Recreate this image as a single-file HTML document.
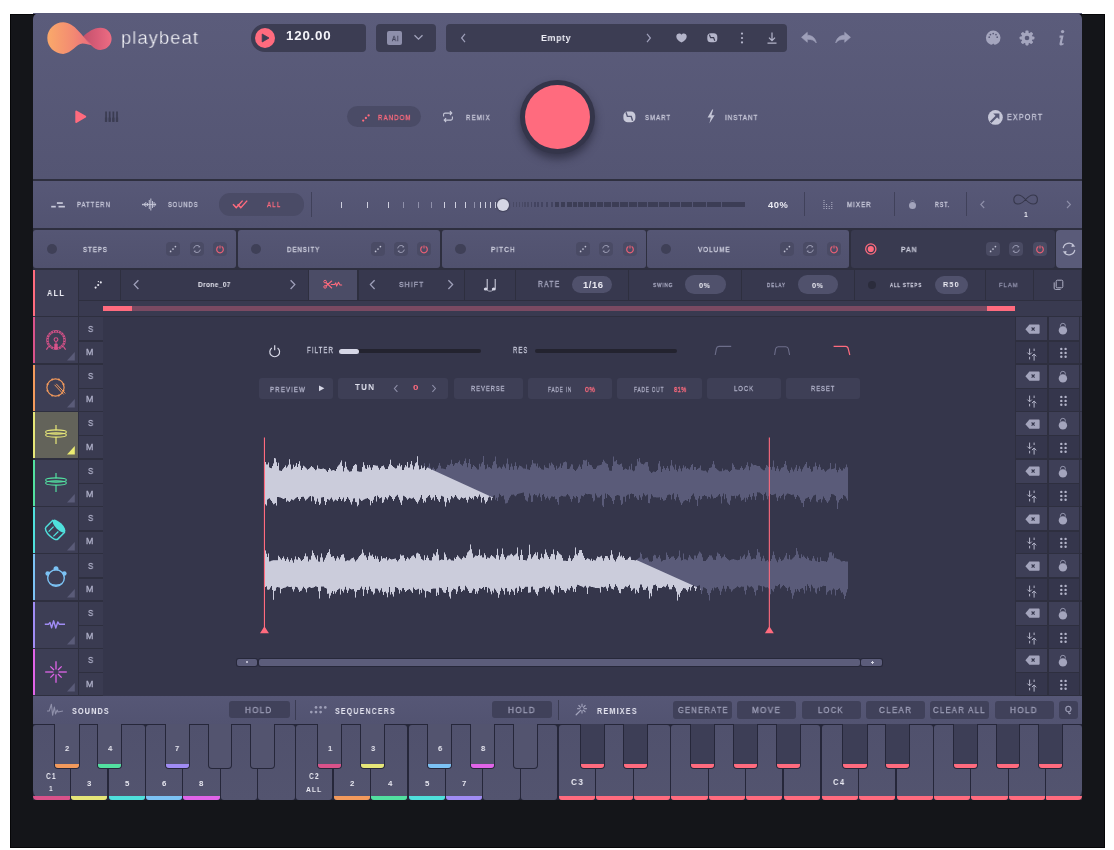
<!DOCTYPE html>
<html><head><meta charset="utf-8"><style>
html,body{margin:0;padding:0;background:#fff;width:1114px;height:850px;overflow:hidden;position:relative;font-family:"Liberation Sans", sans-serif}
div{position:absolute;box-sizing:border-box}
.t{line-height:1;white-space:nowrap;will-change:transform}
</style></head><body>
<div style="left:10px;top:14px;width:1094.8px;height:833.6px;background:#141519;border-radius:0px;border:1px solid #060608"></div>
<div style="left:33px;top:179px;width:1049px;height:621px;background:#2e2f3f;border-radius:0px;"></div>
<div style="left:33px;top:13px;width:1049px;height:166px;background:linear-gradient(#5b5c7b,#545573);border-radius:6px 6px 0 0;"></div>
<div style="left:33px;top:13px;width:1049px;height:1.2px;background:#5a5b7a;border-radius:0px;"></div>
<svg style="position:absolute;left:0px;top:0px;overflow:visible;" width="120" height="60" viewBox="0 0 120 60"><defs>
<linearGradient id="lg1" gradientUnits="userSpaceOnUse" x1="50" y1="0" x2="92" y2="0"><stop offset="0" stop-color="#f9a66b"/><stop offset="0.55" stop-color="#f38a72"/><stop offset="1" stop-color="#ec6a7e"/></linearGradient>
<linearGradient id="lg2" gradientUnits="userSpaceOnUse" x1="84" y1="0" x2="111" y2="0"><stop offset="0" stop-color="#c4526c"/><stop offset="0.5" stop-color="#d95d78"/><stop offset="1" stop-color="#ec6c82"/></linearGradient>
</defs>
<path d="M83.2 36.4 C88 32.5 93 27.8 100.5 27.8 C106.6 27.8 111.6 32.7 111.6 38.8 C111.6 44.9 106.6 49.9 100.5 49.9 C93 49.9 89 42 83.2 36.4 Z" fill="url(#lg2)"/>
<path d="M91.8 45.2 C82 37 75 22.3 63.2 22.3 C54.4 22.3 47.3 29.4 47.3 38.1 C47.3 46.8 54.4 53.9 63.2 53.9 C71 53.9 77 43.5 82.5 43.6 C86 43.7 88.5 45 91.8 45.2 Z" fill="url(#lg1)"/>
<path d="M83.2 36.4 C86.5 39.5 89 42.6 91.8 45.2 C94 46.5 96.5 49 100.5 49.9 C94 48 90 42 83.2 36.4 Z" fill="#e06a7c" opacity="0.6"/></svg>
<div class="t" style="left:121px;top:28px;font-size:19.2px;color:#fbfbfe;font-weight:400;letter-spacing:1.15px;transform:scaleX(0.955);transform-origin:0 0;-webkit-text-stroke:0.35px #595a79">playbeat</div>
<div style="left:251px;top:23.8px;width:115px;height:27.8px;background:#3c3d53;border-radius:14px 4px 4px 14px;"></div>
<div style="left:254.7px;top:27.6px;width:20.4px;height:20.4px;background:#ff6b7e;border-radius:50%;"></div>
<svg style="position:absolute;left:254px;top:27px;overflow:visible;" width="22" height="22" viewBox="0 0 22 22"><path d="M8.2 7 L15 11 L8.2 15 Z" fill="#3c3d53" stroke="#3c3d53" stroke-width="0.8" stroke-linejoin="round"/></svg>
<div class="t" style="left:285.82px;top:31.46px;font-size:11.97px;color:#f4f4fa;font-weight:700;letter-spacing:0.72px;transform:scaleX(1.110);transform-origin:0 0;">120.00</div>
<div style="left:375.7px;top:23.8px;width:60px;height:27.8px;background:#3c3d53;border-radius:4px;"></div>
<div style="left:387px;top:30.8px;width:15px;height:14px;background:#8e8fab;border-radius:2px;"></div>
<div class="t" style="left:391.52px;top:35.51px;font-size:6.76px;color:#42435a;font-weight:400;letter-spacing:1.15px;transform:scaleX(0.880);transform-origin:0 0;-webkit-text-stroke:0.3px #42435a;">AI</div>
<svg style="position:absolute;left:411px;top:32px;overflow:visible;" width="14" height="10" viewBox="0 0 14 10"><path d="M3.5 3.2 L7.5 7.2 L11.5 3.2" fill="none" stroke="#a3a4bd" stroke-width="1.3"/></svg>
<div style="left:446px;top:23.8px;width:341px;height:27.8px;background:#3c3d53;border-radius:4px;"></div>
<svg style="position:absolute;left:458px;top:31px;overflow:visible;" width="10" height="14" viewBox="0 0 10 14"><path d="M7 2.8 L3.6 7 L7 11.2" fill="none" stroke="#9fa0ba" stroke-width="1.2"/></svg>
<div class="t" style="left:540.62px;top:33.02px;font-size:9.72px;color:#ededf5;font-weight:700;letter-spacing:0.58px;transform:scaleX(0.926);transform-origin:0 0;">Empty</div>
<svg style="position:absolute;left:644px;top:31px;overflow:visible;" width="10" height="14" viewBox="0 0 10 14"><path d="M3 2.8 L6.4 7 L3 11.2" fill="none" stroke="#9fa0ba" stroke-width="1.2"/></svg>
<svg style="position:absolute;left:675px;top:32px;overflow:visible;" width="13" height="12" viewBox="0 0 13 12"><path d="M6.5 10.6 C3.2 8.4 1.3 6.7 1.3 4.4 C1.3 2.7 2.6 1.5 4.2 1.5 C5.2 1.5 6 2 6.5 2.8 C7 2 7.8 1.5 8.8 1.5 C10.4 1.5 11.7 2.7 11.7 4.4 C11.7 6.7 9.8 8.4 6.5 10.6 Z" fill="#b4b5ca"/></svg>
<svg style="position:absolute;left:706.5px;top:33px;overflow:visible;" width="11" height="10" viewBox="0 0 11 10"><rect x="0.3" y="0.3" width="10" height="9" rx="3.6" fill="#b4b5ca"/><path d="M2.4 1.6 L3.6 4.6 L6.6 4.6 L7.8 7.8" fill="none" stroke="#3c3d53" stroke-width="1.2"/></svg>
<svg style="position:absolute;left:739px;top:31px;overflow:visible;" width="6" height="14" viewBox="0 0 6 14"><circle cx="3" cy="2.6" r="1.1" fill="#b4b5ca"/><circle cx="3" cy="7" r="1.1" fill="#b4b5ca"/><circle cx="3" cy="11.4" r="1.1" fill="#b4b5ca"/></svg>
<svg style="position:absolute;left:765px;top:30px;overflow:visible;" width="14" height="16" viewBox="0 0 14 16"><path d="M7 2.5 L7 10.5 M4 7.6 L7 10.6 L10 7.6 M2.5 13.2 L11.5 13.2" fill="none" stroke="#b4b5ca" stroke-width="1.2"/></svg>
<svg style="position:absolute;left:799px;top:29px;overflow:visible;" width="20" height="17" viewBox="0 0 20 17"><path d="M2.5 8.3 L8.3 3.3 L8.3 6.2 C12.8 6.2 16.5 8.8 17.3 14 C15.4 11.3 12.6 10.3 8.3 10.3 L8.3 13.3 Z" fill="#9e9fb9" stroke="#9e9fb9" stroke-width="0.6" stroke-linejoin="round"/></svg>
<svg style="position:absolute;left:833px;top:29px;overflow:visible;" width="20" height="17" viewBox="0 0 20 17"><path d="M17.5 8.3 L11.7 3.3 L11.7 6.2 C7.2 6.2 3.5 8.8 2.7 14 C4.6 11.3 7.4 10.3 11.7 10.3 L11.7 13.3 Z" fill="#9e9fb9" stroke="#9e9fb9" stroke-width="0.6" stroke-linejoin="round"/></svg>
<svg style="position:absolute;left:984px;top:29px;overflow:visible;" width="18" height="18" viewBox="0 0 18 18"><circle cx="9.2" cy="8.8" r="7.3" fill="#a4a5be"/><path d="M7.6 16.3 L9.2 14.6 L10.8 16.3 Z" fill="#585977"/><circle cx="5.2" cy="8.2" r="0.85" fill="#585977"/><circle cx="6.4" cy="5.6" r="0.85" fill="#585977"/><circle cx="9.2" cy="4.6" r="0.85" fill="#585977"/><circle cx="12" cy="5.6" r="0.85" fill="#585977"/><circle cx="13.2" cy="8.2" r="0.85" fill="#585977"/></svg>
<svg style="position:absolute;left:1018px;top:29px;overflow:visible;" width="18" height="18" viewBox="0 0 18 18"><rect x="7.4" y="1.6" width="3.2" height="3.4" rx="0.8" fill="#a4a5be" transform="rotate(0 9 9)"/><rect x="7.4" y="1.6" width="3.2" height="3.4" rx="0.8" fill="#a4a5be" transform="rotate(45 9 9)"/><rect x="7.4" y="1.6" width="3.2" height="3.4" rx="0.8" fill="#a4a5be" transform="rotate(90 9 9)"/><rect x="7.4" y="1.6" width="3.2" height="3.4" rx="0.8" fill="#a4a5be" transform="rotate(135 9 9)"/><rect x="7.4" y="1.6" width="3.2" height="3.4" rx="0.8" fill="#a4a5be" transform="rotate(180 9 9)"/><rect x="7.4" y="1.6" width="3.2" height="3.4" rx="0.8" fill="#a4a5be" transform="rotate(225 9 9)"/><rect x="7.4" y="1.6" width="3.2" height="3.4" rx="0.8" fill="#a4a5be" transform="rotate(270 9 9)"/><rect x="7.4" y="1.6" width="3.2" height="3.4" rx="0.8" fill="#a4a5be" transform="rotate(315 9 9)"/><circle cx="9" cy="9" r="5.6" fill="#a4a5be"/><circle cx="9" cy="9" r="2.3" fill="#585977"/></svg>
<svg style="position:absolute;left:1055px;top:28px;overflow:visible;" width="12" height="20" viewBox="0 0 12 20"><circle cx="7.6" cy="3.6" r="1.7" fill="#a4a5be"/><path d="M4.6 7.6 L8.6 7.6 L7 14.6 C6.8 15.6 7.6 15.6 8.6 14.9 L8.6 16.4 C6 18.2 3.8 17.8 4.6 15 L5.8 9.8 L4.4 9.8 Z" fill="#a4a5be"/></svg>
<svg style="position:absolute;left:73px;top:109px;overflow:visible;" width="16" height="16" viewBox="0 0 16 16"><path d="M3.3 2.5 L12.2 7.7 L3.3 12.9 Z" fill="#ff6b7e" stroke="#ff6b7e" stroke-width="2" stroke-linejoin="round"/></svg>
<svg style="position:absolute;left:104px;top:111px;overflow:visible;" width="15" height="12" viewBox="0 0 15 12"><rect x="1.20" y="0.5" width="1.7" height="10.3" fill="#3b3c52"/><rect x="0.90" y="6.6" width="2.3" height="4.2" fill="#3b3c52"/><rect x="4.85" y="0.5" width="1.7" height="10.3" fill="#3b3c52"/><rect x="4.55" y="6.6" width="2.3" height="4.2" fill="#3b3c52"/><rect x="8.50" y="0.5" width="1.7" height="10.3" fill="#3b3c52"/><rect x="8.20" y="6.6" width="2.3" height="4.2" fill="#3b3c52"/><rect x="12.15" y="0.5" width="1.7" height="10.3" fill="#3b3c52"/><rect x="11.85" y="6.6" width="2.3" height="4.2" fill="#3b3c52"/></svg>
<div style="left:346.5px;top:105.8px;width:74.7px;height:21.5px;background:#4a4b66;border-radius:11px;"></div>
<svg style="position:absolute;left:360px;top:110px;overflow:visible;" width="12" height="14" viewBox="0 0 12 14"><circle cx="3.2" cy="10.6" r="1.15" fill="#ff6b7e"/><circle cx="5.9" cy="8" r="1.15" fill="#ff6b7e"/><circle cx="8.6" cy="5.4" r="1.15" fill="#ff6b7e"/></svg>
<div class="t" style="left:378.48px;top:113.56px;font-size:7.46px;color:#ff6b7e;font-weight:400;letter-spacing:1.27px;transform:scaleX(0.824);transform-origin:0 0;-webkit-text-stroke:0.3px #ff6b7e;">RANDOM</div>
<svg style="position:absolute;left:441px;top:109px;overflow:visible;" width="14" height="15" viewBox="0 0 14 15"><path d="M2.6 7.6 L2.6 5.6 C2.6 4.6 3.2 4.1 4 4.1 L10.8 4.1 M8.9 2.2 L10.8 4.1 L8.9 6 M11.4 7.6 L11.4 9.6 C11.4 10.6 10.8 11.1 10 11.1 L3.2 11.1 M5.1 9.2 L3.2 11.1 L5.1 13" fill="none" stroke="#c6c7d8" stroke-width="1.1"/></svg>
<div class="t" style="left:465.62px;top:113.56px;font-size:7.46px;color:#cacadb;font-weight:400;letter-spacing:1.27px;transform:scaleX(0.825);transform-origin:0 0;-webkit-text-stroke:0.3px #cacadb;">REMIX</div>
<div style="left:520.2px;top:79.5px;width:74.5px;height:74px;border:5.6px solid #34354a;border-radius:50%;background:#ff6b7e;box-shadow:0 5px 9px rgba(32,32,48,0.6)"></div>
<svg style="position:absolute;left:622.6px;top:110.8px;overflow:visible;" width="13" height="12" viewBox="0 0 13 12"><rect x="0.4" y="0.4" width="12" height="10.9" rx="4.3" fill="#c9cada"/><path d="M3 1.2 L4.4 5.4 L8.2 5.4 L9.6 9.8" fill="none" stroke="#575976" stroke-width="1.4"/></svg>
<div class="t" style="left:645px;top:113.56px;font-size:7.46px;color:#cacadb;font-weight:400;letter-spacing:1.27px;transform:scaleX(0.810);transform-origin:0 0;-webkit-text-stroke:0.3px #cacadb;">SMART</div>
<svg style="position:absolute;left:705px;top:108px;overflow:visible;" width="12" height="17" viewBox="0 0 12 17"><path d="M7.2 1.6 L2.6 9.4 L5.8 9.4 L4.4 15.4 L9.6 7.2 L6.4 7.2 L8.2 1.6 Z" fill="#c4c5d6"/></svg>
<div class="t" style="left:724.76px;top:113.56px;font-size:7.46px;color:#cacadb;font-weight:400;letter-spacing:1.27px;transform:scaleX(0.828);transform-origin:0 0;-webkit-text-stroke:0.3px #cacadb;">INSTANT</div>
<svg style="position:absolute;left:987.6px;top:109.6px;overflow:visible;" width="16" height="16" viewBox="0 0 16 16"><circle cx="7.4" cy="7.4" r="7.4" fill="#c6c7d8"/><path d="M2.6 12.2 L9.6 5.2" stroke="#575976" stroke-width="2.3"/><path d="M5.2 3.4 L11.4 3.4 L11.4 9.6 Z" fill="#575976"/></svg>
<div class="t" style="left:1006.62px;top:113.35px;font-size:9.01px;color:#c4c5d7;font-weight:400;letter-spacing:1.53px;transform:scaleX(0.789);transform-origin:0 0;-webkit-text-stroke:0.3px #c4c5d7;">EXPORT</div>
<div style="left:33px;top:181.1px;width:1049px;height:46.5px;background:linear-gradient(#575877,#525371);border-radius:0px;"></div>
<svg style="position:absolute;left:50px;top:199px;overflow:visible;" width="16" height="10" viewBox="0 0 16 10"><rect x="1.2" y="6.8" width="4.6" height="1.7" fill="#c8c9da"/><rect x="6.9" y="3.2" width="5.9" height="1.7" fill="#c8c9da"/><rect x="8.5" y="6.8" width="6.4" height="1.7" fill="#c8c9da"/></svg>
<div class="t" style="left:76.52px;top:201.04px;font-size:7.61px;color:#c8c9da;font-weight:400;letter-spacing:1.29px;transform:scaleX(0.780);transform-origin:0 0;-webkit-text-stroke:0.3px #c8c9da;">PATTERN</div>
<svg style="position:absolute;left:142px;top:198px;overflow:visible;" width="14" height="14" viewBox="0 0 14 14"><rect x="0.2" y="5.8" width="0.9" height="1.5" fill="#c8c9da"/><rect x="1.8" y="5.0" width="0.9" height="3" fill="#c8c9da"/><rect x="3.4" y="4.0" width="0.9" height="5" fill="#c8c9da"/><rect x="5.0" y="5.0" width="0.9" height="3" fill="#c8c9da"/><rect x="6.8" y="2.0" width="0.9" height="9" fill="#c8c9da"/><rect x="8.4" y="0.5" width="0.9" height="12" fill="#c8c9da"/><rect x="10.0" y="3.0" width="0.9" height="7" fill="#c8c9da"/><rect x="11.6" y="4.0" width="0.9" height="5" fill="#c8c9da"/><rect x="13.2" y="5.5" width="0.9" height="2" fill="#c8c9da"/><rect x="0" y="6.1" width="14" height="0.8" fill="#c8c9da"/></svg>
<div class="t" style="left:168.24px;top:201.04px;font-size:7.61px;color:#c8c9da;font-weight:400;letter-spacing:1.29px;transform:scaleX(0.756);transform-origin:0 0;-webkit-text-stroke:0.3px #c8c9da;">SOUNDS</div>
<div style="left:219.1px;top:193.3px;width:85px;height:22.3px;background:#4a4b66;border-radius:11px;"></div>
<svg style="position:absolute;left:231px;top:197px;overflow:visible;" width="18" height="14" viewBox="0 0 18 14"><path d="M2 7.2 L5.2 10.6 L11.6 3.6 M6.6 7.2 L9.8 10.6 L16.2 3.6" fill="none" stroke="#ff6b7e" stroke-width="1.4"/></svg>
<div class="t" style="left:267.1px;top:201.04px;font-size:7.61px;color:#ff6b7e;font-weight:400;letter-spacing:1.29px;transform:scaleX(0.819);transform-origin:0 0;-webkit-text-stroke:0.3px #ff6b7e;">ALL</div>
<div style="left:311.2px;top:192.4px;width:1px;height:24.3px;background:#40415a;border-radius:0px;"></div>
<div style="left:341px;top:201.8px;width:1.1px;height:5.8px;background:#cfd0df;border-radius:0px;"></div>
<div style="left:367px;top:201.8px;width:1.1px;height:5.8px;background:#cfd0df;border-radius:0px;"></div>
<div style="left:387.8px;top:201.8px;width:1.1px;height:5.8px;background:#cfd0df;border-radius:0px;"></div>
<div style="left:403px;top:201.8px;width:1.1px;height:5.8px;background:#8f90aa;border-radius:0px;"></div>
<div style="left:417.8px;top:201.8px;width:1.1px;height:5.8px;background:#8f90aa;border-radius:0px;"></div>
<div style="left:431.2px;top:201.8px;width:1.1px;height:5.8px;background:#8f90aa;border-radius:0px;"></div>
<div style="left:443.9px;top:201.8px;width:1.1px;height:5.8px;background:#cfd0df;border-radius:0px;"></div>
<div style="left:454.9px;top:201.8px;width:1.1px;height:5.8px;background:#cfd0df;border-radius:0px;"></div>
<div style="left:465px;top:201.8px;width:1.1px;height:5.8px;background:#cfd0df;border-radius:0px;"></div>
<div style="left:473.5px;top:201.8px;width:1.1px;height:5.8px;background:#8f90aa;border-radius:0px;"></div>
<div style="left:479.8px;top:201.8px;width:1.1px;height:5.8px;background:#cfd0df;border-radius:0px;"></div>
<div style="left:484.9px;top:201.8px;width:1.1px;height:5.8px;background:#cfd0df;border-radius:0px;"></div>
<div style="left:489.7px;top:201.8px;width:1.1px;height:5.8px;background:#cfd0df;border-radius:0px;"></div>
<div style="left:494.6px;top:201.8px;width:1.1px;height:5.8px;background:#cfd0df;border-radius:0px;"></div>
<div style="left:512.8px;top:201.8px;width:1.4px;height:5.6px;background:#484964;border-radius:0px;"></div>
<div style="left:516.2px;top:201.8px;width:1px;height:5.6px;background:#484964;border-radius:0px;"></div>
<div style="left:518.7px;top:201.8px;width:1.2px;height:5.6px;background:#484964;border-radius:0px;"></div>
<div style="left:521.9px;top:201.8px;width:1.2px;height:5.6px;background:#484964;border-radius:0px;"></div>
<div style="left:524.4px;top:201.8px;width:1.2px;height:5.6px;background:#484964;border-radius:0px;"></div>
<div style="left:527.4px;top:201.8px;width:1.4px;height:5.6px;background:#484964;border-radius:0px;"></div>
<div style="left:530.7px;top:201.8px;width:1.6px;height:5.6px;background:#434460;border-radius:0px;"></div>
<div style="left:534px;top:201.8px;width:1.5px;height:5.6px;background:#434460;border-radius:0px;"></div>
<div style="left:537.4px;top:201.8px;width:1.7px;height:5.6px;background:#434460;border-radius:0px;"></div>
<div style="left:541.4px;top:201.8px;width:2px;height:5.6px;background:#434460;border-radius:0px;"></div>
<div style="left:545.5px;top:201.8px;width:2.3px;height:5.6px;background:#434460;border-radius:0px;"></div>
<div style="left:550.5px;top:201.8px;width:2.7px;height:5.6px;background:#434460;border-radius:0px;"></div>
<div style="left:555.4px;top:201.8px;width:3.6px;height:5.6px;background:#3c3d55;border-radius:0px;"></div>
<div style="left:561.1px;top:201.8px;width:4.2px;height:5.6px;background:#3c3d55;border-radius:0px;"></div>
<div style="left:567px;top:201.8px;width:4.5px;height:5.6px;background:#3c3d55;border-radius:0px;"></div>
<div style="left:572.5px;top:201.8px;width:4.4px;height:5.6px;background:#3c3d55;border-radius:0px;"></div>
<div style="left:577.9px;top:201.8px;width:5px;height:5.6px;background:#3c3d55;border-radius:0px;"></div>
<div style="left:583.8px;top:201.8px;width:5.5px;height:5.6px;background:#3c3d55;border-radius:0px;"></div>
<div style="left:590.3px;top:201.8px;width:5.9px;height:5.6px;background:#3c3d55;border-radius:0px;"></div>
<div style="left:597.2px;top:201.8px;width:5.9px;height:5.6px;background:#3c3d55;border-radius:0px;"></div>
<div style="left:604.3px;top:201.8px;width:7px;height:5.6px;background:#3c3d55;border-radius:0px;"></div>
<div style="left:612.3px;top:201.8px;width:7.1px;height:5.6px;background:#3c3d55;border-radius:0px;"></div>
<div style="left:620.4px;top:201.8px;width:7.6px;height:5.6px;background:#3c3d55;border-radius:0px;"></div>
<div style="left:629px;top:201.8px;width:8.2px;height:5.6px;background:#3c3d55;border-radius:0px;"></div>
<div style="left:638.2px;top:201.8px;width:8.8px;height:5.6px;background:#3c3d55;border-radius:0px;"></div>
<div style="left:648px;top:201.8px;width:9.8px;height:5.6px;background:#3c3d55;border-radius:0px;"></div>
<div style="left:658.8px;top:201.8px;width:10px;height:5.6px;background:#3c3d55;border-radius:0px;"></div>
<div style="left:669.8px;top:201.8px;width:10.1px;height:5.6px;background:#3c3d55;border-radius:0px;"></div>
<div style="left:680.9px;top:201.8px;width:11.5px;height:5.6px;background:#3c3d55;border-radius:0px;"></div>
<div style="left:693.4px;top:201.8px;width:12.4px;height:5.6px;background:#3c3d55;border-radius:0px;"></div>
<div style="left:706.8px;top:201.8px;width:13.8px;height:5.6px;background:#3c3d55;border-radius:0px;"></div>
<div style="left:721.6px;top:201.8px;width:23.7px;height:5.6px;background:#3c3d55;border-radius:0px;"></div>
<div style="left:497.1px;top:198.6px;width:12px;height:12px;background:#d5d6e5;border-radius:50%;box-shadow:0 0 1px 1px rgba(50,50,70,0.5)"></div>
<div class="t" style="left:768px;top:200.63px;font-size:8.73px;color:#ebebf3;font-weight:700;letter-spacing:0.52px;transform:scaleX(1.072);transform-origin:0 0;">40%</div>
<div style="left:804.3px;top:192px;width:1px;height:24.4px;background:#40415a;border-radius:0px;"></div>
<svg style="position:absolute;left:822.5px;top:200px;overflow:visible;" width="11" height="10" viewBox="0 0 11 10"><rect x="0.5" y="0" width="1" height="1" fill="#b4b5c9"/><rect x="0.5" y="2" width="1" height="1" fill="#b4b5c9"/><rect x="0.5" y="4" width="1" height="1" fill="#b4b5c9"/><rect x="0.5" y="6" width="1" height="1" fill="#b4b5c9"/><rect x="0.5" y="8" width="1" height="1" fill="#b4b5c9"/><rect x="3.1" y="4" width="1" height="1" fill="#b4b5c9"/><rect x="3.1" y="6" width="1" height="1" fill="#b4b5c9"/><rect x="3.1" y="8" width="1" height="1" fill="#b4b5c9"/><rect x="5.7" y="6" width="1" height="1" fill="#b4b5c9"/><rect x="5.7" y="8" width="1" height="1" fill="#b4b5c9"/><rect x="8.3" y="2" width="1" height="1" fill="#b4b5c9"/><rect x="8.3" y="4" width="1" height="1" fill="#b4b5c9"/><rect x="8.3" y="6" width="1" height="1" fill="#b4b5c9"/><rect x="8.3" y="8" width="1" height="1" fill="#b4b5c9"/></svg>
<div class="t" style="left:846.52px;top:202.41px;font-size:6.76px;color:#c8c9da;font-weight:400;letter-spacing:1.15px;transform:scaleX(0.911);transform-origin:0 0;-webkit-text-stroke:0.3px #c8c9da;">MIXER</div>
<div style="left:893.7px;top:192px;width:1px;height:24.4px;background:#40415a;border-radius:0px;"></div>
<svg style="position:absolute;left:906px;top:198px;overflow:visible;" width="13" height="13" viewBox="0 0 13 13"><circle cx="6.5" cy="7.6" r="3.5" fill="#a3a4bc"/><path d="M4.6 5.2 L4.6 4.2 A1.9 1.9 0 0 1 8.4 4.2 L8.4 5.2" fill="none" stroke="#7a7b96" stroke-width="0.8"/></svg>
<div class="t" style="left:934.76px;top:202.41px;font-size:6.76px;color:#c8c9da;font-weight:400;letter-spacing:1.15px;transform:scaleX(0.785);transform-origin:0 0;-webkit-text-stroke:0.3px #c8c9da;">RST.</div>
<div style="left:966.4px;top:192px;width:1px;height:24.4px;background:#40415a;border-radius:0px;"></div>
<svg style="position:absolute;left:978px;top:198px;overflow:visible;" width="9" height="13" viewBox="0 0 9 13"><path d="M6.2 3 L2.8 6.5 L6.2 10" fill="none" stroke="#8e8fa9" stroke-width="1.1"/></svg>
<svg style="position:absolute;left:1011px;top:193px;overflow:visible;" width="30" height="13" viewBox="0 0 30 13"><path d="M14.6 6.5 C11.4 3 9.2 2 7 2 C4.4 2 2.8 4 2.8 6.5 C2.8 9 4.4 11 7 11 C9.2 11 11.4 10 14.6 6.5 C17.8 3 20 2 22.2 2 C24.8 2 26.4 4 26.4 6.5 C26.4 9 24.8 11 22.2 11 C20 11 17.8 10 14.6 6.5 Z" fill="none" stroke="#36374b" stroke-width="1.1"/></svg>
<div class="t" style="left:1024.38px;top:211.28px;font-size:8px;color:#eeeef5;font-weight:700;letter-spacing:0.48px;transform:scaleX(0.850);transform-origin:0 0;">1</div>
<svg style="position:absolute;left:1064px;top:198px;overflow:visible;" width="9" height="13" viewBox="0 0 9 13"><path d="M3 3 L6.4 6.5 L3 10" fill="none" stroke="#8e8fa9" stroke-width="1.1"/></svg>
<div style="left:33px;top:229.9px;width:202.8px;height:38px;background:linear-gradient(#555674,#50516e);border-radius:3px;"></div>
<div style="left:46.6px;top:243.8px;width:10.4px;height:10.4px;background:#3f4057;border-radius:50%;"></div>
<div class="t" style="left:83px;top:246.88px;font-size:6.9px;color:#d0d1e0;font-weight:400;letter-spacing:1.17px;transform:scaleX(0.872);transform-origin:0 0;-webkit-text-stroke:0.3px #d0d1e0;">STEPS</div>
<div style="left:166.2px;top:241.8px;width:14px;height:13.8px;background:#4a4b65;border-radius:4px;"></div>
<svg style="position:absolute;left:166.2px;top:241.8px;overflow:visible;" width="14" height="14" viewBox="0 0 14 14"><circle cx="4.6" cy="9.4" r="0.85" fill="#c2c3d5"/><circle cx="7" cy="7" r="0.85" fill="#c2c3d5"/><circle cx="9.4" cy="4.6" r="0.85" fill="#c2c3d5"/></svg>
<div style="left:189.6px;top:241.8px;width:14px;height:13.8px;background:#4a4b65;border-radius:4px;"></div>
<svg style="position:absolute;left:189.6px;top:241.8px;overflow:visible;" width="14" height="14" viewBox="0 0 14 14"><path d="M3.7 6.4 A3.4 3.4 0 0 1 9.6 4.6 M10.3 7.6 A3.4 3.4 0 0 1 4.4 9.4" fill="none" stroke="#9a9bb3" stroke-width="1"/><path d="M8.8 3.4 L10.5 5 L8.5 5.7 Z M5.2 10.6 L3.5 9 L5.5 8.3 Z" fill="#9a9bb3"/></svg>
<div style="left:213px;top:241.8px;width:14px;height:13.8px;background:#4a4b65;border-radius:4px;"></div>
<svg style="position:absolute;left:213px;top:241.8px;overflow:visible;" width="14" height="14" viewBox="0 0 14 14"><path d="M5.4 4.6 A3.3 3.3 0 1 0 8.6 4.6" fill="none" stroke="#ea6075" stroke-width="1.2"/><path d="M7 3.6 L7 6.4" stroke="#ea6075" stroke-width="1.1"/></svg>
<div style="left:237.5px;top:229.9px;width:202.7px;height:38px;background:linear-gradient(#555674,#50516e);border-radius:3px;"></div>
<div style="left:251.1px;top:243.8px;width:10.4px;height:10.4px;background:#3f4057;border-radius:50%;"></div>
<div class="t" style="left:287.1px;top:246.88px;font-size:6.9px;color:#d0d1e0;font-weight:400;letter-spacing:1.17px;transform:scaleX(0.874);transform-origin:0 0;-webkit-text-stroke:0.3px #d0d1e0;">DENSITY</div>
<div style="left:370.6px;top:241.8px;width:14px;height:13.8px;background:#4a4b65;border-radius:4px;"></div>
<svg style="position:absolute;left:370.6px;top:241.8px;overflow:visible;" width="14" height="14" viewBox="0 0 14 14"><circle cx="4.6" cy="9.4" r="0.85" fill="#c2c3d5"/><circle cx="7" cy="7" r="0.85" fill="#c2c3d5"/><circle cx="9.4" cy="4.6" r="0.85" fill="#c2c3d5"/></svg>
<div style="left:394px;top:241.8px;width:14px;height:13.8px;background:#4a4b65;border-radius:4px;"></div>
<svg style="position:absolute;left:394px;top:241.8px;overflow:visible;" width="14" height="14" viewBox="0 0 14 14"><path d="M3.7 6.4 A3.4 3.4 0 0 1 9.6 4.6 M10.3 7.6 A3.4 3.4 0 0 1 4.4 9.4" fill="none" stroke="#9a9bb3" stroke-width="1"/><path d="M8.8 3.4 L10.5 5 L8.5 5.7 Z M5.2 10.6 L3.5 9 L5.5 8.3 Z" fill="#9a9bb3"/></svg>
<div style="left:417.4px;top:241.8px;width:14px;height:13.8px;background:#4a4b65;border-radius:4px;"></div>
<svg style="position:absolute;left:417.4px;top:241.8px;overflow:visible;" width="14" height="14" viewBox="0 0 14 14"><path d="M5.4 4.6 A3.3 3.3 0 1 0 8.6 4.6" fill="none" stroke="#ea6075" stroke-width="1.2"/><path d="M7 3.6 L7 6.4" stroke="#ea6075" stroke-width="1.1"/></svg>
<div style="left:441.8px;top:229.9px;width:203.8px;height:38px;background:linear-gradient(#555674,#50516e);border-radius:3px;"></div>
<div style="left:455.4px;top:243.8px;width:10.4px;height:10.4px;background:#3f4057;border-radius:50%;"></div>
<div class="t" style="left:491.48px;top:246.88px;font-size:6.9px;color:#d0d1e0;font-weight:400;letter-spacing:1.17px;transform:scaleX(0.928);transform-origin:0 0;-webkit-text-stroke:0.3px #d0d1e0;">PITCH</div>
<div style="left:576px;top:241.8px;width:14px;height:13.8px;background:#4a4b65;border-radius:4px;"></div>
<svg style="position:absolute;left:576px;top:241.8px;overflow:visible;" width="14" height="14" viewBox="0 0 14 14"><circle cx="4.6" cy="9.4" r="0.85" fill="#c2c3d5"/><circle cx="7" cy="7" r="0.85" fill="#c2c3d5"/><circle cx="9.4" cy="4.6" r="0.85" fill="#c2c3d5"/></svg>
<div style="left:599.4px;top:241.8px;width:14px;height:13.8px;background:#4a4b65;border-radius:4px;"></div>
<svg style="position:absolute;left:599.4px;top:241.8px;overflow:visible;" width="14" height="14" viewBox="0 0 14 14"><path d="M3.7 6.4 A3.4 3.4 0 0 1 9.6 4.6 M10.3 7.6 A3.4 3.4 0 0 1 4.4 9.4" fill="none" stroke="#9a9bb3" stroke-width="1"/><path d="M8.8 3.4 L10.5 5 L8.5 5.7 Z M5.2 10.6 L3.5 9 L5.5 8.3 Z" fill="#9a9bb3"/></svg>
<div style="left:622.8px;top:241.8px;width:14px;height:13.8px;background:#4a4b65;border-radius:4px;"></div>
<svg style="position:absolute;left:622.8px;top:241.8px;overflow:visible;" width="14" height="14" viewBox="0 0 14 14"><path d="M5.4 4.6 A3.3 3.3 0 1 0 8.6 4.6" fill="none" stroke="#ea6075" stroke-width="1.2"/><path d="M7 3.6 L7 6.4" stroke="#ea6075" stroke-width="1.1"/></svg>
<div style="left:647.2px;top:229.9px;width:202.2px;height:38px;background:linear-gradient(#555674,#50516e);border-radius:3px;"></div>
<div style="left:660.8px;top:243.8px;width:10.4px;height:10.4px;background:#3f4057;border-radius:50%;"></div>
<div class="t" style="left:697.52px;top:246.88px;font-size:6.9px;color:#d0d1e0;font-weight:400;letter-spacing:1.17px;transform:scaleX(0.904);transform-origin:0 0;-webkit-text-stroke:0.3px #d0d1e0;">VOLUME</div>
<div style="left:779.8px;top:241.8px;width:14px;height:13.8px;background:#4a4b65;border-radius:4px;"></div>
<svg style="position:absolute;left:779.8px;top:241.8px;overflow:visible;" width="14" height="14" viewBox="0 0 14 14"><circle cx="4.6" cy="9.4" r="0.85" fill="#c2c3d5"/><circle cx="7" cy="7" r="0.85" fill="#c2c3d5"/><circle cx="9.4" cy="4.6" r="0.85" fill="#c2c3d5"/></svg>
<div style="left:803.2px;top:241.8px;width:14px;height:13.8px;background:#4a4b65;border-radius:4px;"></div>
<svg style="position:absolute;left:803.2px;top:241.8px;overflow:visible;" width="14" height="14" viewBox="0 0 14 14"><path d="M3.7 6.4 A3.4 3.4 0 0 1 9.6 4.6 M10.3 7.6 A3.4 3.4 0 0 1 4.4 9.4" fill="none" stroke="#9a9bb3" stroke-width="1"/><path d="M8.8 3.4 L10.5 5 L8.5 5.7 Z M5.2 10.6 L3.5 9 L5.5 8.3 Z" fill="#9a9bb3"/></svg>
<div style="left:826.6px;top:241.8px;width:14px;height:13.8px;background:#4a4b65;border-radius:4px;"></div>
<svg style="position:absolute;left:826.6px;top:241.8px;overflow:visible;" width="14" height="14" viewBox="0 0 14 14"><path d="M5.4 4.6 A3.3 3.3 0 1 0 8.6 4.6" fill="none" stroke="#ea6075" stroke-width="1.2"/><path d="M7 3.6 L7 6.4" stroke="#ea6075" stroke-width="1.1"/></svg>
<div style="left:851px;top:229.9px;width:204.4px;height:38px;background:#393a50;border-radius:3px;"></div>
<svg style="position:absolute;left:864px;top:242px;overflow:visible;" width="14" height="14" viewBox="0 0 14 14"><circle cx="6.8" cy="7" r="5.1" fill="none" stroke="#ff6b7e" stroke-width="1.3"/><circle cx="6.8" cy="7" r="3.1" fill="#ff6b7e"/></svg>
<div class="t" style="left:901px;top:246.88px;font-size:6.9px;color:#d0d1e0;font-weight:400;letter-spacing:1.17px;transform:scaleX(0.966);transform-origin:0 0;-webkit-text-stroke:0.3px #d0d1e0;">PAN</div>
<div style="left:985.8px;top:241.8px;width:14px;height:13.8px;background:#4a4b63;border-radius:4px;"></div>
<svg style="position:absolute;left:985.8px;top:241.8px;overflow:visible;" width="14" height="14" viewBox="0 0 14 14"><circle cx="4.6" cy="9.4" r="0.85" fill="#c2c3d5"/><circle cx="7" cy="7" r="0.85" fill="#c2c3d5"/><circle cx="9.4" cy="4.6" r="0.85" fill="#c2c3d5"/></svg>
<div style="left:1009.2px;top:241.8px;width:14px;height:13.8px;background:#4a4b63;border-radius:4px;"></div>
<svg style="position:absolute;left:1009.2px;top:241.8px;overflow:visible;" width="14" height="14" viewBox="0 0 14 14"><path d="M3.7 6.4 A3.4 3.4 0 0 1 9.6 4.6 M10.3 7.6 A3.4 3.4 0 0 1 4.4 9.4" fill="none" stroke="#9a9bb3" stroke-width="1"/><path d="M8.8 3.4 L10.5 5 L8.5 5.7 Z M5.2 10.6 L3.5 9 L5.5 8.3 Z" fill="#9a9bb3"/></svg>
<div style="left:1032.6px;top:241.8px;width:14px;height:13.8px;background:#4a4b63;border-radius:4px;"></div>
<svg style="position:absolute;left:1032.6px;top:241.8px;overflow:visible;" width="14" height="14" viewBox="0 0 14 14"><path d="M5.4 4.6 A3.3 3.3 0 1 0 8.6 4.6" fill="none" stroke="#ea6075" stroke-width="1.2"/><path d="M7 3.6 L7 6.4" stroke="#ea6075" stroke-width="1.1"/></svg>
<div style="left:1056px;top:229.9px;width:26px;height:38px;background:#5a5b79;border-radius:4px 0 0 4px;"></div>
<svg style="position:absolute;left:1060px;top:240px;overflow:visible;" width="18" height="18" viewBox="0 0 18 18"><path d="M3.2 8.2 A5.9 5.9 0 0 1 13.8 5.6 M14.8 9.8 A5.9 5.9 0 0 1 4.2 12.4" fill="none" stroke="#c2c3d5" stroke-width="1.2"/><path d="M12.2 3.4 L15.3 6.4 L11.4 7.1 Z M5.8 14.6 L2.7 11.6 L6.6 10.9 Z" fill="#c2c3d5"/></svg>
<div style="left:33px;top:269.5px;width:45px;height:46.5px;background:#3d3e55;border-radius:0px;"></div>
<div style="left:33px;top:269.5px;width:1.6px;height:46.5px;background:#ff6b7e;border-radius:0px;"></div>
<div class="t" style="left:46.76px;top:288.73px;font-size:8.45px;color:#ededf5;font-weight:700;letter-spacing:1.44px;transform:scaleX(0.873);transform-origin:0 0;">ALL</div>
<div style="left:79px;top:269.5px;width:40.6px;height:30.3px;background:#37384e;border-radius:0px;"></div>
<div style="left:120.6px;top:269.5px;width:187px;height:30.3px;background:#37384e;border-radius:0px;"></div>
<div style="left:308.6px;top:269.5px;width:48.9px;height:30.3px;background:#4b4c66;border-radius:0px;"></div>
<div style="left:358.5px;top:269.5px;width:105.3px;height:30.3px;background:#37384e;border-radius:0px;"></div>
<div style="left:464.8px;top:269.5px;width:49.8px;height:30.3px;background:#37384e;border-radius:0px;"></div>
<div style="left:515.6px;top:269.5px;width:112.2px;height:30.3px;background:#37384e;border-radius:0px;"></div>
<div style="left:628.8px;top:269.5px;width:112px;height:30.3px;background:#37384e;border-radius:0px;"></div>
<div style="left:741.8px;top:269.5px;width:111.9px;height:30.3px;background:#37384e;border-radius:0px;"></div>
<div style="left:854.7px;top:269.5px;width:129.9px;height:30.3px;background:#37384e;border-radius:0px;"></div>
<div style="left:985.6px;top:269.5px;width:47.2px;height:30.3px;background:#37384e;border-radius:0px;"></div>
<div style="left:1033.8px;top:269.5px;width:47.7px;height:30.3px;background:#37384e;border-radius:0px;"></div>
<div style="left:79px;top:300.9px;width:1003px;height:15.3px;background:#393a50;border-radius:0px;"></div>
<div style="left:103.4px;top:306.3px;width:912px;height:4.7px;background:#7a4a62;border-radius:0px;"></div>
<div style="left:103.4px;top:306.3px;width:28.6px;height:4.7px;background:#ff6b7e;border-radius:0px;"></div>
<div style="left:987px;top:306.3px;width:28.4px;height:4.7px;background:#ff6b7e;border-radius:0px;"></div>
<svg style="position:absolute;left:93px;top:279px;overflow:visible;" width="12" height="12" viewBox="0 0 12 12"><circle cx="2.6" cy="8.6" r="1.05" fill="#e6e6f0"/><circle cx="5.2" cy="6" r="1.05" fill="#e6e6f0"/><circle cx="7.8" cy="3.4" r="1.05" fill="#e6e6f0"/><circle cx="5.4" cy="2.6" r="0.7" fill="#e6e6f0"/></svg>
<svg style="position:absolute;left:131px;top:277px;overflow:visible;" width="10" height="14" viewBox="0 0 10 14"><path d="M7.4 3.2 L3.2 7.6 L7.4 12" fill="none" stroke="#9fa0ba" stroke-width="1.3"/></svg>
<div class="t" style="left:198px;top:281.42px;font-size:7.04px;color:#e6e6f0;font-weight:700;letter-spacing:0.42px;transform:scaleX(0.925);transform-origin:0 0;">Drone_07</div>
<svg style="position:absolute;left:287px;top:277px;overflow:visible;" width="10" height="14" viewBox="0 0 10 14"><path d="M3.6 3.2 L7.8 7.6 L3.6 12" fill="none" stroke="#9fa0ba" stroke-width="1.3"/></svg>
<svg style="position:absolute;left:318px;top:274px;overflow:visible;" width="30" height="20" viewBox="0 0 30 20"><circle cx="7.1" cy="7.6" r="1.3" fill="none" stroke="#ff6b7e" stroke-width="1"/><circle cx="7.1" cy="12.9" r="1.3" fill="none" stroke="#ff6b7e" stroke-width="1"/><path d="M8 8.5 L13.7 14 M8 12 L13.7 7 M13.2 10.5 L16.7 10.5 L17.8 8.9 L18.6 12.1 L20.5 8.3 L22 11 L23.7 11" fill="none" stroke="#ff6b7e" stroke-width="1.05" stroke-linejoin="round" stroke-linecap="round"/></svg>
<svg style="position:absolute;left:367px;top:277px;overflow:visible;" width="10" height="14" viewBox="0 0 10 14"><path d="M7.6 3.2 L3.4 7.6 L7.6 12" fill="none" stroke="#9fa0ba" stroke-width="1.3"/></svg>
<div class="t" style="left:399.14px;top:281.32px;font-size:7.61px;color:#a8a9c1;font-weight:400;letter-spacing:1.29px;transform:scaleX(0.895);transform-origin:0 0;-webkit-text-stroke:0.3px #a8a9c1;">SHIFT</div>
<svg style="position:absolute;left:446px;top:277px;overflow:visible;" width="10" height="14" viewBox="0 0 10 14"><path d="M2.4 3.2 L6.6 7.6 L2.4 12" fill="none" stroke="#9fa0ba" stroke-width="1.3"/></svg>
<svg style="position:absolute;left:482px;top:276px;overflow:visible;" width="16" height="16" viewBox="0 0 16 16"><path d="M5.2 3 L5.2 12.6 M13.2 3 L13.2 12.6" stroke="#d6d7e6" stroke-width="1"/><ellipse cx="3.8" cy="13" rx="2" ry="1.5" fill="#d6d7e6"/><ellipse cx="11.8" cy="13" rx="2" ry="1.5" fill="#d6d7e6"/><path d="M5 14 C6.5 15.6 9.5 15.6 11 14" fill="none" stroke="#d6d7e6" stroke-width="0.7"/></svg>
<div class="t" style="left:538.48px;top:280.57px;font-size:8.17px;color:#a8a9c1;font-weight:400;letter-spacing:1.39px;transform:scaleX(0.835);transform-origin:0 0;-webkit-text-stroke:0.3px #a8a9c1;">RATE</div>
<div style="left:572px;top:275.6px;width:40.2px;height:17.9px;background:#50516c;border-radius:9px;"></div>
<div class="t" style="left:583.1px;top:280.51px;font-size:8.87px;color:#ebebf3;font-weight:700;letter-spacing:0.53px;transform:scaleX(1.068);transform-origin:0 0;">1/16</div>
<div class="t" style="left:652.76px;top:283.33px;font-size:5.92px;color:#a8a9c1;font-weight:400;letter-spacing:1.01px;transform:scaleX(0.803);transform-origin:0 0;-webkit-text-stroke:0.3px #a8a9c1;">SWING</div>
<div style="left:684.9px;top:275.4px;width:40.7px;height:18.4px;background:#50516c;border-radius:9.2px;"></div>
<div class="t" style="left:699.14px;top:281.7px;font-size:7.61px;color:#ebebf3;font-weight:700;letter-spacing:0.46px;transform:scaleX(0.954);transform-origin:0 0;">0%</div>
<div class="t" style="left:766.52px;top:283.33px;font-size:5.92px;color:#a8a9c1;font-weight:400;letter-spacing:1.01px;transform:scaleX(0.783);transform-origin:0 0;-webkit-text-stroke:0.3px #a8a9c1;">DELAY</div>
<div style="left:798px;top:275.4px;width:40.4px;height:18.4px;background:#50516c;border-radius:9.2px;"></div>
<div class="t" style="left:812px;top:281.7px;font-size:7.61px;color:#ebebf3;font-weight:700;letter-spacing:0.46px;transform:scaleX(0.954);transform-origin:0 0;">0%</div>
<div style="left:867.8px;top:280.8px;width:7.8px;height:7.8px;background:#2b2c3c;border-radius:50%;"></div>
<div class="t" style="left:889.62px;top:283.19px;font-size:5.92px;color:#cacadb;font-weight:400;letter-spacing:1.01px;transform:scaleX(0.794);transform-origin:0 0;-webkit-text-stroke:0.3px #cacadb;">ALL STEPS</div>
<div style="left:935px;top:275.6px;width:33.1px;height:18.1px;background:#50516c;border-radius:9px;"></div>
<div class="t" style="left:943.1px;top:281.18px;font-size:7.75px;color:#ebebf3;font-weight:700;letter-spacing:1.32px;transform:scaleX(0.923);transform-origin:0 0;">R50</div>
<div class="t" style="left:999.48px;top:283.19px;font-size:5.92px;color:#8d8ea8;font-weight:400;letter-spacing:1.01px;transform:scaleX(0.983);transform-origin:0 0;-webkit-text-stroke:0.3px #8d8ea8;">FLAM</div>
<svg style="position:absolute;left:1052px;top:278px;overflow:visible;" width="13" height="13" viewBox="0 0 13 13"><rect x="4.2" y="2.2" width="6.6" height="7.6" rx="1.2" fill="none" stroke="#b0b1c6" stroke-width="1"/><path d="M2.2 4.4 L2.2 10.2 C2.2 11 2.6 11.4 3.4 11.4 L8.6 11.4" fill="none" stroke="#b0b1c6" stroke-width="1"/></svg>
<div style="left:33px;top:317.1px;width:45px;height:46.4px;background:#3d3e55;border-radius:0px;"></div>
<div style="left:33px;top:317.1px;width:1.6px;height:46.4px;background:#d9528a;border-radius:0px;"></div>
<svg style="position:absolute;left:66.6px;top:351.7px;overflow:visible;" width="7.8" height="8.6" viewBox="0 0 7.8 8.6"><path d="M7.8 0 L7.8 8.6 L0 8.6 Z" fill="#5a5b78"/></svg>
<div style="left:79px;top:317.1px;width:23.5px;height:23.3px;background:#3a3b51;border-radius:0px;"></div>
<div style="left:79px;top:341.7px;width:23.5px;height:21.8px;background:#3a3b51;border-radius:0px;"></div>
<div class="t" style="left:87.86px;top:324.53px;font-size:9.15px;color:#adaec6;font-weight:400;letter-spacing:1.56px;transform:scaleX(0.871);transform-origin:0 0;-webkit-text-stroke:0.3px #adaec6;">S</div>
<div class="t" style="left:86.44px;top:347.55px;font-size:8.45px;color:#adaec6;font-weight:400;letter-spacing:1.44px;transform:scaleX(1.049);transform-origin:0 0;-webkit-text-stroke:0.3px #adaec6;">M</div>
<div style="left:1015.9px;top:317.1px;width:31.2px;height:23.3px;background:#3e3f57;border-radius:0px;"></div>
<div style="left:1048.5px;top:317.1px;width:30.3px;height:23.3px;background:#3e3f57;border-radius:0px;"></div>
<div style="left:1015.9px;top:341.7px;width:31.2px;height:21.8px;background:#35364c;border-radius:0px;"></div>
<div style="left:1048.5px;top:341.7px;width:30.3px;height:21.8px;background:#35364c;border-radius:0px;"></div>
<div style="left:1080px;top:317.1px;width:2px;height:46.4px;background:#3a3b51;border-radius:0px;"></div>
<svg style="position:absolute;left:1024.5px;top:323.9px;overflow:visible;" width="15" height="11" viewBox="0 0 15 11"><path d="M4.4 0.6 L13.6 0.6 C14.2 0.6 14.6 1 14.6 1.6 L14.6 8.8 C14.6 9.4 14.2 9.8 13.6 9.8 L4.4 9.8 L0.4 5.2 Z" fill="#a3a4bc"/><path d="M6.6 3.5 L9.6 6.7 M9.6 3.5 L6.6 6.7" stroke="#35364c" stroke-width="1.1"/></svg>
<svg style="position:absolute;left:1056px;top:322.4px;overflow:visible;" width="14" height="15" viewBox="0 0 14 15"><circle cx="6.9" cy="8.4" r="4.2" fill="#a3a4bc"/><path d="M4.4 4.6 L4.4 3.8 A2.5 2.5 0 0 1 9.4 3.8 L9.4 4.6" fill="none" stroke="#a3a4bc" stroke-width="0.8"/></svg>
<svg style="position:absolute;left:1024px;top:345.6px;overflow:visible;" width="16" height="15" viewBox="0 0 16 15"><path d="M5.6 2.6 L5.6 8.6 M3.4 6.6 L5.6 8.8 L7.8 6.6 M10.1 14.6 L10.1 8.2 M7.9 10.2 L10.1 8 L12.3 10.2" fill="none" stroke="#b6b7cb" stroke-width="1"/><rect x="5.1" y="10.8" width="1" height="2.6" fill="#b6b7cb"/><rect x="9.6" y="2.6" width="1" height="2.4" fill="#b6b7cb"/></svg>
<svg style="position:absolute;left:1058px;top:346.1px;overflow:visible;" width="12" height="14" viewBox="0 0 12 14"><circle cx="3.3" cy="2.9" r="1.2" fill="#b2b3c8"/><circle cx="3.3" cy="6.9" r="1.2" fill="#b2b3c8"/><circle cx="3.3" cy="10.8" r="1.2" fill="#b2b3c8"/><circle cx="7.6" cy="2.9" r="1.2" fill="#b2b3c8"/><circle cx="7.6" cy="6.9" r="1.2" fill="#b2b3c8"/><circle cx="7.6" cy="10.8" r="1.2" fill="#b2b3c8"/></svg>
<div style="left:33px;top:364.6px;width:45px;height:46.4px;background:#3d3e55;border-radius:0px;"></div>
<div style="left:33px;top:364.6px;width:1.6px;height:46.4px;background:#f39a5c;border-radius:0px;"></div>
<svg style="position:absolute;left:66.6px;top:399.2px;overflow:visible;" width="7.8" height="8.6" viewBox="0 0 7.8 8.6"><path d="M7.8 0 L7.8 8.6 L0 8.6 Z" fill="#5a5b78"/></svg>
<div style="left:79px;top:364.6px;width:23.5px;height:23.3px;background:#3a3b51;border-radius:0px;"></div>
<div style="left:79px;top:389.2px;width:23.5px;height:21.8px;background:#3a3b51;border-radius:0px;"></div>
<div class="t" style="left:87.86px;top:372.11px;font-size:9.15px;color:#adaec6;font-weight:400;letter-spacing:1.56px;transform:scaleX(0.871);transform-origin:0 0;-webkit-text-stroke:0.3px #adaec6;">S</div>
<div class="t" style="left:86.44px;top:395.13px;font-size:8.45px;color:#adaec6;font-weight:400;letter-spacing:1.44px;transform:scaleX(1.049);transform-origin:0 0;-webkit-text-stroke:0.3px #adaec6;">M</div>
<div style="left:1015.9px;top:364.6px;width:31.2px;height:23.3px;background:#3e3f57;border-radius:0px;"></div>
<div style="left:1048.5px;top:364.6px;width:30.3px;height:23.3px;background:#3e3f57;border-radius:0px;"></div>
<div style="left:1015.9px;top:389.2px;width:31.2px;height:21.8px;background:#35364c;border-radius:0px;"></div>
<div style="left:1048.5px;top:389.2px;width:30.3px;height:21.8px;background:#35364c;border-radius:0px;"></div>
<div style="left:1080px;top:364.6px;width:2px;height:46.4px;background:#3a3b51;border-radius:0px;"></div>
<svg style="position:absolute;left:1024.5px;top:371.4px;overflow:visible;" width="15" height="11" viewBox="0 0 15 11"><path d="M4.4 0.6 L13.6 0.6 C14.2 0.6 14.6 1 14.6 1.6 L14.6 8.8 C14.6 9.4 14.2 9.8 13.6 9.8 L4.4 9.8 L0.4 5.2 Z" fill="#a3a4bc"/><path d="M6.6 3.5 L9.6 6.7 M9.6 3.5 L6.6 6.7" stroke="#35364c" stroke-width="1.1"/></svg>
<svg style="position:absolute;left:1056px;top:369.9px;overflow:visible;" width="14" height="15" viewBox="0 0 14 15"><circle cx="6.9" cy="8.4" r="4.2" fill="#a3a4bc"/><path d="M4.4 4.6 L4.4 3.8 A2.5 2.5 0 0 1 9.4 3.8 L9.4 4.6" fill="none" stroke="#a3a4bc" stroke-width="0.8"/></svg>
<svg style="position:absolute;left:1024px;top:393.1px;overflow:visible;" width="16" height="15" viewBox="0 0 16 15"><path d="M5.6 2.6 L5.6 8.6 M3.4 6.6 L5.6 8.8 L7.8 6.6 M10.1 14.6 L10.1 8.2 M7.9 10.2 L10.1 8 L12.3 10.2" fill="none" stroke="#b6b7cb" stroke-width="1"/><rect x="5.1" y="10.8" width="1" height="2.6" fill="#b6b7cb"/><rect x="9.6" y="2.6" width="1" height="2.4" fill="#b6b7cb"/></svg>
<svg style="position:absolute;left:1058px;top:393.6px;overflow:visible;" width="12" height="14" viewBox="0 0 12 14"><circle cx="3.3" cy="2.9" r="1.2" fill="#b2b3c8"/><circle cx="3.3" cy="6.9" r="1.2" fill="#b2b3c8"/><circle cx="3.3" cy="10.8" r="1.2" fill="#b2b3c8"/><circle cx="7.6" cy="2.9" r="1.2" fill="#b2b3c8"/><circle cx="7.6" cy="6.9" r="1.2" fill="#b2b3c8"/><circle cx="7.6" cy="10.8" r="1.2" fill="#b2b3c8"/></svg>
<div style="left:33px;top:411.7px;width:45px;height:46.4px;background:#63635a;border-radius:0px;"></div>
<div style="left:33px;top:411.7px;width:1.6px;height:46.4px;background:#e6e678;border-radius:0px;"></div>
<svg style="position:absolute;left:66.6px;top:446.3px;overflow:visible;" width="7.8" height="8.6" viewBox="0 0 7.8 8.6"><path d="M7.8 0 L7.8 8.6 L0 8.6 Z" fill="#ecec72"/></svg>
<div style="left:79px;top:411.7px;width:23.5px;height:23.3px;background:#3a3b51;border-radius:0px;"></div>
<div style="left:79px;top:436.3px;width:23.5px;height:21.8px;background:#3a3b51;border-radius:0px;"></div>
<div class="t" style="left:87.86px;top:418.97px;font-size:9.15px;color:#adaec6;font-weight:400;letter-spacing:1.56px;transform:scaleX(0.871);transform-origin:0 0;-webkit-text-stroke:0.3px #adaec6;">S</div>
<div class="t" style="left:86.44px;top:442.79px;font-size:8.45px;color:#adaec6;font-weight:400;letter-spacing:1.44px;transform:scaleX(1.049);transform-origin:0 0;-webkit-text-stroke:0.3px #adaec6;">M</div>
<div style="left:1015.9px;top:411.7px;width:31.2px;height:23.3px;background:#3e3f57;border-radius:0px;"></div>
<div style="left:1048.5px;top:411.7px;width:30.3px;height:23.3px;background:#3e3f57;border-radius:0px;"></div>
<div style="left:1015.9px;top:436.3px;width:31.2px;height:21.8px;background:#35364c;border-radius:0px;"></div>
<div style="left:1048.5px;top:436.3px;width:30.3px;height:21.8px;background:#35364c;border-radius:0px;"></div>
<div style="left:1080px;top:411.7px;width:2px;height:46.4px;background:#3a3b51;border-radius:0px;"></div>
<svg style="position:absolute;left:1024.5px;top:418.5px;overflow:visible;" width="15" height="11" viewBox="0 0 15 11"><path d="M4.4 0.6 L13.6 0.6 C14.2 0.6 14.6 1 14.6 1.6 L14.6 8.8 C14.6 9.4 14.2 9.8 13.6 9.8 L4.4 9.8 L0.4 5.2 Z" fill="#a3a4bc"/><path d="M6.6 3.5 L9.6 6.7 M9.6 3.5 L6.6 6.7" stroke="#35364c" stroke-width="1.1"/></svg>
<svg style="position:absolute;left:1056px;top:417px;overflow:visible;" width="14" height="15" viewBox="0 0 14 15"><circle cx="6.9" cy="8.4" r="4.2" fill="#a3a4bc"/><path d="M4.4 4.6 L4.4 3.8 A2.5 2.5 0 0 1 9.4 3.8 L9.4 4.6" fill="none" stroke="#a3a4bc" stroke-width="0.8"/></svg>
<svg style="position:absolute;left:1024px;top:440.2px;overflow:visible;" width="16" height="15" viewBox="0 0 16 15"><path d="M5.6 2.6 L5.6 8.6 M3.4 6.6 L5.6 8.8 L7.8 6.6 M10.1 14.6 L10.1 8.2 M7.9 10.2 L10.1 8 L12.3 10.2" fill="none" stroke="#b6b7cb" stroke-width="1"/><rect x="5.1" y="10.8" width="1" height="2.6" fill="#b6b7cb"/><rect x="9.6" y="2.6" width="1" height="2.4" fill="#b6b7cb"/></svg>
<svg style="position:absolute;left:1058px;top:440.7px;overflow:visible;" width="12" height="14" viewBox="0 0 12 14"><circle cx="3.3" cy="2.9" r="1.2" fill="#b2b3c8"/><circle cx="3.3" cy="6.9" r="1.2" fill="#b2b3c8"/><circle cx="3.3" cy="10.8" r="1.2" fill="#b2b3c8"/><circle cx="7.6" cy="2.9" r="1.2" fill="#b2b3c8"/><circle cx="7.6" cy="6.9" r="1.2" fill="#b2b3c8"/><circle cx="7.6" cy="10.8" r="1.2" fill="#b2b3c8"/></svg>
<div style="left:33px;top:459.6px;width:45px;height:46.4px;background:#3d3e55;border-radius:0px;"></div>
<div style="left:33px;top:459.6px;width:1.6px;height:46.4px;background:#52e0a0;border-radius:0px;"></div>
<svg style="position:absolute;left:66.6px;top:494.2px;overflow:visible;" width="7.8" height="8.6" viewBox="0 0 7.8 8.6"><path d="M7.8 0 L7.8 8.6 L0 8.6 Z" fill="#5a5b78"/></svg>
<div style="left:79px;top:459.6px;width:23.5px;height:23.3px;background:#3a3b51;border-radius:0px;"></div>
<div style="left:79px;top:484.2px;width:23.5px;height:21.8px;background:#3a3b51;border-radius:0px;"></div>
<div class="t" style="left:87.86px;top:467.11px;font-size:9.15px;color:#adaec6;font-weight:400;letter-spacing:1.56px;transform:scaleX(0.871);transform-origin:0 0;-webkit-text-stroke:0.3px #adaec6;">S</div>
<div class="t" style="left:86.44px;top:490.13px;font-size:8.45px;color:#adaec6;font-weight:400;letter-spacing:1.44px;transform:scaleX(1.049);transform-origin:0 0;-webkit-text-stroke:0.3px #adaec6;">M</div>
<div style="left:1015.9px;top:459.6px;width:31.2px;height:23.3px;background:#3e3f57;border-radius:0px;"></div>
<div style="left:1048.5px;top:459.6px;width:30.3px;height:23.3px;background:#3e3f57;border-radius:0px;"></div>
<div style="left:1015.9px;top:484.2px;width:31.2px;height:21.8px;background:#35364c;border-radius:0px;"></div>
<div style="left:1048.5px;top:484.2px;width:30.3px;height:21.8px;background:#35364c;border-radius:0px;"></div>
<div style="left:1080px;top:459.6px;width:2px;height:46.4px;background:#3a3b51;border-radius:0px;"></div>
<svg style="position:absolute;left:1024.5px;top:466.4px;overflow:visible;" width="15" height="11" viewBox="0 0 15 11"><path d="M4.4 0.6 L13.6 0.6 C14.2 0.6 14.6 1 14.6 1.6 L14.6 8.8 C14.6 9.4 14.2 9.8 13.6 9.8 L4.4 9.8 L0.4 5.2 Z" fill="#a3a4bc"/><path d="M6.6 3.5 L9.6 6.7 M9.6 3.5 L6.6 6.7" stroke="#35364c" stroke-width="1.1"/></svg>
<svg style="position:absolute;left:1056px;top:464.9px;overflow:visible;" width="14" height="15" viewBox="0 0 14 15"><circle cx="6.9" cy="8.4" r="4.2" fill="#a3a4bc"/><path d="M4.4 4.6 L4.4 3.8 A2.5 2.5 0 0 1 9.4 3.8 L9.4 4.6" fill="none" stroke="#a3a4bc" stroke-width="0.8"/></svg>
<svg style="position:absolute;left:1024px;top:488.1px;overflow:visible;" width="16" height="15" viewBox="0 0 16 15"><path d="M5.6 2.6 L5.6 8.6 M3.4 6.6 L5.6 8.8 L7.8 6.6 M10.1 14.6 L10.1 8.2 M7.9 10.2 L10.1 8 L12.3 10.2" fill="none" stroke="#b6b7cb" stroke-width="1"/><rect x="5.1" y="10.8" width="1" height="2.6" fill="#b6b7cb"/><rect x="9.6" y="2.6" width="1" height="2.4" fill="#b6b7cb"/></svg>
<svg style="position:absolute;left:1058px;top:488.6px;overflow:visible;" width="12" height="14" viewBox="0 0 12 14"><circle cx="3.3" cy="2.9" r="1.2" fill="#b2b3c8"/><circle cx="3.3" cy="6.9" r="1.2" fill="#b2b3c8"/><circle cx="3.3" cy="10.8" r="1.2" fill="#b2b3c8"/><circle cx="7.6" cy="2.9" r="1.2" fill="#b2b3c8"/><circle cx="7.6" cy="6.9" r="1.2" fill="#b2b3c8"/><circle cx="7.6" cy="10.8" r="1.2" fill="#b2b3c8"/></svg>
<div style="left:33px;top:506.9px;width:45px;height:46.4px;background:#3d3e55;border-radius:0px;"></div>
<div style="left:33px;top:506.9px;width:1.6px;height:46.4px;background:#4fe0dc;border-radius:0px;"></div>
<svg style="position:absolute;left:66.6px;top:541.5px;overflow:visible;" width="7.8" height="8.6" viewBox="0 0 7.8 8.6"><path d="M7.8 0 L7.8 8.6 L0 8.6 Z" fill="#5a5b78"/></svg>
<div style="left:79px;top:506.9px;width:23.5px;height:23.3px;background:#3a3b51;border-radius:0px;"></div>
<div style="left:79px;top:531.5px;width:23.5px;height:21.8px;background:#3a3b51;border-radius:0px;"></div>
<div class="t" style="left:87.86px;top:514.25px;font-size:9.15px;color:#adaec6;font-weight:400;letter-spacing:1.56px;transform:scaleX(0.871);transform-origin:0 0;-webkit-text-stroke:0.3px #adaec6;">S</div>
<div class="t" style="left:86.44px;top:537.27px;font-size:8.45px;color:#adaec6;font-weight:400;letter-spacing:1.44px;transform:scaleX(1.049);transform-origin:0 0;-webkit-text-stroke:0.3px #adaec6;">M</div>
<div style="left:1015.9px;top:506.9px;width:31.2px;height:23.3px;background:#3e3f57;border-radius:0px;"></div>
<div style="left:1048.5px;top:506.9px;width:30.3px;height:23.3px;background:#3e3f57;border-radius:0px;"></div>
<div style="left:1015.9px;top:531.5px;width:31.2px;height:21.8px;background:#35364c;border-radius:0px;"></div>
<div style="left:1048.5px;top:531.5px;width:30.3px;height:21.8px;background:#35364c;border-radius:0px;"></div>
<div style="left:1080px;top:506.9px;width:2px;height:46.4px;background:#3a3b51;border-radius:0px;"></div>
<svg style="position:absolute;left:1024.5px;top:513.7px;overflow:visible;" width="15" height="11" viewBox="0 0 15 11"><path d="M4.4 0.6 L13.6 0.6 C14.2 0.6 14.6 1 14.6 1.6 L14.6 8.8 C14.6 9.4 14.2 9.8 13.6 9.8 L4.4 9.8 L0.4 5.2 Z" fill="#a3a4bc"/><path d="M6.6 3.5 L9.6 6.7 M9.6 3.5 L6.6 6.7" stroke="#35364c" stroke-width="1.1"/></svg>
<svg style="position:absolute;left:1056px;top:512.2px;overflow:visible;" width="14" height="15" viewBox="0 0 14 15"><circle cx="6.9" cy="8.4" r="4.2" fill="#a3a4bc"/><path d="M4.4 4.6 L4.4 3.8 A2.5 2.5 0 0 1 9.4 3.8 L9.4 4.6" fill="none" stroke="#a3a4bc" stroke-width="0.8"/></svg>
<svg style="position:absolute;left:1024px;top:535.4px;overflow:visible;" width="16" height="15" viewBox="0 0 16 15"><path d="M5.6 2.6 L5.6 8.6 M3.4 6.6 L5.6 8.8 L7.8 6.6 M10.1 14.6 L10.1 8.2 M7.9 10.2 L10.1 8 L12.3 10.2" fill="none" stroke="#b6b7cb" stroke-width="1"/><rect x="5.1" y="10.8" width="1" height="2.6" fill="#b6b7cb"/><rect x="9.6" y="2.6" width="1" height="2.4" fill="#b6b7cb"/></svg>
<svg style="position:absolute;left:1058px;top:535.9px;overflow:visible;" width="12" height="14" viewBox="0 0 12 14"><circle cx="3.3" cy="2.9" r="1.2" fill="#b2b3c8"/><circle cx="3.3" cy="6.9" r="1.2" fill="#b2b3c8"/><circle cx="3.3" cy="10.8" r="1.2" fill="#b2b3c8"/><circle cx="7.6" cy="2.9" r="1.2" fill="#b2b3c8"/><circle cx="7.6" cy="6.9" r="1.2" fill="#b2b3c8"/><circle cx="7.6" cy="10.8" r="1.2" fill="#b2b3c8"/></svg>
<div style="left:33px;top:554.1px;width:45px;height:46.4px;background:#3d3e55;border-radius:0px;"></div>
<div style="left:33px;top:554.1px;width:1.6px;height:46.4px;background:#7cc2f4;border-radius:0px;"></div>
<svg style="position:absolute;left:66.6px;top:588.7px;overflow:visible;" width="7.8" height="8.6" viewBox="0 0 7.8 8.6"><path d="M7.8 0 L7.8 8.6 L0 8.6 Z" fill="#5a5b78"/></svg>
<div style="left:79px;top:554.1px;width:23.5px;height:23.3px;background:#3a3b51;border-radius:0px;"></div>
<div style="left:79px;top:578.7px;width:23.5px;height:21.8px;background:#3a3b51;border-radius:0px;"></div>
<div class="t" style="left:87.86px;top:561.69px;font-size:9.15px;color:#adaec6;font-weight:400;letter-spacing:1.56px;transform:scaleX(0.871);transform-origin:0 0;-webkit-text-stroke:0.3px #adaec6;">S</div>
<div class="t" style="left:86.44px;top:584.71px;font-size:8.45px;color:#adaec6;font-weight:400;letter-spacing:1.44px;transform:scaleX(1.049);transform-origin:0 0;-webkit-text-stroke:0.3px #adaec6;">M</div>
<div style="left:1015.9px;top:554.1px;width:31.2px;height:23.3px;background:#3e3f57;border-radius:0px;"></div>
<div style="left:1048.5px;top:554.1px;width:30.3px;height:23.3px;background:#3e3f57;border-radius:0px;"></div>
<div style="left:1015.9px;top:578.7px;width:31.2px;height:21.8px;background:#35364c;border-radius:0px;"></div>
<div style="left:1048.5px;top:578.7px;width:30.3px;height:21.8px;background:#35364c;border-radius:0px;"></div>
<div style="left:1080px;top:554.1px;width:2px;height:46.4px;background:#3a3b51;border-radius:0px;"></div>
<svg style="position:absolute;left:1024.5px;top:560.9px;overflow:visible;" width="15" height="11" viewBox="0 0 15 11"><path d="M4.4 0.6 L13.6 0.6 C14.2 0.6 14.6 1 14.6 1.6 L14.6 8.8 C14.6 9.4 14.2 9.8 13.6 9.8 L4.4 9.8 L0.4 5.2 Z" fill="#a3a4bc"/><path d="M6.6 3.5 L9.6 6.7 M9.6 3.5 L6.6 6.7" stroke="#35364c" stroke-width="1.1"/></svg>
<svg style="position:absolute;left:1056px;top:559.4px;overflow:visible;" width="14" height="15" viewBox="0 0 14 15"><circle cx="6.9" cy="8.4" r="4.2" fill="#a3a4bc"/><path d="M4.4 4.6 L4.4 3.8 A2.5 2.5 0 0 1 9.4 3.8 L9.4 4.6" fill="none" stroke="#a3a4bc" stroke-width="0.8"/></svg>
<svg style="position:absolute;left:1024px;top:582.6px;overflow:visible;" width="16" height="15" viewBox="0 0 16 15"><path d="M5.6 2.6 L5.6 8.6 M3.4 6.6 L5.6 8.8 L7.8 6.6 M10.1 14.6 L10.1 8.2 M7.9 10.2 L10.1 8 L12.3 10.2" fill="none" stroke="#b6b7cb" stroke-width="1"/><rect x="5.1" y="10.8" width="1" height="2.6" fill="#b6b7cb"/><rect x="9.6" y="2.6" width="1" height="2.4" fill="#b6b7cb"/></svg>
<svg style="position:absolute;left:1058px;top:583.1px;overflow:visible;" width="12" height="14" viewBox="0 0 12 14"><circle cx="3.3" cy="2.9" r="1.2" fill="#b2b3c8"/><circle cx="3.3" cy="6.9" r="1.2" fill="#b2b3c8"/><circle cx="3.3" cy="10.8" r="1.2" fill="#b2b3c8"/><circle cx="7.6" cy="2.9" r="1.2" fill="#b2b3c8"/><circle cx="7.6" cy="6.9" r="1.2" fill="#b2b3c8"/><circle cx="7.6" cy="10.8" r="1.2" fill="#b2b3c8"/></svg>
<div style="left:33px;top:601.5px;width:45px;height:46.4px;background:#3d3e55;border-radius:0px;"></div>
<div style="left:33px;top:601.5px;width:1.6px;height:46.4px;background:#a08cf4;border-radius:0px;"></div>
<svg style="position:absolute;left:66.6px;top:636.1px;overflow:visible;" width="7.8" height="8.6" viewBox="0 0 7.8 8.6"><path d="M7.8 0 L7.8 8.6 L0 8.6 Z" fill="#5a5b78"/></svg>
<div style="left:79px;top:601.5px;width:23.5px;height:23.3px;background:#3a3b51;border-radius:0px;"></div>
<div style="left:79px;top:626.1px;width:23.5px;height:21.8px;background:#3a3b51;border-radius:0px;"></div>
<div class="t" style="left:87.86px;top:609.09px;font-size:9.15px;color:#adaec6;font-weight:400;letter-spacing:1.56px;transform:scaleX(0.871);transform-origin:0 0;-webkit-text-stroke:0.3px #adaec6;">S</div>
<div class="t" style="left:86.44px;top:632.11px;font-size:8.45px;color:#adaec6;font-weight:400;letter-spacing:1.44px;transform:scaleX(1.049);transform-origin:0 0;-webkit-text-stroke:0.3px #adaec6;">M</div>
<div style="left:1015.9px;top:601.5px;width:31.2px;height:23.3px;background:#3e3f57;border-radius:0px;"></div>
<div style="left:1048.5px;top:601.5px;width:30.3px;height:23.3px;background:#3e3f57;border-radius:0px;"></div>
<div style="left:1015.9px;top:626.1px;width:31.2px;height:21.8px;background:#35364c;border-radius:0px;"></div>
<div style="left:1048.5px;top:626.1px;width:30.3px;height:21.8px;background:#35364c;border-radius:0px;"></div>
<div style="left:1080px;top:601.5px;width:2px;height:46.4px;background:#3a3b51;border-radius:0px;"></div>
<svg style="position:absolute;left:1024.5px;top:608.3px;overflow:visible;" width="15" height="11" viewBox="0 0 15 11"><path d="M4.4 0.6 L13.6 0.6 C14.2 0.6 14.6 1 14.6 1.6 L14.6 8.8 C14.6 9.4 14.2 9.8 13.6 9.8 L4.4 9.8 L0.4 5.2 Z" fill="#a3a4bc"/><path d="M6.6 3.5 L9.6 6.7 M9.6 3.5 L6.6 6.7" stroke="#35364c" stroke-width="1.1"/></svg>
<svg style="position:absolute;left:1056px;top:606.8px;overflow:visible;" width="14" height="15" viewBox="0 0 14 15"><circle cx="6.9" cy="8.4" r="4.2" fill="#a3a4bc"/><path d="M4.4 4.6 L4.4 3.8 A2.5 2.5 0 0 1 9.4 3.8 L9.4 4.6" fill="none" stroke="#a3a4bc" stroke-width="0.8"/></svg>
<svg style="position:absolute;left:1024px;top:630px;overflow:visible;" width="16" height="15" viewBox="0 0 16 15"><path d="M5.6 2.6 L5.6 8.6 M3.4 6.6 L5.6 8.8 L7.8 6.6 M10.1 14.6 L10.1 8.2 M7.9 10.2 L10.1 8 L12.3 10.2" fill="none" stroke="#b6b7cb" stroke-width="1"/><rect x="5.1" y="10.8" width="1" height="2.6" fill="#b6b7cb"/><rect x="9.6" y="2.6" width="1" height="2.4" fill="#b6b7cb"/></svg>
<svg style="position:absolute;left:1058px;top:630.5px;overflow:visible;" width="12" height="14" viewBox="0 0 12 14"><circle cx="3.3" cy="2.9" r="1.2" fill="#b2b3c8"/><circle cx="3.3" cy="6.9" r="1.2" fill="#b2b3c8"/><circle cx="3.3" cy="10.8" r="1.2" fill="#b2b3c8"/><circle cx="7.6" cy="2.9" r="1.2" fill="#b2b3c8"/><circle cx="7.6" cy="6.9" r="1.2" fill="#b2b3c8"/><circle cx="7.6" cy="10.8" r="1.2" fill="#b2b3c8"/></svg>
<div style="left:33px;top:648.5px;width:45px;height:46.4px;background:#3d3e55;border-radius:0px;"></div>
<div style="left:33px;top:648.5px;width:1.6px;height:46.4px;background:#e064e8;border-radius:0px;"></div>
<svg style="position:absolute;left:66.6px;top:683.1px;overflow:visible;" width="7.8" height="8.6" viewBox="0 0 7.8 8.6"><path d="M7.8 0 L7.8 8.6 L0 8.6 Z" fill="#5a5b78"/></svg>
<div style="left:79px;top:648.5px;width:23.5px;height:23.3px;background:#3a3b51;border-radius:0px;"></div>
<div style="left:79px;top:673.1px;width:23.5px;height:21.8px;background:#3a3b51;border-radius:0px;"></div>
<div class="t" style="left:87.86px;top:655.69px;font-size:9.15px;color:#adaec6;font-weight:400;letter-spacing:1.56px;transform:scaleX(0.871);transform-origin:0 0;-webkit-text-stroke:0.3px #adaec6;">S</div>
<div class="t" style="left:86.44px;top:679.51px;font-size:8.45px;color:#adaec6;font-weight:400;letter-spacing:1.44px;transform:scaleX(1.049);transform-origin:0 0;-webkit-text-stroke:0.3px #adaec6;">M</div>
<div style="left:1015.9px;top:648.5px;width:31.2px;height:23.3px;background:#3e3f57;border-radius:0px;"></div>
<div style="left:1048.5px;top:648.5px;width:30.3px;height:23.3px;background:#3e3f57;border-radius:0px;"></div>
<div style="left:1015.9px;top:673.1px;width:31.2px;height:21.8px;background:#35364c;border-radius:0px;"></div>
<div style="left:1048.5px;top:673.1px;width:30.3px;height:21.8px;background:#35364c;border-radius:0px;"></div>
<div style="left:1080px;top:648.5px;width:2px;height:46.4px;background:#3a3b51;border-radius:0px;"></div>
<svg style="position:absolute;left:1024.5px;top:655.3px;overflow:visible;" width="15" height="11" viewBox="0 0 15 11"><path d="M4.4 0.6 L13.6 0.6 C14.2 0.6 14.6 1 14.6 1.6 L14.6 8.8 C14.6 9.4 14.2 9.8 13.6 9.8 L4.4 9.8 L0.4 5.2 Z" fill="#a3a4bc"/><path d="M6.6 3.5 L9.6 6.7 M9.6 3.5 L6.6 6.7" stroke="#35364c" stroke-width="1.1"/></svg>
<svg style="position:absolute;left:1056px;top:653.8px;overflow:visible;" width="14" height="15" viewBox="0 0 14 15"><circle cx="6.9" cy="8.4" r="4.2" fill="#a3a4bc"/><path d="M4.4 4.6 L4.4 3.8 A2.5 2.5 0 0 1 9.4 3.8 L9.4 4.6" fill="none" stroke="#a3a4bc" stroke-width="0.8"/></svg>
<svg style="position:absolute;left:1024px;top:677px;overflow:visible;" width="16" height="15" viewBox="0 0 16 15"><path d="M5.6 2.6 L5.6 8.6 M3.4 6.6 L5.6 8.8 L7.8 6.6 M10.1 14.6 L10.1 8.2 M7.9 10.2 L10.1 8 L12.3 10.2" fill="none" stroke="#b6b7cb" stroke-width="1"/><rect x="5.1" y="10.8" width="1" height="2.6" fill="#b6b7cb"/><rect x="9.6" y="2.6" width="1" height="2.4" fill="#b6b7cb"/></svg>
<svg style="position:absolute;left:1058px;top:677.5px;overflow:visible;" width="12" height="14" viewBox="0 0 12 14"><circle cx="3.3" cy="2.9" r="1.2" fill="#b2b3c8"/><circle cx="3.3" cy="6.9" r="1.2" fill="#b2b3c8"/><circle cx="3.3" cy="10.8" r="1.2" fill="#b2b3c8"/><circle cx="7.6" cy="2.9" r="1.2" fill="#b2b3c8"/><circle cx="7.6" cy="6.9" r="1.2" fill="#b2b3c8"/><circle cx="7.6" cy="10.8" r="1.2" fill="#b2b3c8"/></svg>
<svg style="position:absolute;left:43.7px;top:327.5px;overflow:visible;" width="24" height="24" viewBox="0 0 24 24"><circle cx="12" cy="12" r="8.7" fill="none" stroke="#d9528a" stroke-width="2.4"/><circle cx="20.60" cy="12.00" r="0.7" fill="#3d3e55"/><circle cx="20.18" cy="14.66" r="0.7" fill="#3d3e55"/><circle cx="18.96" cy="17.05" r="0.7" fill="#3d3e55"/><circle cx="17.05" cy="18.96" r="0.7" fill="#3d3e55"/><circle cx="14.66" cy="20.18" r="0.7" fill="#3d3e55"/><circle cx="12.00" cy="20.60" r="0.7" fill="#3d3e55"/><circle cx="9.34" cy="20.18" r="0.7" fill="#3d3e55"/><circle cx="6.95" cy="18.96" r="0.7" fill="#3d3e55"/><circle cx="5.04" cy="17.05" r="0.7" fill="#3d3e55"/><circle cx="3.82" cy="14.66" r="0.7" fill="#3d3e55"/><circle cx="3.40" cy="12.00" r="0.7" fill="#3d3e55"/><circle cx="3.82" cy="9.34" r="0.7" fill="#3d3e55"/><circle cx="5.04" cy="6.95" r="0.7" fill="#3d3e55"/><circle cx="6.95" cy="5.04" r="0.7" fill="#3d3e55"/><circle cx="9.34" cy="3.82" r="0.7" fill="#3d3e55"/><circle cx="12.00" cy="3.40" r="0.7" fill="#3d3e55"/><circle cx="14.66" cy="3.82" r="0.7" fill="#3d3e55"/><circle cx="17.05" cy="5.04" r="0.7" fill="#3d3e55"/><circle cx="18.96" cy="6.95" r="0.7" fill="#3d3e55"/><circle cx="20.18" cy="9.34" r="0.7" fill="#3d3e55"/><circle cx="12" cy="11.6" r="1.9" fill="none" stroke="#d9528a" stroke-width="1.1"/><path d="M12 13.6 L12 15.5" stroke="#d9528a" stroke-width="1"/><rect x="10.3" y="15.5" width="3.4" height="5.8" rx="1" fill="#d9528a"/><path d="M4.6 18.5 L2.4 21.6 M19.4 18.5 L21.6 21.6" stroke="#d9528a" stroke-width="1.2"/></svg>
<svg style="position:absolute;left:44.9px;top:377.1px;overflow:visible;" width="22" height="22" viewBox="0 0 22 22"><circle cx="10.5" cy="10.5" r="8.6" fill="none" stroke="#f39a5c" stroke-width="1.2"/><circle cx="18.42" cy="13.85" r="1" fill="#f39a5c"/><circle cx="13.73" cy="18.47" r="1" fill="#f39a5c"/><circle cx="7.15" cy="18.42" r="1" fill="#f39a5c"/><circle cx="2.53" cy="13.73" r="1" fill="#f39a5c"/><circle cx="2.58" cy="7.15" r="1" fill="#f39a5c"/><circle cx="7.27" cy="2.53" r="1" fill="#f39a5c"/><circle cx="13.85" cy="2.58" r="1" fill="#f39a5c"/><circle cx="18.47" cy="7.27" r="1" fill="#f39a5c"/><path d="M9.6 7.8 L18.6 17.4 M11.2 6.8 L20.2 16.4" stroke="#f39a5c" stroke-width="1"/></svg>
<svg style="position:absolute;left:44.7px;top:421.7px;overflow:visible;" width="22" height="24" viewBox="0 0 22 24"><ellipse cx="11" cy="10" rx="10.4" ry="2.1" fill="none" stroke="#e6e678" stroke-width="1.1"/><ellipse cx="11" cy="13" rx="10.4" ry="2.1" fill="none" stroke="#e6e678" stroke-width="1.1"/><path d="M11 3 L11 8.6 M11 15 L11 22" stroke="#e6e678" stroke-width="1.2"/></svg>
<svg style="position:absolute;left:44.7px;top:469.6px;overflow:visible;" width="22" height="24" viewBox="0 0 22 24"><ellipse cx="11" cy="10" rx="10.4" ry="2.1" fill="none" stroke="#52e0a0" stroke-width="1.1"/><ellipse cx="11" cy="13" rx="10.4" ry="2.1" fill="none" stroke="#52e0a0" stroke-width="1.1"/><path d="M11 3 L11 8.6 M11 15 L11 22" stroke="#52e0a0" stroke-width="1.2"/></svg>
<svg style="position:absolute;left:44.4px;top:518.9px;overflow:visible;" width="22" height="22" viewBox="0 0 22 22"><g transform="translate(11 11) scale(1.13) rotate(45) translate(-11 -11)"><path d="M3.6 6 L3.6 15 A7.4 3 0 0 0 18.4 15 L18.4 6" fill="none" stroke="#4fe0dc" stroke-width="1.3"/><ellipse cx="11" cy="6" rx="7.4" ry="3" fill="#4fe0dc"/><path d="M8 9.8 L8 16 M14 9.8 L14 16" stroke="#4fe0dc" stroke-width="1.1"/></g></svg>
<svg style="position:absolute;left:44.7px;top:567.3px;overflow:visible;" width="22" height="22" viewBox="0 0 22 22"><circle cx="11" cy="1.8" r="2.5" fill="#7cc2f4"/><circle cx="2.7" cy="6.5" r="2.3" fill="#7cc2f4"/><circle cx="19.3" cy="6.5" r="2.3" fill="#7cc2f4"/><circle cx="11" cy="11" r="7.7" fill="#3d3e55"/><circle cx="11" cy="11" r="8.3" fill="none" stroke="#7cc2f4" stroke-width="1.4"/><path d="M4.2 15.2 A8 8 0 0 0 17.8 15.2 A8.6 6 0 0 1 4.2 15.2 Z" fill="#7cc2f4"/></svg>
<svg style="position:absolute;left:44.4px;top:617.9px;overflow:visible;" width="22" height="13" viewBox="0 0 22 13"><path d="M0.8 6.2 L4.5 6.2 L6 4.6 L7.6 9.8 L9.6 2.8 L11.8 10 L13.8 4 L15.2 6.2 L21 6.2" fill="none" stroke="#a08cf4" stroke-width="1.4" stroke-linejoin="round"/></svg>
<svg style="position:absolute;left:44.7px;top:660.5px;overflow:visible;" width="22" height="22" viewBox="0 0 22 22"><line x1="13.60" y1="11.00" x2="21.80" y2="11.00" stroke="#e064e8" stroke-width="1.3"/><line x1="12.98" y1="12.98" x2="16.66" y2="16.66" stroke="#e064e8" stroke-width="1.3"/><line x1="11.00" y1="13.60" x2="11.00" y2="21.80" stroke="#e064e8" stroke-width="1.3"/><line x1="9.02" y1="12.98" x2="5.34" y2="16.66" stroke="#e064e8" stroke-width="1.3"/><line x1="8.40" y1="11.00" x2="0.20" y2="11.00" stroke="#e064e8" stroke-width="1.3"/><line x1="9.02" y1="9.02" x2="5.34" y2="5.34" stroke="#e064e8" stroke-width="1.3"/><line x1="11.00" y1="8.40" x2="11.00" y2="0.20" stroke="#e064e8" stroke-width="1.3"/><line x1="12.98" y1="9.02" x2="16.66" y2="5.34" stroke="#e064e8" stroke-width="1.3"/></svg>
<div style="left:103.4px;top:317px;width:912px;height:378.5px;background:#35364b;border-radius:0px;"></div>
<svg style="position:absolute;left:268px;top:344px;overflow:visible;" width="14" height="14" viewBox="0 0 14 14"><path d="M3.8 3.9 A4.9 4.9 0 1 0 9.6 3.9" fill="none" stroke="#d8d9e7" stroke-width="1.2"/><path d="M6.7 1.2 L6.7 6.2" stroke="#d8d9e7" stroke-width="1.2"/></svg>
<div class="t" style="left:306.86px;top:346.35px;font-size:8.87px;color:#c8c9da;font-weight:400;letter-spacing:1.51px;transform:scaleX(0.694);transform-origin:0 0;-webkit-text-stroke:0.3px #c8c9da;">FILTER</div>
<div style="left:339px;top:349.2px;width:142px;height:3.8px;background:#23232f;border-radius:2px;"></div>
<div style="left:339.2px;top:348.7px;width:20.1px;height:5px;background:#d6d7e6;border-radius:2.5px;"></div>
<div class="t" style="left:513.48px;top:346.35px;font-size:8.87px;color:#c8c9da;font-weight:400;letter-spacing:1.51px;transform:scaleX(0.675);transform-origin:0 0;-webkit-text-stroke:0.3px #c8c9da;">RES</div>
<div style="left:535px;top:348.8px;width:142px;height:4.4px;background:#23232f;border-radius:2.2px;"></div>
<svg style="position:absolute;left:713px;top:344px;overflow:visible;" width="20" height="12" viewBox="0 0 20 12"><path d="M2.2 11 L3.4 4.6 C3.7 3 4.4 2.4 6 2.4 L18.2 2.4" fill="none" stroke="#6d6e8a" stroke-width="1.1"/></svg>
<svg style="position:absolute;left:772px;top:344px;overflow:visible;" width="20" height="12" viewBox="0 0 20 12"><path d="M2.6 11 L3.6 5 C3.9 3.4 4.6 2.8 6.2 2.8 L13.8 2.8 C15.4 2.8 16.1 3.4 16.4 5 L17.6 11" fill="none" stroke="#6d6e8a" stroke-width="1.1"/></svg>
<svg style="position:absolute;left:832px;top:344px;overflow:visible;" width="20" height="12" viewBox="0 0 20 12"><path d="M1.6 2.4 L13.6 2.4 C15.2 2.4 15.9 3 16.2 4.6 L17.8 11" fill="none" stroke="#ff6b7e" stroke-width="1.2"/></svg>
<div style="left:259px;top:377.8px;width:73.6px;height:21.1px;background:#3e3f56;border-radius:3px;"></div>
<div class="t" style="left:270.38px;top:385.56px;font-size:7.46px;color:#b2b3ca;font-weight:400;letter-spacing:1.27px;transform:scaleX(0.828);transform-origin:0 0;-webkit-text-stroke:0.3px #b2b3ca;">PREVIEW</div>
<svg style="position:absolute;left:317px;top:383px;overflow:visible;" width="9" height="10" viewBox="0 0 9 10"><path d="M2 2.4 L7.4 5.3 L2 8.2 Z" fill="#d6d7e6"/></svg>
<div style="left:337.6px;top:377.8px;width:110.9px;height:21.1px;background:#3e3f56;border-radius:3px;"></div>
<div class="t" style="left:355px;top:382.26px;font-size:9.44px;color:#e0e1ed;font-weight:700;letter-spacing:1.6px;transform:scaleX(0.841);transform-origin:0 0;">TUN</div>
<svg style="position:absolute;left:392px;top:383px;overflow:visible;" width="8" height="10" viewBox="0 0 8 10"><path d="M5.4 2.2 L2.4 5.5 L5.4 8.8" fill="none" stroke="#8e8fa9" stroke-width="1.1"/></svg>
<div class="t" style="left:412.76px;top:384.04px;font-size:7.89px;color:#ff6b7e;font-weight:700;letter-spacing:0.47px;transform:scaleX(1.234);transform-origin:0 0;">0</div>
<svg style="position:absolute;left:430px;top:383px;overflow:visible;" width="8" height="10" viewBox="0 0 8 10"><path d="M2.4 2.2 L5.4 5.5 L2.4 8.8" fill="none" stroke="#8e8fa9" stroke-width="1.1"/></svg>
<div style="left:453.5px;top:377.8px;width:69.3px;height:21px;background:#3e3f56;border-radius:3px;"></div>
<div class="t" style="left:471px;top:385.42px;font-size:7.46px;color:#b2b3ca;font-weight:400;letter-spacing:1.27px;transform:scaleX(0.774);transform-origin:0 0;-webkit-text-stroke:0.3px #b2b3ca;">REVERSE</div>
<div style="left:527.7px;top:377.8px;width:84.5px;height:21px;background:#3e3f56;border-radius:3px;"></div>
<div class="t" style="left:548px;top:387.02px;font-size:7.18px;color:#aeafc6;font-weight:400;letter-spacing:1.22px;transform:scaleX(0.661);transform-origin:0 0;-webkit-text-stroke:0.3px #aeafc6;">FADE IN</div>
<div class="t" style="left:585.48px;top:387.02px;font-size:7.18px;color:#ff6b7e;font-weight:400;letter-spacing:0.43px;transform:scaleX(0.918);transform-origin:0 0;-webkit-text-stroke:0.3px #ff6b7e;">0%</div>
<div style="left:617.3px;top:377.8px;width:84.7px;height:21px;background:#3e3f56;border-radius:3px;"></div>
<div class="t" style="left:634.24px;top:387.02px;font-size:7.18px;color:#aeafc6;font-weight:400;letter-spacing:1.22px;transform:scaleX(0.664);transform-origin:0 0;-webkit-text-stroke:0.3px #aeafc6;">FADE OUT</div>
<div class="t" style="left:674.1px;top:387.02px;font-size:7.18px;color:#ff6b7e;font-weight:400;letter-spacing:0.43px;transform:scaleX(0.812);transform-origin:0 0;-webkit-text-stroke:0.3px #ff6b7e;">81%</div>
<div style="left:707.2px;top:377.8px;width:73.4px;height:21px;background:#3e3f56;border-radius:3px;"></div>
<div class="t" style="left:734.14px;top:385.28px;font-size:8.03px;color:#b2b3ca;font-weight:400;letter-spacing:1.36px;transform:scaleX(0.739);transform-origin:0 0;-webkit-text-stroke:0.3px #b2b3ca;">LOCK</div>
<div style="left:786.2px;top:377.8px;width:73.7px;height:21px;background:#3e3f56;border-radius:3px;"></div>
<div class="t" style="left:811px;top:385.28px;font-size:8.03px;color:#b2b3ca;font-weight:400;letter-spacing:1.36px;transform:scaleX(0.727);transform-origin:0 0;-webkit-text-stroke:0.3px #b2b3ca;">RESET</div>
<svg style="position:absolute;left:0;top:0" width="1114" height="850" viewBox="0 0 1114 850"><defs>
<clipPath id="c1"><path d="M0 0 L424 0 L424 466 L494 498 L494 700 L0 700 Z"/></clipPath>
<clipPath id="c2"><path d="M0 0 L612 0 L612 549 L701 589 L701 700 L0 700 Z"/></clipPath>
</defs>
<path d="M265.0 462.0 L266.0 462.0 L266.0 464.6 L267.0 464.6 L267.0 464.6 L268.0 464.6 L268.0 462.6 L269.0 462.6 L269.0 467.4 L270.0 467.4 L270.0 467.9 L271.0 467.9 L271.0 468.3 L272.0 468.3 L272.0 465.9 L273.0 465.9 L273.0 463.6 L274.0 463.6 L274.0 458.1 L275.0 458.1 L275.0 458.5 L276.0 458.5 L276.0 462.3 L277.0 462.3 L277.0 466.1 L278.0 466.1 L278.0 462.7 L279.0 462.7 L279.0 470.6 L280.0 470.6 L280.0 470.8 L281.0 470.8 L281.0 470.9 L282.0 470.9 L282.0 469.5 L283.0 469.5 L283.0 468.2 L284.0 468.2 L284.0 466.9 L285.0 466.9 L285.0 465.6 L286.0 465.6 L286.0 467.8 L287.0 467.8 L287.0 466.5 L288.0 466.5 L288.0 464.7 L289.0 464.7 L289.0 459.3 L290.0 459.3 L290.0 464.5 L291.0 464.5 L291.0 469.6 L292.0 469.6 L292.0 468.8 L293.0 468.8 L293.0 464.7 L294.0 464.7 L294.0 466.9 L295.0 466.9 L295.0 465.8 L296.0 465.8 L296.0 462.9 L297.0 462.9 L297.0 467.0 L298.0 467.0 L298.0 464.1 L299.0 464.1 L299.0 461.2 L300.0 461.2 L300.0 465.7 L301.0 465.7 L301.0 470.1 L302.0 470.1 L302.0 467.9 L303.0 467.9 L303.0 465.7 L304.0 465.7 L304.0 466.6 L305.0 466.6 L305.0 467.4 L306.0 467.4 L306.0 468.6 L307.0 468.6 L307.0 469.7 L308.0 469.7 L308.0 469.0 L309.0 469.0 L309.0 468.2 L310.0 468.2 L310.0 467.2 L311.0 467.2 L311.0 466.1 L312.0 466.1 L312.0 466.9 L313.0 466.9 L313.0 467.7 L314.0 467.7 L314.0 469.0 L315.0 469.0 L315.0 470.2 L316.0 470.2 L316.0 469.4 L317.0 469.4 L317.0 465.6 L318.0 465.6 L318.0 468.6 L319.0 468.6 L319.0 468.7 L320.0 468.7 L320.0 468.9 L321.0 468.9 L321.0 469.1 L322.0 469.1 L322.0 468.8 L323.0 468.8 L323.0 468.6 L324.0 468.6 L324.0 469.1 L325.0 469.1 L325.0 469.6 L326.0 469.6 L326.0 470.8 L327.0 470.8 L327.0 472.1 L328.0 472.1 L328.0 470.0 L329.0 470.0 L329.0 467.9 L330.0 467.9 L330.0 469.3 L331.0 469.3 L331.0 470.7 L332.0 470.7 L332.0 470.3 L333.0 470.3 L333.0 469.9 L334.0 469.9 L334.0 470.5 L335.0 470.5 L335.0 471.1 L336.0 471.1 L336.0 468.9 L337.0 468.9 L337.0 466.8 L338.0 466.8 L338.0 465.6 L339.0 465.6 L339.0 464.4 L340.0 464.4 L340.0 462.4 L341.0 462.4 L341.0 460.5 L342.0 460.5 L342.0 466.0 L343.0 466.0 L343.0 471.6 L344.0 471.6 L344.0 467.7 L345.0 467.7 L345.0 461.8 L346.0 461.8 L346.0 466.7 L347.0 466.7 L347.0 469.4 L348.0 469.4 L348.0 470.5 L349.0 470.5 L349.0 471.7 L350.0 471.7 L350.0 471.5 L351.0 471.5 L351.0 471.3 L352.0 471.3 L352.0 468.7 L353.0 468.7 L353.0 466.1 L354.0 466.1 L354.0 465.0 L355.0 465.0 L355.0 464.0 L356.0 464.0 L356.0 464.8 L357.0 464.8 L357.0 471.3 L358.0 471.3 L358.0 471.6 L359.0 471.6 L359.0 471.8 L360.0 471.8 L360.0 471.8 L361.0 471.8 L361.0 471.8 L362.0 471.8 L362.0 467.0 L363.0 467.0 L363.0 462.2 L364.0 462.2 L364.0 465.3 L365.0 465.3 L365.0 468.4 L366.0 468.4 L366.0 469.1 L367.0 469.1 L367.0 465.0 L368.0 465.0 L368.0 467.4 L369.0 467.4 L369.0 465.1 L370.0 465.1 L370.0 467.6 L371.0 467.6 L371.0 470.0 L372.0 470.0 L372.0 467.5 L373.0 467.5 L373.0 464.9 L374.0 464.9 L374.0 465.3 L375.0 465.3 L375.0 465.6 L376.0 465.6 L376.0 465.7 L377.0 465.7 L377.0 465.8 L378.0 465.8 L378.0 467.7 L379.0 467.7 L379.0 469.7 L380.0 469.7 L380.0 468.1 L381.0 468.1 L381.0 466.5 L382.0 466.5 L382.0 466.0 L383.0 466.0 L383.0 465.6 L384.0 465.6 L384.0 467.4 L385.0 467.4 L385.0 469.2 L386.0 469.2 L386.0 469.0 L387.0 469.0 L387.0 468.9 L388.0 468.9 L388.0 466.6 L389.0 466.6 L389.0 464.2 L390.0 464.2 L390.0 459.7 L391.0 459.7 L391.0 464.9 L392.0 464.9 L392.0 465.9 L393.0 465.9 L393.0 467.0 L394.0 467.0 L394.0 467.7 L395.0 467.7 L395.0 468.5 L396.0 468.5 L396.0 468.3 L397.0 468.3 L397.0 465.6 L398.0 465.6 L398.0 465.8 L399.0 465.8 L399.0 463.4 L400.0 463.4 L400.0 466.6 L401.0 466.6 L401.0 465.0 L402.0 465.0 L402.0 469.9 L403.0 469.9 L403.0 470.1 L404.0 470.1 L404.0 467.5 L405.0 467.5 L405.0 465.0 L406.0 465.0 L406.0 466.4 L407.0 466.4 L407.0 462.1 L408.0 462.1 L408.0 467.7 L409.0 467.7 L409.0 467.6 L410.0 467.6 L410.0 464.2 L411.0 464.2 L411.0 460.9 L412.0 460.9 L412.0 465.2 L413.0 465.2 L413.0 469.6 L414.0 469.6 L414.0 466.4 L415.0 466.4 L415.0 463.2 L416.0 463.2 L416.0 462.3 L417.0 462.3 L417.0 456.2 L418.0 456.2 L418.0 465.4 L419.0 465.4 L419.0 469.5 L420.0 469.5 L420.0 469.0 L421.0 469.0 L421.0 465.6 L422.0 465.6 L422.0 468.2 L423.0 468.2 L423.0 467.8 L424.0 467.8 L424.0 463.3 L425.0 463.3 L425.0 470.0 L426.0 470.0 L426.0 468.5 L427.0 468.5 L427.0 467.0 L428.0 467.0 L428.0 466.4 L429.0 466.4 L429.0 463.6 L430.0 463.6 L430.0 467.7 L431.0 467.7 L431.0 469.7 L432.0 469.7 L432.0 468.5 L433.0 468.5 L433.0 467.4 L434.0 467.4 L434.0 468.9 L435.0 468.9 L435.0 470.4 L436.0 470.4 L436.0 469.3 L437.0 469.3 L437.0 468.2 L438.0 468.2 L438.0 465.5 L439.0 465.5 L439.0 462.9 L440.0 462.9 L440.0 465.7 L441.0 465.7 L441.0 468.4 L442.0 468.4 L442.0 468.6 L443.0 468.6 L443.0 468.8 L444.0 468.8 L444.0 469.0 L445.0 469.0 L445.0 469.3 L446.0 469.3 L446.0 467.0 L447.0 467.0 L447.0 464.8 L448.0 464.8 L448.0 465.0 L449.0 465.0 L449.0 465.2 L450.0 465.2 L450.0 463.7 L451.0 463.7 L451.0 459.8 L452.0 459.8 L452.0 464.1 L453.0 464.1 L453.0 466.1 L454.0 466.1 L454.0 464.5 L455.0 464.5 L455.0 463.0 L456.0 463.0 L456.0 463.1 L457.0 463.1 L457.0 463.3 L458.0 463.3 L458.0 461.9 L459.0 461.9 L459.0 460.5 L460.0 460.5 L460.0 464.0 L461.0 464.0 L461.0 464.7 L462.0 464.7 L462.0 465.7 L463.0 465.7 L463.0 463.7 L464.0 463.7 L464.0 461.1 L465.0 461.1 L465.0 458.5 L466.0 458.5 L466.0 462.9 L467.0 462.9 L467.0 467.3 L468.0 467.3 L468.0 463.1 L469.0 463.1 L469.0 458.9 L470.0 458.9 L470.0 463.9 L471.0 463.9 L471.0 468.9 L472.0 468.9 L472.0 466.9 L473.0 466.9 L473.0 464.9 L474.0 464.9 L474.0 466.0 L475.0 466.0 L475.0 467.1 L476.0 467.1 L476.0 468.2 L477.0 468.2 L477.0 469.4 L478.0 469.4 L478.0 469.6 L479.0 469.6 L479.0 463.8 L480.0 463.8 L480.0 466.6 L481.0 466.6 L481.0 463.4 L482.0 463.4 L482.0 461.9 L483.0 461.9 L483.0 456.0 L484.0 456.0 L484.0 464.9 L485.0 464.9 L485.0 469.3 L486.0 469.3 L486.0 468.4 L487.0 468.4 L487.0 464.4 L488.0 464.4 L488.0 467.3 L489.0 467.3 L489.0 467.1 L490.0 467.1 L490.0 468.0 L491.0 468.0 L491.0 468.8 L492.0 468.8 L492.0 465.2 L493.0 465.2 L493.0 461.7 L494.0 461.7 L494.0 461.0 L495.0 461.0 L495.0 456.4 L496.0 456.4 L496.0 464.2 L497.0 464.2 L497.0 468.2 L498.0 468.2 L498.0 467.4 L499.0 467.4 L499.0 466.5 L500.0 466.5 L500.0 467.6 L501.0 467.6 L501.0 468.7 L502.0 468.7 L502.0 466.7 L503.0 466.7 L503.0 464.6 L504.0 464.6 L504.0 466.4 L505.0 466.4 L505.0 468.2 L506.0 468.2 L506.0 463.4 L507.0 463.4 L507.0 458.5 L508.0 458.5 L508.0 464.3 L509.0 464.3 L509.0 470.0 L510.0 470.0 L510.0 466.7 L511.0 466.7 L511.0 463.4 L512.0 463.4 L512.0 466.6 L513.0 466.6 L513.0 469.8 L514.0 469.8 L514.0 466.1 L515.0 466.1 L515.0 462.3 L516.0 462.3 L516.0 465.9 L517.0 465.9 L517.0 469.4 L518.0 469.4 L518.0 467.5 L519.0 467.5 L519.0 465.6 L520.0 465.6 L520.0 466.1 L521.0 466.1 L521.0 466.6 L522.0 466.6 L522.0 467.6 L523.0 467.6 L523.0 468.5 L524.0 468.5 L524.0 468.6 L525.0 468.6 L525.0 468.7 L526.0 468.7 L526.0 464.5 L527.0 464.5 L527.0 469.2 L528.0 469.2 L528.0 469.5 L529.0 469.5 L529.0 469.9 L530.0 469.9 L530.0 467.3 L531.0 467.3 L531.0 464.8 L532.0 464.8 L532.0 460.0 L533.0 460.0 L533.0 463.2 L534.0 463.2 L534.0 463.4 L535.0 463.4 L535.0 463.6 L536.0 463.6 L536.0 466.3 L537.0 466.3 L537.0 463.4 L538.0 463.4 L538.0 467.8 L539.0 467.8 L539.0 466.6 L540.0 466.6 L540.0 467.9 L541.0 467.9 L541.0 469.3 L542.0 469.3 L542.0 469.5 L543.0 469.5 L543.0 469.8 L544.0 469.8 L544.0 465.3 L545.0 465.3 L545.0 467.3 L546.0 467.3 L546.0 467.7 L547.0 467.7 L547.0 468.1 L548.0 468.1 L548.0 468.3 L549.0 468.3 L549.0 463.3 L550.0 463.3 L550.0 465.5 L551.0 465.5 L551.0 462.5 L552.0 462.5 L552.0 463.8 L553.0 463.8 L553.0 465.0 L554.0 465.0 L554.0 467.6 L555.0 467.6 L555.0 470.1 L556.0 470.1 L556.0 465.8 L557.0 465.8 L557.0 468.8 L558.0 468.8 L558.0 467.7 L559.0 467.7 L559.0 466.6 L560.0 466.6 L560.0 463.4 L561.0 463.4 L561.0 468.1 L562.0 468.1 L562.0 465.4 L563.0 465.4 L563.0 462.6 L564.0 462.6 L564.0 462.0 L565.0 462.0 L565.0 461.4 L566.0 461.4 L566.0 462.3 L567.0 462.3 L567.0 469.1 L568.0 469.1 L568.0 468.9 L569.0 468.9 L569.0 468.6 L570.0 468.6 L570.0 466.5 L571.0 466.5 L571.0 464.3 L572.0 464.3 L572.0 464.5 L573.0 464.5 L573.0 468.9 L574.0 468.9 L574.0 470.0 L575.0 470.0 L575.0 471.0 L576.0 471.0 L576.0 469.8 L577.0 469.8 L577.0 468.5 L578.0 468.5 L578.0 466.4 L579.0 466.4 L579.0 464.4 L580.0 464.4 L580.0 466.7 L581.0 466.7 L581.0 469.1 L582.0 469.1 L582.0 464.6 L583.0 464.6 L583.0 460.0 L584.0 460.0 L584.0 460.3 L585.0 460.3 L585.0 460.6 L586.0 460.6 L586.0 459.7 L587.0 459.7 L587.0 466.0 L588.0 466.0 L588.0 461.9 L589.0 461.9 L589.0 464.5 L590.0 464.5 L590.0 464.9 L591.0 464.9 L591.0 465.3 L592.0 465.3 L592.0 467.2 L593.0 467.2 L593.0 469.0 L594.0 469.0 L594.0 469.0 L595.0 469.0 L595.0 469.0 L596.0 469.0 L596.0 467.4 L597.0 467.4 L597.0 465.7 L598.0 465.7 L598.0 465.5 L599.0 465.5 L599.0 465.2 L600.0 465.2 L600.0 464.9 L601.0 464.9 L601.0 464.5 L602.0 464.5 L602.0 462.1 L603.0 462.1 L603.0 459.8 L604.0 459.8 L604.0 461.2 L605.0 461.2 L605.0 462.7 L606.0 462.7 L606.0 463.4 L607.0 463.4 L607.0 464.1 L608.0 464.1 L608.0 467.4 L609.0 467.4 L609.0 470.6 L610.0 470.6 L610.0 470.7 L611.0 470.7 L611.0 470.8 L612.0 470.8 L612.0 466.1 L613.0 466.1 L613.0 456.6 L614.0 456.6 L614.0 461.4 L615.0 461.4 L615.0 461.3 L616.0 461.3 L616.0 460.0 L617.0 460.0 L617.0 464.1 L618.0 464.1 L618.0 464.4 L619.0 464.4 L619.0 464.8 L620.0 464.8 L620.0 464.1 L621.0 464.1 L621.0 463.5 L622.0 463.5 L622.0 466.8 L623.0 466.8 L623.0 470.0 L624.0 470.0 L624.0 469.2 L625.0 469.2 L625.0 468.4 L626.0 468.4 L626.0 469.0 L627.0 469.0 L627.0 469.7 L628.0 469.7 L628.0 469.6 L629.0 469.6 L629.0 466.3 L630.0 466.3 L630.0 469.4 L631.0 469.4 L631.0 463.8 L632.0 463.8 L632.0 470.2 L633.0 470.2 L633.0 471.2 L634.0 471.2 L634.0 470.5 L635.0 470.5 L635.0 466.3 L636.0 466.3 L636.0 465.8 L637.0 465.8 L637.0 459.1 L638.0 459.1 L638.0 461.5 L639.0 461.5 L639.0 458.0 L640.0 458.0 L640.0 462.5 L641.0 462.5 L641.0 463.7 L642.0 463.7 L642.0 464.1 L643.0 464.1 L643.0 464.5 L644.0 464.5 L644.0 463.4 L645.0 463.4 L645.0 462.3 L646.0 462.3 L646.0 462.1 L647.0 462.1 L647.0 461.9 L648.0 461.9 L648.0 466.4 L649.0 466.4 L649.0 470.8 L650.0 470.8 L650.0 471.8 L651.0 471.8 L651.0 472.9 L652.0 472.9 L652.0 472.2 L653.0 472.2 L653.0 471.5 L654.0 471.5 L654.0 471.7 L655.0 471.7 L655.0 471.9 L656.0 471.9 L656.0 471.0 L657.0 471.0 L657.0 470.0 L658.0 470.0 L658.0 463.4 L659.0 463.4 L659.0 460.9 L660.0 460.9 L660.0 466.5 L661.0 466.5 L661.0 472.1 L662.0 472.1 L662.0 469.1 L663.0 469.1 L663.0 466.1 L664.0 466.1 L664.0 468.0 L665.0 468.0 L665.0 469.8 L666.0 469.8 L666.0 468.0 L667.0 468.0 L667.0 466.1 L668.0 466.1 L668.0 468.6 L669.0 468.6 L669.0 471.1 L670.0 471.1 L670.0 465.5 L671.0 465.5 L671.0 460.0 L672.0 460.0 L672.0 465.5 L673.0 465.5 L673.0 467.2 L674.0 467.2 L674.0 469.5 L675.0 469.5 L675.0 464.5 L676.0 464.5 L676.0 469.9 L677.0 469.9 L677.0 471.6 L678.0 471.6 L678.0 468.7 L679.0 468.7 L679.0 465.7 L680.0 465.7 L680.0 468.4 L681.0 468.4 L681.0 471.2 L682.0 471.2 L682.0 468.2 L683.0 468.2 L683.0 465.2 L684.0 465.2 L684.0 467.4 L685.0 467.4 L685.0 466.3 L686.0 466.3 L686.0 468.8 L687.0 468.8 L687.0 468.0 L688.0 468.0 L688.0 468.8 L689.0 468.8 L689.0 469.6 L690.0 469.6 L690.0 467.3 L691.0 467.3 L691.0 465.1 L692.0 465.1 L692.0 464.0 L693.0 464.0 L693.0 470.1 L694.0 470.1 L694.0 467.0 L695.0 467.0 L695.0 467.0 L696.0 467.0 L696.0 470.0 L697.0 470.0 L697.0 468.9 L698.0 468.9 L698.0 468.3 L699.0 468.3 L699.0 467.7 L700.0 467.7 L700.0 465.5 L701.0 465.5 L701.0 470.2 L702.0 470.2 L702.0 470.5 L703.0 470.5 L703.0 470.8 L704.0 470.8 L704.0 470.7 L705.0 470.7 L705.0 470.6 L706.0 470.6 L706.0 471.5 L707.0 471.5 L707.0 472.4 L708.0 472.4 L708.0 470.2 L709.0 470.2 L709.0 468.1 L710.0 468.1 L710.0 467.7 L711.0 467.7 L711.0 467.3 L712.0 467.3 L712.0 464.2 L713.0 464.2 L713.0 461.1 L714.0 461.1 L714.0 464.5 L715.0 464.5 L715.0 468.0 L716.0 468.0 L716.0 468.8 L717.0 468.8 L717.0 469.7 L718.0 469.7 L718.0 470.5 L719.0 470.5 L719.0 471.3 L720.0 471.3 L720.0 471.3 L721.0 471.3 L721.0 471.3 L722.0 471.3 L722.0 468.5 L723.0 468.5 L723.0 470.8 L724.0 470.8 L724.0 470.2 L725.0 470.2 L725.0 469.6 L726.0 469.6 L726.0 469.7 L727.0 469.7 L727.0 469.8 L728.0 469.8 L728.0 470.9 L729.0 470.9 L729.0 472.0 L730.0 472.0 L730.0 471.0 L731.0 471.0 L731.0 470.0 L732.0 470.0 L732.0 463.3 L733.0 463.3 L733.0 464.8 L734.0 464.8 L734.0 467.0 L735.0 467.0 L735.0 469.2 L736.0 469.2 L736.0 469.5 L737.0 469.5 L737.0 469.8 L738.0 469.8 L738.0 469.8 L739.0 469.8 L739.0 469.8 L740.0 469.8 L740.0 468.0 L741.0 468.0 L741.0 466.3 L742.0 466.3 L742.0 468.1 L743.0 468.1 L743.0 469.9 L744.0 469.9 L744.0 468.7 L745.0 468.7 L745.0 467.5 L746.0 467.5 L746.0 464.9 L747.0 464.9 L747.0 462.2 L748.0 462.2 L748.0 466.2 L749.0 466.2 L749.0 470.2 L750.0 470.2 L750.0 466.7 L751.0 466.7 L751.0 463.2 L752.0 463.2 L752.0 464.3 L753.0 464.3 L753.0 465.3 L754.0 465.3 L754.0 465.1 L755.0 465.1 L755.0 464.9 L756.0 464.9 L756.0 465.4 L757.0 465.4 L757.0 465.9 L758.0 465.9 L758.0 466.0 L759.0 466.0 L759.0 466.1 L760.0 466.1 L760.0 467.4 L761.0 467.4 L761.0 468.7 L762.0 468.7 L762.0 469.5 L763.0 469.5 L763.0 470.3 L764.0 470.3 L764.0 470.2 L765.0 470.2 L765.0 467.8 L766.0 467.8 L766.0 465.0 L767.0 465.0 L767.0 465.8 L768.0 465.8 L768.0 467.0 L769.0 467.0 L769.0 464.5 L770.0 464.5 L770.0 467.1 L771.0 467.1 L771.0 469.8 L772.0 469.8 L772.0 466.7 L773.0 466.7 L773.0 460.6 L774.0 460.6 L774.0 467.3 L775.0 467.3 L775.0 470.9 L776.0 470.9 L776.0 468.5 L777.0 468.5 L777.0 466.1 L778.0 466.1 L778.0 468.7 L779.0 468.7 L779.0 471.2 L780.0 471.2 L780.0 469.5 L781.0 469.5 L781.0 467.8 L782.0 467.8 L782.0 467.4 L783.0 467.4 L783.0 467.1 L784.0 467.1 L784.0 464.1 L785.0 464.1 L785.0 461.1 L786.0 461.1 L786.0 465.3 L787.0 465.3 L787.0 469.6 L788.0 469.6 L788.0 471.1 L789.0 471.1 L789.0 472.7 L790.0 472.7 L790.0 470.1 L791.0 470.1 L791.0 467.4 L792.0 467.4 L792.0 469.5 L793.0 469.5 L793.0 471.5 L794.0 471.5 L794.0 469.5 L795.0 469.5 L795.0 467.5 L796.0 467.5 L796.0 465.0 L797.0 465.0 L797.0 471.1 L798.0 471.1 L798.0 468.7 L799.0 468.7 L799.0 466.2 L800.0 466.2 L800.0 468.8 L801.0 468.8 L801.0 471.4 L802.0 471.4 L802.0 469.3 L803.0 469.3 L803.0 467.2 L804.0 467.2 L804.0 465.5 L805.0 465.5 L805.0 463.9 L806.0 463.9 L806.0 462.0 L807.0 462.0 L807.0 467.7 L808.0 467.7 L808.0 468.0 L809.0 468.0 L809.0 466.2 L810.0 466.2 L810.0 469.0 L811.0 469.0 L811.0 471.8 L812.0 471.8 L812.0 471.3 L813.0 471.3 L813.0 466.7 L814.0 466.7 L814.0 466.6 L815.0 466.6 L815.0 462.4 L816.0 462.4 L816.0 465.9 L817.0 465.9 L817.0 469.4 L818.0 469.4 L818.0 466.9 L819.0 466.9 L819.0 464.4 L820.0 464.4 L820.0 467.2 L821.0 467.2 L821.0 470.0 L822.0 470.0 L822.0 469.5 L823.0 469.5 L823.0 469.0 L824.0 469.0 L824.0 470.4 L825.0 470.4 L825.0 471.8 L826.0 471.8 L826.0 470.8 L827.0 470.8 L827.0 469.8 L828.0 469.8 L828.0 469.2 L829.0 469.2 L829.0 468.5 L830.0 468.5 L830.0 463.1 L831.0 463.1 L831.0 469.2 L832.0 469.2 L832.0 468.9 L833.0 468.9 L833.0 468.7 L834.0 468.7 L834.0 468.3 L835.0 468.3 L835.0 463.6 L836.0 463.6 L836.0 470.1 L837.0 470.1 L837.0 472.2 L838.0 472.2 L838.0 469.9 L839.0 469.9 L839.0 467.5 L840.0 467.5 L840.0 468.9 L841.0 468.9 L841.0 470.4 L842.0 470.4 L842.0 470.4 L843.0 470.4 L843.0 468.2 L844.0 468.2 L844.0 468.8 L845.0 468.8 L845.0 467.2 L846.0 467.2 L846.0 464.5 L847.0 464.5 L847.0 467.2 L848.0 467.2 L848.0 500.4 L847.0 500.4 L847.0 498.4 L846.0 498.4 L846.0 496.4 L845.0 496.4 L845.0 495.7 L844.0 495.7 L844.0 495.1 L843.0 495.1 L843.0 499.1 L842.0 499.1 L842.0 498.1 L841.0 498.1 L841.0 499.0 L840.0 499.0 L840.0 499.9 L839.0 499.9 L839.0 502.5 L838.0 502.5 L838.0 508.9 L837.0 508.9 L837.0 500.5 L836.0 500.5 L836.0 496.0 L835.0 496.0 L835.0 495.3 L834.0 495.3 L834.0 494.6 L833.0 494.6 L833.0 494.3 L832.0 494.3 L832.0 494.1 L831.0 494.1 L831.0 497.2 L830.0 497.2 L830.0 500.3 L829.0 500.3 L829.0 501.6 L828.0 501.6 L828.0 502.9 L827.0 502.9 L827.0 501.5 L826.0 501.5 L826.0 500.1 L825.0 500.1 L825.0 498.3 L824.0 498.3 L824.0 496.4 L823.0 496.4 L823.0 499.4 L822.0 499.4 L822.0 502.5 L821.0 502.5 L821.0 498.9 L820.0 498.9 L820.0 499.4 L819.0 499.4 L819.0 499.9 L818.0 499.9 L818.0 502.2 L817.0 502.2 L817.0 501.6 L816.0 501.6 L816.0 494.8 L815.0 494.8 L815.0 495.3 L814.0 495.3 L814.0 495.7 L813.0 495.7 L813.0 497.6 L812.0 497.6 L812.0 499.5 L811.0 499.5 L811.0 501.8 L810.0 501.8 L810.0 498.9 L809.0 498.9 L809.0 497.1 L808.0 497.1 L808.0 497.7 L807.0 497.7 L807.0 498.2 L806.0 498.2 L806.0 498.7 L805.0 498.7 L805.0 501.0 L804.0 501.0 L804.0 507.0 L803.0 507.0 L803.0 503.1 L802.0 503.1 L802.0 502.8 L801.0 502.8 L801.0 500.2 L800.0 500.2 L800.0 497.5 L799.0 497.5 L799.0 496.2 L798.0 496.2 L798.0 495.0 L797.0 495.0 L797.0 497.0 L796.0 497.0 L796.0 498.9 L795.0 498.9 L795.0 496.8 L794.0 496.8 L794.0 494.6 L793.0 494.6 L793.0 494.8 L792.0 494.8 L792.0 494.9 L791.0 494.9 L791.0 494.5 L790.0 494.5 L790.0 494.1 L789.0 494.1 L789.0 493.7 L788.0 493.7 L788.0 493.4 L787.0 493.4 L787.0 494.5 L786.0 494.5 L786.0 495.7 L785.0 495.7 L785.0 499.6 L784.0 499.6 L784.0 493.8 L783.0 493.8 L783.0 494.9 L782.0 494.9 L782.0 495.9 L781.0 495.9 L781.0 498.2 L780.0 498.2 L780.0 495.9 L779.0 495.9 L779.0 497.5 L778.0 497.5 L778.0 501.0 L777.0 501.0 L777.0 497.4 L776.0 497.4 L776.0 493.7 L775.0 493.7 L775.0 494.2 L774.0 494.2 L774.0 494.8 L773.0 494.8 L773.0 494.9 L772.0 494.9 L772.0 494.9 L771.0 494.9 L771.0 494.1 L770.0 494.1 L770.0 493.3 L769.0 493.3 L769.0 496.3 L768.0 496.3 L768.0 499.3 L767.0 499.3 L767.0 495.8 L766.0 495.8 L766.0 492.4 L765.0 492.4 L765.0 494.0 L764.0 494.0 L764.0 500.2 L763.0 500.2 L763.0 494.9 L762.0 494.9 L762.0 494.1 L761.0 494.1 L761.0 493.3 L760.0 493.3 L760.0 492.5 L759.0 492.5 L759.0 492.4 L758.0 492.4 L758.0 492.3 L757.0 492.3 L757.0 496.2 L756.0 496.2 L756.0 500.0 L755.0 500.0 L755.0 496.4 L754.0 496.4 L754.0 492.9 L753.0 492.9 L753.0 496.3 L752.0 496.3 L752.0 499.8 L751.0 499.8 L751.0 497.1 L750.0 497.1 L750.0 494.5 L749.0 494.5 L749.0 497.0 L748.0 497.0 L748.0 499.6 L747.0 499.6 L747.0 497.8 L746.0 497.8 L746.0 501.9 L745.0 501.9 L745.0 497.8 L744.0 497.8 L744.0 499.6 L743.0 499.6 L743.0 500.1 L742.0 500.1 L742.0 500.7 L741.0 500.7 L741.0 497.5 L740.0 497.5 L740.0 494.3 L739.0 494.3 L739.0 495.3 L738.0 495.3 L738.0 496.3 L737.0 496.3 L737.0 495.8 L736.0 495.8 L736.0 498.4 L735.0 498.4 L735.0 495.7 L734.0 495.7 L734.0 496.1 L733.0 496.1 L733.0 496.0 L732.0 496.0 L732.0 495.8 L731.0 495.8 L731.0 500.5 L730.0 500.5 L730.0 505.1 L729.0 505.1 L729.0 503.8 L728.0 503.8 L728.0 502.5 L727.0 502.5 L727.0 498.3 L726.0 498.3 L726.0 494.2 L725.0 494.2 L725.0 499.3 L724.0 499.3 L724.0 493.4 L723.0 493.4 L723.0 496.2 L722.0 496.2 L722.0 503.5 L721.0 503.5 L721.0 496.6 L720.0 496.6 L720.0 494.1 L719.0 494.1 L719.0 495.2 L718.0 495.2 L718.0 496.4 L717.0 496.4 L717.0 497.1 L716.0 497.1 L716.0 497.9 L715.0 497.9 L715.0 498.1 L714.0 498.1 L714.0 498.4 L713.0 498.4 L713.0 496.4 L712.0 496.4 L712.0 494.5 L711.0 494.5 L711.0 498.6 L710.0 498.6 L710.0 497.0 L709.0 497.0 L709.0 496.7 L708.0 496.7 L708.0 498.8 L707.0 498.8 L707.0 496.2 L706.0 496.2 L706.0 496.0 L705.0 496.0 L705.0 494.9 L704.0 494.9 L704.0 495.9 L703.0 495.9 L703.0 496.3 L702.0 496.3 L702.0 499.0 L701.0 499.0 L701.0 499.7 L700.0 499.7 L700.0 496.1 L699.0 496.1 L699.0 498.4 L698.0 498.4 L698.0 505.9 L697.0 505.9 L697.0 500.0 L696.0 500.0 L696.0 499.4 L695.0 499.4 L695.0 496.5 L694.0 496.5 L694.0 493.6 L693.0 493.6 L693.0 494.8 L692.0 494.8 L692.0 496.0 L691.0 496.0 L691.0 499.2 L690.0 499.2 L690.0 502.3 L689.0 502.3 L689.0 499.0 L688.0 499.0 L688.0 501.1 L687.0 501.1 L687.0 500.6 L686.0 500.6 L686.0 500.0 L685.0 500.0 L685.0 500.7 L684.0 500.7 L684.0 501.4 L683.0 501.4 L683.0 503.2 L682.0 503.2 L682.0 505.1 L681.0 505.1 L681.0 502.6 L680.0 502.6 L680.0 500.2 L679.0 500.2 L679.0 497.2 L678.0 497.2 L678.0 494.2 L677.0 494.2 L677.0 497.3 L676.0 497.3 L676.0 500.4 L675.0 500.4 L675.0 499.0 L674.0 499.0 L674.0 493.3 L673.0 493.3 L673.0 494.5 L672.0 494.5 L672.0 499.6 L671.0 499.6 L671.0 495.0 L670.0 495.0 L670.0 494.4 L669.0 494.4 L669.0 494.8 L668.0 494.8 L668.0 495.3 L667.0 495.3 L667.0 497.7 L666.0 497.7 L666.0 500.1 L665.0 500.1 L665.0 500.4 L664.0 500.4 L664.0 500.7 L663.0 500.7 L663.0 499.1 L662.0 499.1 L662.0 497.5 L661.0 497.5 L661.0 500.1 L660.0 500.1 L660.0 497.2 L659.0 497.2 L659.0 497.4 L658.0 497.4 L658.0 497.6 L657.0 497.6 L657.0 497.4 L656.0 497.4 L656.0 497.2 L655.0 497.2 L655.0 497.2 L654.0 497.2 L654.0 497.2 L653.0 497.2 L653.0 495.7 L652.0 495.7 L652.0 494.3 L651.0 494.3 L651.0 498.7 L650.0 498.7 L650.0 503.2 L649.0 503.2 L649.0 503.1 L648.0 503.1 L648.0 494.5 L647.0 494.5 L647.0 495.3 L646.0 495.3 L646.0 496.2 L645.0 496.2 L645.0 494.7 L644.0 494.7 L644.0 493.2 L643.0 493.2 L643.0 496.5 L642.0 496.5 L642.0 499.9 L641.0 499.9 L641.0 497.6 L640.0 497.6 L640.0 495.3 L639.0 495.3 L639.0 500.0 L638.0 500.0 L638.0 499.5 L637.0 499.5 L637.0 497.7 L636.0 497.7 L636.0 496.0 L635.0 496.0 L635.0 497.2 L634.0 497.2 L634.0 494.1 L633.0 494.1 L633.0 493.9 L632.0 493.9 L632.0 493.6 L631.0 493.6 L631.0 493.9 L630.0 493.9 L630.0 498.8 L629.0 498.8 L629.0 494.5 L628.0 494.5 L628.0 494.7 L627.0 494.7 L627.0 495.7 L626.0 495.7 L626.0 501.7 L625.0 501.7 L625.0 496.7 L624.0 496.7 L624.0 496.7 L623.0 496.7 L623.0 503.7 L622.0 503.7 L622.0 504.9 L621.0 504.9 L621.0 500.3 L620.0 500.3 L620.0 495.8 L619.0 495.8 L619.0 495.3 L618.0 495.3 L618.0 494.9 L617.0 494.9 L617.0 495.5 L616.0 495.5 L616.0 496.0 L615.0 496.0 L615.0 500.0 L614.0 500.0 L614.0 503.9 L613.0 503.9 L613.0 501.0 L612.0 501.0 L612.0 498.2 L611.0 498.2 L611.0 496.9 L610.0 496.9 L610.0 495.7 L609.0 495.7 L609.0 494.9 L608.0 494.9 L608.0 494.0 L607.0 494.0 L607.0 498.0 L606.0 498.0 L606.0 493.5 L605.0 493.5 L605.0 498.9 L604.0 498.9 L604.0 506.9 L603.0 506.9 L603.0 505.5 L602.0 505.5 L602.0 494.8 L601.0 494.8 L601.0 496.1 L600.0 496.1 L600.0 497.4 L599.0 497.4 L599.0 497.4 L598.0 497.4 L598.0 497.4 L597.0 497.4 L597.0 495.5 L596.0 495.5 L596.0 493.6 L595.0 493.6 L595.0 500.5 L594.0 500.5 L594.0 501.4 L593.0 501.4 L593.0 498.0 L592.0 498.0 L592.0 494.5 L591.0 494.5 L591.0 494.3 L590.0 494.3 L590.0 494.1 L589.0 494.1 L589.0 494.1 L588.0 494.1 L588.0 494.2 L587.0 494.2 L587.0 493.9 L586.0 493.9 L586.0 493.6 L585.0 493.6 L585.0 495.0 L584.0 495.0 L584.0 496.5 L583.0 496.5 L583.0 496.0 L582.0 496.0 L582.0 495.4 L581.0 495.4 L581.0 498.8 L580.0 498.8 L580.0 502.2 L579.0 502.2 L579.0 503.1 L578.0 503.1 L578.0 496.9 L577.0 496.9 L577.0 495.9 L576.0 495.9 L576.0 498.2 L575.0 498.2 L575.0 497.2 L574.0 497.2 L574.0 496.1 L573.0 496.1 L573.0 498.9 L572.0 498.9 L572.0 501.7 L571.0 501.7 L571.0 499.1 L570.0 499.1 L570.0 496.6 L569.0 496.6 L569.0 495.3 L568.0 495.3 L568.0 494.0 L567.0 494.0 L567.0 495.2 L566.0 495.2 L566.0 496.4 L565.0 496.4 L565.0 496.4 L564.0 496.4 L564.0 496.4 L563.0 496.4 L563.0 496.1 L562.0 496.1 L562.0 495.8 L561.0 495.8 L561.0 496.4 L560.0 496.4 L560.0 497.0 L559.0 497.0 L559.0 504.8 L558.0 504.8 L558.0 501.9 L557.0 501.9 L557.0 499.0 L556.0 499.0 L556.0 499.2 L555.0 499.2 L555.0 496.4 L554.0 496.4 L554.0 496.9 L553.0 496.9 L553.0 496.6 L552.0 496.6 L552.0 496.4 L551.0 496.4 L551.0 498.3 L550.0 498.3 L550.0 500.2 L549.0 500.2 L549.0 498.4 L548.0 498.4 L548.0 496.5 L547.0 496.5 L547.0 497.9 L546.0 497.9 L546.0 499.4 L545.0 499.4 L545.0 496.7 L544.0 496.7 L544.0 494.1 L543.0 494.1 L543.0 495.1 L542.0 495.1 L542.0 500.9 L541.0 500.9 L541.0 497.2 L540.0 497.2 L540.0 493.5 L539.0 493.5 L539.0 495.4 L538.0 495.4 L538.0 497.3 L537.0 497.3 L537.0 495.2 L536.0 495.2 L536.0 495.2 L535.0 495.2 L535.0 494.1 L534.0 494.1 L534.0 495.2 L533.0 495.2 L533.0 501.7 L532.0 501.7 L532.0 502.1 L531.0 502.1 L531.0 495.4 L530.0 495.4 L530.0 493.5 L529.0 493.5 L529.0 497.5 L528.0 497.5 L528.0 501.5 L527.0 501.5 L527.0 500.7 L526.0 500.7 L526.0 499.8 L525.0 499.8 L525.0 496.1 L524.0 496.1 L524.0 492.4 L523.0 492.4 L523.0 492.7 L522.0 492.7 L522.0 492.9 L521.0 492.9 L521.0 493.3 L520.0 493.3 L520.0 493.6 L519.0 493.6 L519.0 493.8 L518.0 493.8 L518.0 494.0 L517.0 494.0 L517.0 495.2 L516.0 495.2 L516.0 496.3 L515.0 496.3 L515.0 495.5 L514.0 495.5 L514.0 494.6 L513.0 494.6 L513.0 494.7 L512.0 494.7 L512.0 494.8 L511.0 494.8 L511.0 496.3 L510.0 496.3 L510.0 497.8 L509.0 497.8 L509.0 500.3 L508.0 500.3 L508.0 502.8 L507.0 502.8 L507.0 503.2 L506.0 503.2 L506.0 503.6 L505.0 503.6 L505.0 499.5 L504.0 499.5 L504.0 495.4 L503.0 495.4 L503.0 495.9 L502.0 495.9 L502.0 496.5 L501.0 496.5 L501.0 495.1 L500.0 495.1 L500.0 493.8 L499.0 493.8 L499.0 497.3 L498.0 497.3 L498.0 500.9 L497.0 500.9 L497.0 497.7 L496.0 497.7 L496.0 499.8 L495.0 499.8 L495.0 495.2 L494.0 495.2 L494.0 495.8 L493.0 495.8 L493.0 498.0 L492.0 498.0 L492.0 500.2 L491.0 500.2 L491.0 497.2 L490.0 497.2 L490.0 496.5 L489.0 496.5 L489.0 497.4 L488.0 497.4 L488.0 500.6 L487.0 500.6 L487.0 502.1 L486.0 502.1 L486.0 503.6 L485.0 503.6 L485.0 500.3 L484.0 500.3 L484.0 497.1 L483.0 497.1 L483.0 498.1 L482.0 498.1 L482.0 502.6 L481.0 502.6 L481.0 496.8 L480.0 496.8 L480.0 494.5 L479.0 494.5 L479.0 496.5 L478.0 496.5 L478.0 498.4 L477.0 498.4 L477.0 497.1 L476.0 497.1 L476.0 495.9 L475.0 495.9 L475.0 496.2 L474.0 496.2 L474.0 499.6 L473.0 499.6 L473.0 497.8 L472.0 497.8 L472.0 499.1 L471.0 499.1 L471.0 497.9 L470.0 497.9 L470.0 496.7 L469.0 496.7 L469.0 499.6 L468.0 499.6 L468.0 502.6 L467.0 502.6 L467.0 500.1 L466.0 500.1 L466.0 497.5 L465.0 497.5 L465.0 498.0 L464.0 498.0 L464.0 498.5 L463.0 498.5 L463.0 497.9 L462.0 497.9 L462.0 497.2 L461.0 497.2 L461.0 498.6 L460.0 498.6 L460.0 500.1 L459.0 500.1 L459.0 499.2 L458.0 499.2 L458.0 498.3 L457.0 498.3 L457.0 496.6 L456.0 496.6 L456.0 495.0 L455.0 495.0 L455.0 496.7 L454.0 496.7 L454.0 498.3 L453.0 498.3 L453.0 497.2 L452.0 497.2 L452.0 496.1 L451.0 496.1 L451.0 499.3 L450.0 499.3 L450.0 502.6 L449.0 502.6 L449.0 500.3 L448.0 500.3 L448.0 498.0 L447.0 498.0 L447.0 502.2 L446.0 502.2 L446.0 506.5 L445.0 506.5 L445.0 501.6 L444.0 501.6 L444.0 496.8 L443.0 496.8 L443.0 496.3 L442.0 496.3 L442.0 495.8 L441.0 495.8 L441.0 498.9 L440.0 498.9 L440.0 502.0 L439.0 502.0 L439.0 500.4 L438.0 500.4 L438.0 498.9 L437.0 498.9 L437.0 497.0 L436.0 497.0 L436.0 495.1 L435.0 495.1 L435.0 500.5 L434.0 500.5 L434.0 497.3 L433.0 497.3 L433.0 498.6 L432.0 498.6 L432.0 500.0 L431.0 500.0 L431.0 497.5 L430.0 497.5 L430.0 495.0 L429.0 495.0 L429.0 496.1 L428.0 496.1 L428.0 497.2 L427.0 497.2 L427.0 497.9 L426.0 497.9 L426.0 502.3 L425.0 502.3 L425.0 500.7 L424.0 500.7 L424.0 502.8 L423.0 502.8 L423.0 498.9 L422.0 498.9 L422.0 495.0 L421.0 495.0 L421.0 497.4 L420.0 497.4 L420.0 499.7 L419.0 499.7 L419.0 501.6 L418.0 501.6 L418.0 503.4 L417.0 503.4 L417.0 501.9 L416.0 501.9 L416.0 500.4 L415.0 500.4 L415.0 499.0 L414.0 499.0 L414.0 497.5 L413.0 497.5 L413.0 498.2 L412.0 498.2 L412.0 498.8 L411.0 498.8 L411.0 498.3 L410.0 498.3 L410.0 497.8 L409.0 497.8 L409.0 498.8 L408.0 498.8 L408.0 499.7 L407.0 499.7 L407.0 498.3 L406.0 498.3 L406.0 496.9 L405.0 496.9 L405.0 496.3 L404.0 496.3 L404.0 495.8 L403.0 495.8 L403.0 500.5 L402.0 500.5 L402.0 505.1 L401.0 505.1 L401.0 502.4 L400.0 502.4 L400.0 499.7 L399.0 499.7 L399.0 497.3 L398.0 497.3 L398.0 494.8 L397.0 494.8 L397.0 495.8 L396.0 495.8 L396.0 496.8 L395.0 496.8 L395.0 498.9 L394.0 498.9 L394.0 501.0 L393.0 501.0 L393.0 499.1 L392.0 499.1 L392.0 497.1 L391.0 497.1 L391.0 496.1 L390.0 496.1 L390.0 495.2 L389.0 495.2 L389.0 497.3 L388.0 497.3 L388.0 499.4 L387.0 499.4 L387.0 498.2 L386.0 498.2 L386.0 497.0 L385.0 497.0 L385.0 499.6 L384.0 499.6 L384.0 502.2 L383.0 502.2 L383.0 502.9 L382.0 502.9 L382.0 497.2 L381.0 497.2 L381.0 497.9 L380.0 497.9 L380.0 498.5 L379.0 498.5 L379.0 497.0 L378.0 497.0 L378.0 495.4 L377.0 495.4 L377.0 501.5 L376.0 501.5 L376.0 495.9 L375.0 495.9 L375.0 496.7 L374.0 496.7 L374.0 499.8 L373.0 499.8 L373.0 503.1 L372.0 503.1 L372.0 500.9 L371.0 500.9 L371.0 505.2 L370.0 505.2 L370.0 499.7 L369.0 499.7 L369.0 498.9 L368.0 498.9 L368.0 498.0 L367.0 498.0 L367.0 498.4 L366.0 498.4 L366.0 498.7 L365.0 498.7 L365.0 499.2 L364.0 499.2 L364.0 499.7 L363.0 499.7 L363.0 500.4 L362.0 500.4 L362.0 501.0 L361.0 501.0 L361.0 499.8 L360.0 499.8 L360.0 498.6 L359.0 498.6 L359.0 504.7 L358.0 504.7 L358.0 506.3 L357.0 506.3 L357.0 502.2 L356.0 502.2 L356.0 501.9 L355.0 501.9 L355.0 498.3 L354.0 498.3 L354.0 498.6 L353.0 498.6 L353.0 501.6 L352.0 501.6 L352.0 504.5 L351.0 504.5 L351.0 502.3 L350.0 502.3 L350.0 500.0 L349.0 500.0 L349.0 498.5 L348.0 498.5 L348.0 497.0 L347.0 497.0 L347.0 499.0 L346.0 499.0 L346.0 500.9 L345.0 500.9 L345.0 501.8 L344.0 501.8 L344.0 497.4 L343.0 497.4 L343.0 499.2 L342.0 499.2 L342.0 501.0 L341.0 501.0 L341.0 499.0 L340.0 499.0 L340.0 496.9 L339.0 496.9 L339.0 498.9 L338.0 498.9 L338.0 500.9 L337.0 500.9 L337.0 500.2 L336.0 500.2 L336.0 499.5 L335.0 499.5 L335.0 500.5 L334.0 500.5 L334.0 501.6 L333.0 501.6 L333.0 499.5 L332.0 499.5 L332.0 497.4 L331.0 497.4 L331.0 498.8 L330.0 498.8 L330.0 500.2 L329.0 500.2 L329.0 499.6 L328.0 499.6 L328.0 499.0 L327.0 499.0 L327.0 502.0 L326.0 502.0 L326.0 504.9 L325.0 504.9 L325.0 500.9 L324.0 500.9 L324.0 496.9 L323.0 496.9 L323.0 497.2 L322.0 497.2 L322.0 497.4 L321.0 497.4 L321.0 503.4 L320.0 503.4 L320.0 505.0 L319.0 505.0 L319.0 501.8 L318.0 501.8 L318.0 498.6 L317.0 498.6 L317.0 501.4 L316.0 501.4 L316.0 504.1 L315.0 504.1 L315.0 500.4 L314.0 500.4 L314.0 496.8 L313.0 496.8 L313.0 496.3 L312.0 496.3 L312.0 501.2 L311.0 501.2 L311.0 496.1 L310.0 496.1 L310.0 496.4 L309.0 496.4 L309.0 497.6 L308.0 497.6 L308.0 498.7 L307.0 498.7 L307.0 499.6 L306.0 499.6 L306.0 500.5 L305.0 500.5 L305.0 498.6 L304.0 498.6 L304.0 496.7 L303.0 496.7 L303.0 496.8 L302.0 496.8 L302.0 497.0 L301.0 497.0 L301.0 498.9 L300.0 498.9 L300.0 500.9 L299.0 500.9 L299.0 499.0 L298.0 499.0 L298.0 497.1 L297.0 497.1 L297.0 497.6 L296.0 497.6 L296.0 498.2 L295.0 498.2 L295.0 499.2 L294.0 499.2 L294.0 500.3 L293.0 500.3 L293.0 499.8 L292.0 499.8 L292.0 499.3 L291.0 499.3 L291.0 500.7 L290.0 500.7 L290.0 502.1 L289.0 502.1 L289.0 501.2 L288.0 501.2 L288.0 500.4 L287.0 500.4 L287.0 501.8 L286.0 501.8 L286.0 497.9 L285.0 497.9 L285.0 498.4 L284.0 498.4 L284.0 498.9 L283.0 498.9 L283.0 498.4 L282.0 498.4 L282.0 497.9 L281.0 497.9 L281.0 497.5 L280.0 497.5 L280.0 497.2 L279.0 497.2 L279.0 497.1 L278.0 497.1 L278.0 496.9 L277.0 496.9 L277.0 505.5 L276.0 505.5 L276.0 503.1 L275.0 503.1 L275.0 503.7 L274.0 503.7 L274.0 504.3 L273.0 504.3 L273.0 502.7 L272.0 502.7 L272.0 501.1 L271.0 501.1 L271.0 499.7 L270.0 499.7 L270.0 498.3 L269.0 498.3 L269.0 498.8 L268.0 498.8 L268.0 499.4 L267.0 499.4 L267.0 505.4 L266.0 505.4 L266.0 504.3 L265.0 504.3 Z" fill="#5a5b79"/>
<path d="M265.0 462.0 L266.0 462.0 L266.0 464.6 L267.0 464.6 L267.0 464.6 L268.0 464.6 L268.0 462.6 L269.0 462.6 L269.0 467.4 L270.0 467.4 L270.0 467.9 L271.0 467.9 L271.0 468.3 L272.0 468.3 L272.0 465.9 L273.0 465.9 L273.0 463.6 L274.0 463.6 L274.0 458.1 L275.0 458.1 L275.0 458.5 L276.0 458.5 L276.0 462.3 L277.0 462.3 L277.0 466.1 L278.0 466.1 L278.0 462.7 L279.0 462.7 L279.0 470.6 L280.0 470.6 L280.0 470.8 L281.0 470.8 L281.0 470.9 L282.0 470.9 L282.0 469.5 L283.0 469.5 L283.0 468.2 L284.0 468.2 L284.0 466.9 L285.0 466.9 L285.0 465.6 L286.0 465.6 L286.0 467.8 L287.0 467.8 L287.0 466.5 L288.0 466.5 L288.0 464.7 L289.0 464.7 L289.0 459.3 L290.0 459.3 L290.0 464.5 L291.0 464.5 L291.0 469.6 L292.0 469.6 L292.0 468.8 L293.0 468.8 L293.0 464.7 L294.0 464.7 L294.0 466.9 L295.0 466.9 L295.0 465.8 L296.0 465.8 L296.0 462.9 L297.0 462.9 L297.0 467.0 L298.0 467.0 L298.0 464.1 L299.0 464.1 L299.0 461.2 L300.0 461.2 L300.0 465.7 L301.0 465.7 L301.0 470.1 L302.0 470.1 L302.0 467.9 L303.0 467.9 L303.0 465.7 L304.0 465.7 L304.0 466.6 L305.0 466.6 L305.0 467.4 L306.0 467.4 L306.0 468.6 L307.0 468.6 L307.0 469.7 L308.0 469.7 L308.0 469.0 L309.0 469.0 L309.0 468.2 L310.0 468.2 L310.0 467.2 L311.0 467.2 L311.0 466.1 L312.0 466.1 L312.0 466.9 L313.0 466.9 L313.0 467.7 L314.0 467.7 L314.0 469.0 L315.0 469.0 L315.0 470.2 L316.0 470.2 L316.0 469.4 L317.0 469.4 L317.0 465.6 L318.0 465.6 L318.0 468.6 L319.0 468.6 L319.0 468.7 L320.0 468.7 L320.0 468.9 L321.0 468.9 L321.0 469.1 L322.0 469.1 L322.0 468.8 L323.0 468.8 L323.0 468.6 L324.0 468.6 L324.0 469.1 L325.0 469.1 L325.0 469.6 L326.0 469.6 L326.0 470.8 L327.0 470.8 L327.0 472.1 L328.0 472.1 L328.0 470.0 L329.0 470.0 L329.0 467.9 L330.0 467.9 L330.0 469.3 L331.0 469.3 L331.0 470.7 L332.0 470.7 L332.0 470.3 L333.0 470.3 L333.0 469.9 L334.0 469.9 L334.0 470.5 L335.0 470.5 L335.0 471.1 L336.0 471.1 L336.0 468.9 L337.0 468.9 L337.0 466.8 L338.0 466.8 L338.0 465.6 L339.0 465.6 L339.0 464.4 L340.0 464.4 L340.0 462.4 L341.0 462.4 L341.0 460.5 L342.0 460.5 L342.0 466.0 L343.0 466.0 L343.0 471.6 L344.0 471.6 L344.0 467.7 L345.0 467.7 L345.0 461.8 L346.0 461.8 L346.0 466.7 L347.0 466.7 L347.0 469.4 L348.0 469.4 L348.0 470.5 L349.0 470.5 L349.0 471.7 L350.0 471.7 L350.0 471.5 L351.0 471.5 L351.0 471.3 L352.0 471.3 L352.0 468.7 L353.0 468.7 L353.0 466.1 L354.0 466.1 L354.0 465.0 L355.0 465.0 L355.0 464.0 L356.0 464.0 L356.0 464.8 L357.0 464.8 L357.0 471.3 L358.0 471.3 L358.0 471.6 L359.0 471.6 L359.0 471.8 L360.0 471.8 L360.0 471.8 L361.0 471.8 L361.0 471.8 L362.0 471.8 L362.0 467.0 L363.0 467.0 L363.0 462.2 L364.0 462.2 L364.0 465.3 L365.0 465.3 L365.0 468.4 L366.0 468.4 L366.0 469.1 L367.0 469.1 L367.0 465.0 L368.0 465.0 L368.0 467.4 L369.0 467.4 L369.0 465.1 L370.0 465.1 L370.0 467.6 L371.0 467.6 L371.0 470.0 L372.0 470.0 L372.0 467.5 L373.0 467.5 L373.0 464.9 L374.0 464.9 L374.0 465.3 L375.0 465.3 L375.0 465.6 L376.0 465.6 L376.0 465.7 L377.0 465.7 L377.0 465.8 L378.0 465.8 L378.0 467.7 L379.0 467.7 L379.0 469.7 L380.0 469.7 L380.0 468.1 L381.0 468.1 L381.0 466.5 L382.0 466.5 L382.0 466.0 L383.0 466.0 L383.0 465.6 L384.0 465.6 L384.0 467.4 L385.0 467.4 L385.0 469.2 L386.0 469.2 L386.0 469.0 L387.0 469.0 L387.0 468.9 L388.0 468.9 L388.0 466.6 L389.0 466.6 L389.0 464.2 L390.0 464.2 L390.0 459.7 L391.0 459.7 L391.0 464.9 L392.0 464.9 L392.0 465.9 L393.0 465.9 L393.0 467.0 L394.0 467.0 L394.0 467.7 L395.0 467.7 L395.0 468.5 L396.0 468.5 L396.0 468.3 L397.0 468.3 L397.0 465.6 L398.0 465.6 L398.0 465.8 L399.0 465.8 L399.0 463.4 L400.0 463.4 L400.0 466.6 L401.0 466.6 L401.0 465.0 L402.0 465.0 L402.0 469.9 L403.0 469.9 L403.0 470.1 L404.0 470.1 L404.0 467.5 L405.0 467.5 L405.0 465.0 L406.0 465.0 L406.0 466.4 L407.0 466.4 L407.0 462.1 L408.0 462.1 L408.0 467.7 L409.0 467.7 L409.0 467.6 L410.0 467.6 L410.0 464.2 L411.0 464.2 L411.0 460.9 L412.0 460.9 L412.0 465.2 L413.0 465.2 L413.0 469.6 L414.0 469.6 L414.0 466.4 L415.0 466.4 L415.0 463.2 L416.0 463.2 L416.0 462.3 L417.0 462.3 L417.0 456.2 L418.0 456.2 L418.0 465.4 L419.0 465.4 L419.0 469.5 L420.0 469.5 L420.0 469.0 L421.0 469.0 L421.0 465.6 L422.0 465.6 L422.0 468.2 L423.0 468.2 L423.0 467.8 L424.0 467.8 L424.0 463.3 L425.0 463.3 L425.0 470.0 L426.0 470.0 L426.0 468.5 L427.0 468.5 L427.0 467.0 L428.0 467.0 L428.0 466.4 L429.0 466.4 L429.0 463.6 L430.0 463.6 L430.0 467.7 L431.0 467.7 L431.0 469.7 L432.0 469.7 L432.0 468.5 L433.0 468.5 L433.0 467.4 L434.0 467.4 L434.0 468.9 L435.0 468.9 L435.0 470.4 L436.0 470.4 L436.0 469.3 L437.0 469.3 L437.0 468.2 L438.0 468.2 L438.0 465.5 L439.0 465.5 L439.0 462.9 L440.0 462.9 L440.0 465.7 L441.0 465.7 L441.0 468.4 L442.0 468.4 L442.0 468.6 L443.0 468.6 L443.0 468.8 L444.0 468.8 L444.0 469.0 L445.0 469.0 L445.0 469.3 L446.0 469.3 L446.0 467.0 L447.0 467.0 L447.0 464.8 L448.0 464.8 L448.0 465.0 L449.0 465.0 L449.0 465.2 L450.0 465.2 L450.0 463.7 L451.0 463.7 L451.0 459.8 L452.0 459.8 L452.0 464.1 L453.0 464.1 L453.0 466.1 L454.0 466.1 L454.0 464.5 L455.0 464.5 L455.0 463.0 L456.0 463.0 L456.0 463.1 L457.0 463.1 L457.0 463.3 L458.0 463.3 L458.0 461.9 L459.0 461.9 L459.0 460.5 L460.0 460.5 L460.0 464.0 L461.0 464.0 L461.0 464.7 L462.0 464.7 L462.0 465.7 L463.0 465.7 L463.0 463.7 L464.0 463.7 L464.0 461.1 L465.0 461.1 L465.0 458.5 L466.0 458.5 L466.0 462.9 L467.0 462.9 L467.0 467.3 L468.0 467.3 L468.0 463.1 L469.0 463.1 L469.0 458.9 L470.0 458.9 L470.0 463.9 L471.0 463.9 L471.0 468.9 L472.0 468.9 L472.0 466.9 L473.0 466.9 L473.0 464.9 L474.0 464.9 L474.0 466.0 L475.0 466.0 L475.0 467.1 L476.0 467.1 L476.0 468.2 L477.0 468.2 L477.0 469.4 L478.0 469.4 L478.0 469.6 L479.0 469.6 L479.0 463.8 L480.0 463.8 L480.0 466.6 L481.0 466.6 L481.0 463.4 L482.0 463.4 L482.0 461.9 L483.0 461.9 L483.0 456.0 L484.0 456.0 L484.0 464.9 L485.0 464.9 L485.0 469.3 L486.0 469.3 L486.0 468.4 L487.0 468.4 L487.0 464.4 L488.0 464.4 L488.0 467.3 L489.0 467.3 L489.0 467.1 L490.0 467.1 L490.0 468.0 L491.0 468.0 L491.0 468.8 L492.0 468.8 L492.0 465.2 L493.0 465.2 L493.0 461.7 L494.0 461.7 L494.0 461.0 L495.0 461.0 L495.0 456.4 L496.0 456.4 L496.0 464.2 L497.0 464.2 L497.0 468.2 L498.0 468.2 L498.0 467.4 L499.0 467.4 L499.0 466.5 L500.0 466.5 L500.0 467.6 L501.0 467.6 L501.0 468.7 L502.0 468.7 L502.0 466.7 L503.0 466.7 L503.0 464.6 L504.0 464.6 L504.0 466.4 L505.0 466.4 L505.0 468.2 L506.0 468.2 L506.0 463.4 L507.0 463.4 L507.0 458.5 L508.0 458.5 L508.0 464.3 L509.0 464.3 L509.0 470.0 L510.0 470.0 L510.0 466.7 L511.0 466.7 L511.0 463.4 L512.0 463.4 L512.0 466.6 L513.0 466.6 L513.0 469.8 L514.0 469.8 L514.0 466.1 L515.0 466.1 L515.0 462.3 L516.0 462.3 L516.0 465.9 L517.0 465.9 L517.0 469.4 L518.0 469.4 L518.0 467.5 L519.0 467.5 L519.0 465.6 L520.0 465.6 L520.0 466.1 L521.0 466.1 L521.0 466.6 L522.0 466.6 L522.0 467.6 L523.0 467.6 L523.0 468.5 L524.0 468.5 L524.0 468.6 L525.0 468.6 L525.0 468.7 L526.0 468.7 L526.0 464.5 L527.0 464.5 L527.0 469.2 L528.0 469.2 L528.0 469.5 L529.0 469.5 L529.0 469.9 L530.0 469.9 L530.0 467.3 L531.0 467.3 L531.0 464.8 L532.0 464.8 L532.0 460.0 L533.0 460.0 L533.0 463.2 L534.0 463.2 L534.0 463.4 L535.0 463.4 L535.0 463.6 L536.0 463.6 L536.0 466.3 L537.0 466.3 L537.0 463.4 L538.0 463.4 L538.0 467.8 L539.0 467.8 L539.0 466.6 L540.0 466.6 L540.0 467.9 L541.0 467.9 L541.0 469.3 L542.0 469.3 L542.0 469.5 L543.0 469.5 L543.0 469.8 L544.0 469.8 L544.0 465.3 L545.0 465.3 L545.0 467.3 L546.0 467.3 L546.0 467.7 L547.0 467.7 L547.0 468.1 L548.0 468.1 L548.0 468.3 L549.0 468.3 L549.0 463.3 L550.0 463.3 L550.0 465.5 L551.0 465.5 L551.0 462.5 L552.0 462.5 L552.0 463.8 L553.0 463.8 L553.0 465.0 L554.0 465.0 L554.0 467.6 L555.0 467.6 L555.0 470.1 L556.0 470.1 L556.0 465.8 L557.0 465.8 L557.0 468.8 L558.0 468.8 L558.0 467.7 L559.0 467.7 L559.0 466.6 L560.0 466.6 L560.0 463.4 L561.0 463.4 L561.0 468.1 L562.0 468.1 L562.0 465.4 L563.0 465.4 L563.0 462.6 L564.0 462.6 L564.0 462.0 L565.0 462.0 L565.0 461.4 L566.0 461.4 L566.0 462.3 L567.0 462.3 L567.0 469.1 L568.0 469.1 L568.0 468.9 L569.0 468.9 L569.0 468.6 L570.0 468.6 L570.0 466.5 L571.0 466.5 L571.0 464.3 L572.0 464.3 L572.0 464.5 L573.0 464.5 L573.0 468.9 L574.0 468.9 L574.0 470.0 L575.0 470.0 L575.0 471.0 L576.0 471.0 L576.0 469.8 L577.0 469.8 L577.0 468.5 L578.0 468.5 L578.0 466.4 L579.0 466.4 L579.0 464.4 L580.0 464.4 L580.0 466.7 L581.0 466.7 L581.0 469.1 L582.0 469.1 L582.0 464.6 L583.0 464.6 L583.0 460.0 L584.0 460.0 L584.0 460.3 L585.0 460.3 L585.0 460.6 L586.0 460.6 L586.0 459.7 L587.0 459.7 L587.0 466.0 L588.0 466.0 L588.0 461.9 L589.0 461.9 L589.0 464.5 L590.0 464.5 L590.0 464.9 L591.0 464.9 L591.0 465.3 L592.0 465.3 L592.0 467.2 L593.0 467.2 L593.0 469.0 L594.0 469.0 L594.0 469.0 L595.0 469.0 L595.0 469.0 L596.0 469.0 L596.0 467.4 L597.0 467.4 L597.0 465.7 L598.0 465.7 L598.0 465.5 L599.0 465.5 L599.0 465.2 L600.0 465.2 L600.0 464.9 L601.0 464.9 L601.0 464.5 L602.0 464.5 L602.0 462.1 L603.0 462.1 L603.0 459.8 L604.0 459.8 L604.0 461.2 L605.0 461.2 L605.0 462.7 L606.0 462.7 L606.0 463.4 L607.0 463.4 L607.0 464.1 L608.0 464.1 L608.0 467.4 L609.0 467.4 L609.0 470.6 L610.0 470.6 L610.0 470.7 L611.0 470.7 L611.0 470.8 L612.0 470.8 L612.0 466.1 L613.0 466.1 L613.0 456.6 L614.0 456.6 L614.0 461.4 L615.0 461.4 L615.0 461.3 L616.0 461.3 L616.0 460.0 L617.0 460.0 L617.0 464.1 L618.0 464.1 L618.0 464.4 L619.0 464.4 L619.0 464.8 L620.0 464.8 L620.0 464.1 L621.0 464.1 L621.0 463.5 L622.0 463.5 L622.0 466.8 L623.0 466.8 L623.0 470.0 L624.0 470.0 L624.0 469.2 L625.0 469.2 L625.0 468.4 L626.0 468.4 L626.0 469.0 L627.0 469.0 L627.0 469.7 L628.0 469.7 L628.0 469.6 L629.0 469.6 L629.0 466.3 L630.0 466.3 L630.0 469.4 L631.0 469.4 L631.0 463.8 L632.0 463.8 L632.0 470.2 L633.0 470.2 L633.0 471.2 L634.0 471.2 L634.0 470.5 L635.0 470.5 L635.0 466.3 L636.0 466.3 L636.0 465.8 L637.0 465.8 L637.0 459.1 L638.0 459.1 L638.0 461.5 L639.0 461.5 L639.0 458.0 L640.0 458.0 L640.0 462.5 L641.0 462.5 L641.0 463.7 L642.0 463.7 L642.0 464.1 L643.0 464.1 L643.0 464.5 L644.0 464.5 L644.0 463.4 L645.0 463.4 L645.0 462.3 L646.0 462.3 L646.0 462.1 L647.0 462.1 L647.0 461.9 L648.0 461.9 L648.0 466.4 L649.0 466.4 L649.0 470.8 L650.0 470.8 L650.0 471.8 L651.0 471.8 L651.0 472.9 L652.0 472.9 L652.0 472.2 L653.0 472.2 L653.0 471.5 L654.0 471.5 L654.0 471.7 L655.0 471.7 L655.0 471.9 L656.0 471.9 L656.0 471.0 L657.0 471.0 L657.0 470.0 L658.0 470.0 L658.0 463.4 L659.0 463.4 L659.0 460.9 L660.0 460.9 L660.0 466.5 L661.0 466.5 L661.0 472.1 L662.0 472.1 L662.0 469.1 L663.0 469.1 L663.0 466.1 L664.0 466.1 L664.0 468.0 L665.0 468.0 L665.0 469.8 L666.0 469.8 L666.0 468.0 L667.0 468.0 L667.0 466.1 L668.0 466.1 L668.0 468.6 L669.0 468.6 L669.0 471.1 L670.0 471.1 L670.0 465.5 L671.0 465.5 L671.0 460.0 L672.0 460.0 L672.0 465.5 L673.0 465.5 L673.0 467.2 L674.0 467.2 L674.0 469.5 L675.0 469.5 L675.0 464.5 L676.0 464.5 L676.0 469.9 L677.0 469.9 L677.0 471.6 L678.0 471.6 L678.0 468.7 L679.0 468.7 L679.0 465.7 L680.0 465.7 L680.0 468.4 L681.0 468.4 L681.0 471.2 L682.0 471.2 L682.0 468.2 L683.0 468.2 L683.0 465.2 L684.0 465.2 L684.0 467.4 L685.0 467.4 L685.0 466.3 L686.0 466.3 L686.0 468.8 L687.0 468.8 L687.0 468.0 L688.0 468.0 L688.0 468.8 L689.0 468.8 L689.0 469.6 L690.0 469.6 L690.0 467.3 L691.0 467.3 L691.0 465.1 L692.0 465.1 L692.0 464.0 L693.0 464.0 L693.0 470.1 L694.0 470.1 L694.0 467.0 L695.0 467.0 L695.0 467.0 L696.0 467.0 L696.0 470.0 L697.0 470.0 L697.0 468.9 L698.0 468.9 L698.0 468.3 L699.0 468.3 L699.0 467.7 L700.0 467.7 L700.0 465.5 L701.0 465.5 L701.0 470.2 L702.0 470.2 L702.0 470.5 L703.0 470.5 L703.0 470.8 L704.0 470.8 L704.0 470.7 L705.0 470.7 L705.0 470.6 L706.0 470.6 L706.0 471.5 L707.0 471.5 L707.0 472.4 L708.0 472.4 L708.0 470.2 L709.0 470.2 L709.0 468.1 L710.0 468.1 L710.0 467.7 L711.0 467.7 L711.0 467.3 L712.0 467.3 L712.0 464.2 L713.0 464.2 L713.0 461.1 L714.0 461.1 L714.0 464.5 L715.0 464.5 L715.0 468.0 L716.0 468.0 L716.0 468.8 L717.0 468.8 L717.0 469.7 L718.0 469.7 L718.0 470.5 L719.0 470.5 L719.0 471.3 L720.0 471.3 L720.0 471.3 L721.0 471.3 L721.0 471.3 L722.0 471.3 L722.0 468.5 L723.0 468.5 L723.0 470.8 L724.0 470.8 L724.0 470.2 L725.0 470.2 L725.0 469.6 L726.0 469.6 L726.0 469.7 L727.0 469.7 L727.0 469.8 L728.0 469.8 L728.0 470.9 L729.0 470.9 L729.0 472.0 L730.0 472.0 L730.0 471.0 L731.0 471.0 L731.0 470.0 L732.0 470.0 L732.0 463.3 L733.0 463.3 L733.0 464.8 L734.0 464.8 L734.0 467.0 L735.0 467.0 L735.0 469.2 L736.0 469.2 L736.0 469.5 L737.0 469.5 L737.0 469.8 L738.0 469.8 L738.0 469.8 L739.0 469.8 L739.0 469.8 L740.0 469.8 L740.0 468.0 L741.0 468.0 L741.0 466.3 L742.0 466.3 L742.0 468.1 L743.0 468.1 L743.0 469.9 L744.0 469.9 L744.0 468.7 L745.0 468.7 L745.0 467.5 L746.0 467.5 L746.0 464.9 L747.0 464.9 L747.0 462.2 L748.0 462.2 L748.0 466.2 L749.0 466.2 L749.0 470.2 L750.0 470.2 L750.0 466.7 L751.0 466.7 L751.0 463.2 L752.0 463.2 L752.0 464.3 L753.0 464.3 L753.0 465.3 L754.0 465.3 L754.0 465.1 L755.0 465.1 L755.0 464.9 L756.0 464.9 L756.0 465.4 L757.0 465.4 L757.0 465.9 L758.0 465.9 L758.0 466.0 L759.0 466.0 L759.0 466.1 L760.0 466.1 L760.0 467.4 L761.0 467.4 L761.0 468.7 L762.0 468.7 L762.0 469.5 L763.0 469.5 L763.0 470.3 L764.0 470.3 L764.0 470.2 L765.0 470.2 L765.0 467.8 L766.0 467.8 L766.0 465.0 L767.0 465.0 L767.0 465.8 L768.0 465.8 L768.0 467.0 L769.0 467.0 L769.0 464.5 L770.0 464.5 L770.0 467.1 L771.0 467.1 L771.0 469.8 L772.0 469.8 L772.0 466.7 L773.0 466.7 L773.0 460.6 L774.0 460.6 L774.0 467.3 L775.0 467.3 L775.0 470.9 L776.0 470.9 L776.0 468.5 L777.0 468.5 L777.0 466.1 L778.0 466.1 L778.0 468.7 L779.0 468.7 L779.0 471.2 L780.0 471.2 L780.0 469.5 L781.0 469.5 L781.0 467.8 L782.0 467.8 L782.0 467.4 L783.0 467.4 L783.0 467.1 L784.0 467.1 L784.0 464.1 L785.0 464.1 L785.0 461.1 L786.0 461.1 L786.0 465.3 L787.0 465.3 L787.0 469.6 L788.0 469.6 L788.0 471.1 L789.0 471.1 L789.0 472.7 L790.0 472.7 L790.0 470.1 L791.0 470.1 L791.0 467.4 L792.0 467.4 L792.0 469.5 L793.0 469.5 L793.0 471.5 L794.0 471.5 L794.0 469.5 L795.0 469.5 L795.0 467.5 L796.0 467.5 L796.0 465.0 L797.0 465.0 L797.0 471.1 L798.0 471.1 L798.0 468.7 L799.0 468.7 L799.0 466.2 L800.0 466.2 L800.0 468.8 L801.0 468.8 L801.0 471.4 L802.0 471.4 L802.0 469.3 L803.0 469.3 L803.0 467.2 L804.0 467.2 L804.0 465.5 L805.0 465.5 L805.0 463.9 L806.0 463.9 L806.0 462.0 L807.0 462.0 L807.0 467.7 L808.0 467.7 L808.0 468.0 L809.0 468.0 L809.0 466.2 L810.0 466.2 L810.0 469.0 L811.0 469.0 L811.0 471.8 L812.0 471.8 L812.0 471.3 L813.0 471.3 L813.0 466.7 L814.0 466.7 L814.0 466.6 L815.0 466.6 L815.0 462.4 L816.0 462.4 L816.0 465.9 L817.0 465.9 L817.0 469.4 L818.0 469.4 L818.0 466.9 L819.0 466.9 L819.0 464.4 L820.0 464.4 L820.0 467.2 L821.0 467.2 L821.0 470.0 L822.0 470.0 L822.0 469.5 L823.0 469.5 L823.0 469.0 L824.0 469.0 L824.0 470.4 L825.0 470.4 L825.0 471.8 L826.0 471.8 L826.0 470.8 L827.0 470.8 L827.0 469.8 L828.0 469.8 L828.0 469.2 L829.0 469.2 L829.0 468.5 L830.0 468.5 L830.0 463.1 L831.0 463.1 L831.0 469.2 L832.0 469.2 L832.0 468.9 L833.0 468.9 L833.0 468.7 L834.0 468.7 L834.0 468.3 L835.0 468.3 L835.0 463.6 L836.0 463.6 L836.0 470.1 L837.0 470.1 L837.0 472.2 L838.0 472.2 L838.0 469.9 L839.0 469.9 L839.0 467.5 L840.0 467.5 L840.0 468.9 L841.0 468.9 L841.0 470.4 L842.0 470.4 L842.0 470.4 L843.0 470.4 L843.0 468.2 L844.0 468.2 L844.0 468.8 L845.0 468.8 L845.0 467.2 L846.0 467.2 L846.0 464.5 L847.0 464.5 L847.0 467.2 L848.0 467.2 L848.0 500.4 L847.0 500.4 L847.0 498.4 L846.0 498.4 L846.0 496.4 L845.0 496.4 L845.0 495.7 L844.0 495.7 L844.0 495.1 L843.0 495.1 L843.0 499.1 L842.0 499.1 L842.0 498.1 L841.0 498.1 L841.0 499.0 L840.0 499.0 L840.0 499.9 L839.0 499.9 L839.0 502.5 L838.0 502.5 L838.0 508.9 L837.0 508.9 L837.0 500.5 L836.0 500.5 L836.0 496.0 L835.0 496.0 L835.0 495.3 L834.0 495.3 L834.0 494.6 L833.0 494.6 L833.0 494.3 L832.0 494.3 L832.0 494.1 L831.0 494.1 L831.0 497.2 L830.0 497.2 L830.0 500.3 L829.0 500.3 L829.0 501.6 L828.0 501.6 L828.0 502.9 L827.0 502.9 L827.0 501.5 L826.0 501.5 L826.0 500.1 L825.0 500.1 L825.0 498.3 L824.0 498.3 L824.0 496.4 L823.0 496.4 L823.0 499.4 L822.0 499.4 L822.0 502.5 L821.0 502.5 L821.0 498.9 L820.0 498.9 L820.0 499.4 L819.0 499.4 L819.0 499.9 L818.0 499.9 L818.0 502.2 L817.0 502.2 L817.0 501.6 L816.0 501.6 L816.0 494.8 L815.0 494.8 L815.0 495.3 L814.0 495.3 L814.0 495.7 L813.0 495.7 L813.0 497.6 L812.0 497.6 L812.0 499.5 L811.0 499.5 L811.0 501.8 L810.0 501.8 L810.0 498.9 L809.0 498.9 L809.0 497.1 L808.0 497.1 L808.0 497.7 L807.0 497.7 L807.0 498.2 L806.0 498.2 L806.0 498.7 L805.0 498.7 L805.0 501.0 L804.0 501.0 L804.0 507.0 L803.0 507.0 L803.0 503.1 L802.0 503.1 L802.0 502.8 L801.0 502.8 L801.0 500.2 L800.0 500.2 L800.0 497.5 L799.0 497.5 L799.0 496.2 L798.0 496.2 L798.0 495.0 L797.0 495.0 L797.0 497.0 L796.0 497.0 L796.0 498.9 L795.0 498.9 L795.0 496.8 L794.0 496.8 L794.0 494.6 L793.0 494.6 L793.0 494.8 L792.0 494.8 L792.0 494.9 L791.0 494.9 L791.0 494.5 L790.0 494.5 L790.0 494.1 L789.0 494.1 L789.0 493.7 L788.0 493.7 L788.0 493.4 L787.0 493.4 L787.0 494.5 L786.0 494.5 L786.0 495.7 L785.0 495.7 L785.0 499.6 L784.0 499.6 L784.0 493.8 L783.0 493.8 L783.0 494.9 L782.0 494.9 L782.0 495.9 L781.0 495.9 L781.0 498.2 L780.0 498.2 L780.0 495.9 L779.0 495.9 L779.0 497.5 L778.0 497.5 L778.0 501.0 L777.0 501.0 L777.0 497.4 L776.0 497.4 L776.0 493.7 L775.0 493.7 L775.0 494.2 L774.0 494.2 L774.0 494.8 L773.0 494.8 L773.0 494.9 L772.0 494.9 L772.0 494.9 L771.0 494.9 L771.0 494.1 L770.0 494.1 L770.0 493.3 L769.0 493.3 L769.0 496.3 L768.0 496.3 L768.0 499.3 L767.0 499.3 L767.0 495.8 L766.0 495.8 L766.0 492.4 L765.0 492.4 L765.0 494.0 L764.0 494.0 L764.0 500.2 L763.0 500.2 L763.0 494.9 L762.0 494.9 L762.0 494.1 L761.0 494.1 L761.0 493.3 L760.0 493.3 L760.0 492.5 L759.0 492.5 L759.0 492.4 L758.0 492.4 L758.0 492.3 L757.0 492.3 L757.0 496.2 L756.0 496.2 L756.0 500.0 L755.0 500.0 L755.0 496.4 L754.0 496.4 L754.0 492.9 L753.0 492.9 L753.0 496.3 L752.0 496.3 L752.0 499.8 L751.0 499.8 L751.0 497.1 L750.0 497.1 L750.0 494.5 L749.0 494.5 L749.0 497.0 L748.0 497.0 L748.0 499.6 L747.0 499.6 L747.0 497.8 L746.0 497.8 L746.0 501.9 L745.0 501.9 L745.0 497.8 L744.0 497.8 L744.0 499.6 L743.0 499.6 L743.0 500.1 L742.0 500.1 L742.0 500.7 L741.0 500.7 L741.0 497.5 L740.0 497.5 L740.0 494.3 L739.0 494.3 L739.0 495.3 L738.0 495.3 L738.0 496.3 L737.0 496.3 L737.0 495.8 L736.0 495.8 L736.0 498.4 L735.0 498.4 L735.0 495.7 L734.0 495.7 L734.0 496.1 L733.0 496.1 L733.0 496.0 L732.0 496.0 L732.0 495.8 L731.0 495.8 L731.0 500.5 L730.0 500.5 L730.0 505.1 L729.0 505.1 L729.0 503.8 L728.0 503.8 L728.0 502.5 L727.0 502.5 L727.0 498.3 L726.0 498.3 L726.0 494.2 L725.0 494.2 L725.0 499.3 L724.0 499.3 L724.0 493.4 L723.0 493.4 L723.0 496.2 L722.0 496.2 L722.0 503.5 L721.0 503.5 L721.0 496.6 L720.0 496.6 L720.0 494.1 L719.0 494.1 L719.0 495.2 L718.0 495.2 L718.0 496.4 L717.0 496.4 L717.0 497.1 L716.0 497.1 L716.0 497.9 L715.0 497.9 L715.0 498.1 L714.0 498.1 L714.0 498.4 L713.0 498.4 L713.0 496.4 L712.0 496.4 L712.0 494.5 L711.0 494.5 L711.0 498.6 L710.0 498.6 L710.0 497.0 L709.0 497.0 L709.0 496.7 L708.0 496.7 L708.0 498.8 L707.0 498.8 L707.0 496.2 L706.0 496.2 L706.0 496.0 L705.0 496.0 L705.0 494.9 L704.0 494.9 L704.0 495.9 L703.0 495.9 L703.0 496.3 L702.0 496.3 L702.0 499.0 L701.0 499.0 L701.0 499.7 L700.0 499.7 L700.0 496.1 L699.0 496.1 L699.0 498.4 L698.0 498.4 L698.0 505.9 L697.0 505.9 L697.0 500.0 L696.0 500.0 L696.0 499.4 L695.0 499.4 L695.0 496.5 L694.0 496.5 L694.0 493.6 L693.0 493.6 L693.0 494.8 L692.0 494.8 L692.0 496.0 L691.0 496.0 L691.0 499.2 L690.0 499.2 L690.0 502.3 L689.0 502.3 L689.0 499.0 L688.0 499.0 L688.0 501.1 L687.0 501.1 L687.0 500.6 L686.0 500.6 L686.0 500.0 L685.0 500.0 L685.0 500.7 L684.0 500.7 L684.0 501.4 L683.0 501.4 L683.0 503.2 L682.0 503.2 L682.0 505.1 L681.0 505.1 L681.0 502.6 L680.0 502.6 L680.0 500.2 L679.0 500.2 L679.0 497.2 L678.0 497.2 L678.0 494.2 L677.0 494.2 L677.0 497.3 L676.0 497.3 L676.0 500.4 L675.0 500.4 L675.0 499.0 L674.0 499.0 L674.0 493.3 L673.0 493.3 L673.0 494.5 L672.0 494.5 L672.0 499.6 L671.0 499.6 L671.0 495.0 L670.0 495.0 L670.0 494.4 L669.0 494.4 L669.0 494.8 L668.0 494.8 L668.0 495.3 L667.0 495.3 L667.0 497.7 L666.0 497.7 L666.0 500.1 L665.0 500.1 L665.0 500.4 L664.0 500.4 L664.0 500.7 L663.0 500.7 L663.0 499.1 L662.0 499.1 L662.0 497.5 L661.0 497.5 L661.0 500.1 L660.0 500.1 L660.0 497.2 L659.0 497.2 L659.0 497.4 L658.0 497.4 L658.0 497.6 L657.0 497.6 L657.0 497.4 L656.0 497.4 L656.0 497.2 L655.0 497.2 L655.0 497.2 L654.0 497.2 L654.0 497.2 L653.0 497.2 L653.0 495.7 L652.0 495.7 L652.0 494.3 L651.0 494.3 L651.0 498.7 L650.0 498.7 L650.0 503.2 L649.0 503.2 L649.0 503.1 L648.0 503.1 L648.0 494.5 L647.0 494.5 L647.0 495.3 L646.0 495.3 L646.0 496.2 L645.0 496.2 L645.0 494.7 L644.0 494.7 L644.0 493.2 L643.0 493.2 L643.0 496.5 L642.0 496.5 L642.0 499.9 L641.0 499.9 L641.0 497.6 L640.0 497.6 L640.0 495.3 L639.0 495.3 L639.0 500.0 L638.0 500.0 L638.0 499.5 L637.0 499.5 L637.0 497.7 L636.0 497.7 L636.0 496.0 L635.0 496.0 L635.0 497.2 L634.0 497.2 L634.0 494.1 L633.0 494.1 L633.0 493.9 L632.0 493.9 L632.0 493.6 L631.0 493.6 L631.0 493.9 L630.0 493.9 L630.0 498.8 L629.0 498.8 L629.0 494.5 L628.0 494.5 L628.0 494.7 L627.0 494.7 L627.0 495.7 L626.0 495.7 L626.0 501.7 L625.0 501.7 L625.0 496.7 L624.0 496.7 L624.0 496.7 L623.0 496.7 L623.0 503.7 L622.0 503.7 L622.0 504.9 L621.0 504.9 L621.0 500.3 L620.0 500.3 L620.0 495.8 L619.0 495.8 L619.0 495.3 L618.0 495.3 L618.0 494.9 L617.0 494.9 L617.0 495.5 L616.0 495.5 L616.0 496.0 L615.0 496.0 L615.0 500.0 L614.0 500.0 L614.0 503.9 L613.0 503.9 L613.0 501.0 L612.0 501.0 L612.0 498.2 L611.0 498.2 L611.0 496.9 L610.0 496.9 L610.0 495.7 L609.0 495.7 L609.0 494.9 L608.0 494.9 L608.0 494.0 L607.0 494.0 L607.0 498.0 L606.0 498.0 L606.0 493.5 L605.0 493.5 L605.0 498.9 L604.0 498.9 L604.0 506.9 L603.0 506.9 L603.0 505.5 L602.0 505.5 L602.0 494.8 L601.0 494.8 L601.0 496.1 L600.0 496.1 L600.0 497.4 L599.0 497.4 L599.0 497.4 L598.0 497.4 L598.0 497.4 L597.0 497.4 L597.0 495.5 L596.0 495.5 L596.0 493.6 L595.0 493.6 L595.0 500.5 L594.0 500.5 L594.0 501.4 L593.0 501.4 L593.0 498.0 L592.0 498.0 L592.0 494.5 L591.0 494.5 L591.0 494.3 L590.0 494.3 L590.0 494.1 L589.0 494.1 L589.0 494.1 L588.0 494.1 L588.0 494.2 L587.0 494.2 L587.0 493.9 L586.0 493.9 L586.0 493.6 L585.0 493.6 L585.0 495.0 L584.0 495.0 L584.0 496.5 L583.0 496.5 L583.0 496.0 L582.0 496.0 L582.0 495.4 L581.0 495.4 L581.0 498.8 L580.0 498.8 L580.0 502.2 L579.0 502.2 L579.0 503.1 L578.0 503.1 L578.0 496.9 L577.0 496.9 L577.0 495.9 L576.0 495.9 L576.0 498.2 L575.0 498.2 L575.0 497.2 L574.0 497.2 L574.0 496.1 L573.0 496.1 L573.0 498.9 L572.0 498.9 L572.0 501.7 L571.0 501.7 L571.0 499.1 L570.0 499.1 L570.0 496.6 L569.0 496.6 L569.0 495.3 L568.0 495.3 L568.0 494.0 L567.0 494.0 L567.0 495.2 L566.0 495.2 L566.0 496.4 L565.0 496.4 L565.0 496.4 L564.0 496.4 L564.0 496.4 L563.0 496.4 L563.0 496.1 L562.0 496.1 L562.0 495.8 L561.0 495.8 L561.0 496.4 L560.0 496.4 L560.0 497.0 L559.0 497.0 L559.0 504.8 L558.0 504.8 L558.0 501.9 L557.0 501.9 L557.0 499.0 L556.0 499.0 L556.0 499.2 L555.0 499.2 L555.0 496.4 L554.0 496.4 L554.0 496.9 L553.0 496.9 L553.0 496.6 L552.0 496.6 L552.0 496.4 L551.0 496.4 L551.0 498.3 L550.0 498.3 L550.0 500.2 L549.0 500.2 L549.0 498.4 L548.0 498.4 L548.0 496.5 L547.0 496.5 L547.0 497.9 L546.0 497.9 L546.0 499.4 L545.0 499.4 L545.0 496.7 L544.0 496.7 L544.0 494.1 L543.0 494.1 L543.0 495.1 L542.0 495.1 L542.0 500.9 L541.0 500.9 L541.0 497.2 L540.0 497.2 L540.0 493.5 L539.0 493.5 L539.0 495.4 L538.0 495.4 L538.0 497.3 L537.0 497.3 L537.0 495.2 L536.0 495.2 L536.0 495.2 L535.0 495.2 L535.0 494.1 L534.0 494.1 L534.0 495.2 L533.0 495.2 L533.0 501.7 L532.0 501.7 L532.0 502.1 L531.0 502.1 L531.0 495.4 L530.0 495.4 L530.0 493.5 L529.0 493.5 L529.0 497.5 L528.0 497.5 L528.0 501.5 L527.0 501.5 L527.0 500.7 L526.0 500.7 L526.0 499.8 L525.0 499.8 L525.0 496.1 L524.0 496.1 L524.0 492.4 L523.0 492.4 L523.0 492.7 L522.0 492.7 L522.0 492.9 L521.0 492.9 L521.0 493.3 L520.0 493.3 L520.0 493.6 L519.0 493.6 L519.0 493.8 L518.0 493.8 L518.0 494.0 L517.0 494.0 L517.0 495.2 L516.0 495.2 L516.0 496.3 L515.0 496.3 L515.0 495.5 L514.0 495.5 L514.0 494.6 L513.0 494.6 L513.0 494.7 L512.0 494.7 L512.0 494.8 L511.0 494.8 L511.0 496.3 L510.0 496.3 L510.0 497.8 L509.0 497.8 L509.0 500.3 L508.0 500.3 L508.0 502.8 L507.0 502.8 L507.0 503.2 L506.0 503.2 L506.0 503.6 L505.0 503.6 L505.0 499.5 L504.0 499.5 L504.0 495.4 L503.0 495.4 L503.0 495.9 L502.0 495.9 L502.0 496.5 L501.0 496.5 L501.0 495.1 L500.0 495.1 L500.0 493.8 L499.0 493.8 L499.0 497.3 L498.0 497.3 L498.0 500.9 L497.0 500.9 L497.0 497.7 L496.0 497.7 L496.0 499.8 L495.0 499.8 L495.0 495.2 L494.0 495.2 L494.0 495.8 L493.0 495.8 L493.0 498.0 L492.0 498.0 L492.0 500.2 L491.0 500.2 L491.0 497.2 L490.0 497.2 L490.0 496.5 L489.0 496.5 L489.0 497.4 L488.0 497.4 L488.0 500.6 L487.0 500.6 L487.0 502.1 L486.0 502.1 L486.0 503.6 L485.0 503.6 L485.0 500.3 L484.0 500.3 L484.0 497.1 L483.0 497.1 L483.0 498.1 L482.0 498.1 L482.0 502.6 L481.0 502.6 L481.0 496.8 L480.0 496.8 L480.0 494.5 L479.0 494.5 L479.0 496.5 L478.0 496.5 L478.0 498.4 L477.0 498.4 L477.0 497.1 L476.0 497.1 L476.0 495.9 L475.0 495.9 L475.0 496.2 L474.0 496.2 L474.0 499.6 L473.0 499.6 L473.0 497.8 L472.0 497.8 L472.0 499.1 L471.0 499.1 L471.0 497.9 L470.0 497.9 L470.0 496.7 L469.0 496.7 L469.0 499.6 L468.0 499.6 L468.0 502.6 L467.0 502.6 L467.0 500.1 L466.0 500.1 L466.0 497.5 L465.0 497.5 L465.0 498.0 L464.0 498.0 L464.0 498.5 L463.0 498.5 L463.0 497.9 L462.0 497.9 L462.0 497.2 L461.0 497.2 L461.0 498.6 L460.0 498.6 L460.0 500.1 L459.0 500.1 L459.0 499.2 L458.0 499.2 L458.0 498.3 L457.0 498.3 L457.0 496.6 L456.0 496.6 L456.0 495.0 L455.0 495.0 L455.0 496.7 L454.0 496.7 L454.0 498.3 L453.0 498.3 L453.0 497.2 L452.0 497.2 L452.0 496.1 L451.0 496.1 L451.0 499.3 L450.0 499.3 L450.0 502.6 L449.0 502.6 L449.0 500.3 L448.0 500.3 L448.0 498.0 L447.0 498.0 L447.0 502.2 L446.0 502.2 L446.0 506.5 L445.0 506.5 L445.0 501.6 L444.0 501.6 L444.0 496.8 L443.0 496.8 L443.0 496.3 L442.0 496.3 L442.0 495.8 L441.0 495.8 L441.0 498.9 L440.0 498.9 L440.0 502.0 L439.0 502.0 L439.0 500.4 L438.0 500.4 L438.0 498.9 L437.0 498.9 L437.0 497.0 L436.0 497.0 L436.0 495.1 L435.0 495.1 L435.0 500.5 L434.0 500.5 L434.0 497.3 L433.0 497.3 L433.0 498.6 L432.0 498.6 L432.0 500.0 L431.0 500.0 L431.0 497.5 L430.0 497.5 L430.0 495.0 L429.0 495.0 L429.0 496.1 L428.0 496.1 L428.0 497.2 L427.0 497.2 L427.0 497.9 L426.0 497.9 L426.0 502.3 L425.0 502.3 L425.0 500.7 L424.0 500.7 L424.0 502.8 L423.0 502.8 L423.0 498.9 L422.0 498.9 L422.0 495.0 L421.0 495.0 L421.0 497.4 L420.0 497.4 L420.0 499.7 L419.0 499.7 L419.0 501.6 L418.0 501.6 L418.0 503.4 L417.0 503.4 L417.0 501.9 L416.0 501.9 L416.0 500.4 L415.0 500.4 L415.0 499.0 L414.0 499.0 L414.0 497.5 L413.0 497.5 L413.0 498.2 L412.0 498.2 L412.0 498.8 L411.0 498.8 L411.0 498.3 L410.0 498.3 L410.0 497.8 L409.0 497.8 L409.0 498.8 L408.0 498.8 L408.0 499.7 L407.0 499.7 L407.0 498.3 L406.0 498.3 L406.0 496.9 L405.0 496.9 L405.0 496.3 L404.0 496.3 L404.0 495.8 L403.0 495.8 L403.0 500.5 L402.0 500.5 L402.0 505.1 L401.0 505.1 L401.0 502.4 L400.0 502.4 L400.0 499.7 L399.0 499.7 L399.0 497.3 L398.0 497.3 L398.0 494.8 L397.0 494.8 L397.0 495.8 L396.0 495.8 L396.0 496.8 L395.0 496.8 L395.0 498.9 L394.0 498.9 L394.0 501.0 L393.0 501.0 L393.0 499.1 L392.0 499.1 L392.0 497.1 L391.0 497.1 L391.0 496.1 L390.0 496.1 L390.0 495.2 L389.0 495.2 L389.0 497.3 L388.0 497.3 L388.0 499.4 L387.0 499.4 L387.0 498.2 L386.0 498.2 L386.0 497.0 L385.0 497.0 L385.0 499.6 L384.0 499.6 L384.0 502.2 L383.0 502.2 L383.0 502.9 L382.0 502.9 L382.0 497.2 L381.0 497.2 L381.0 497.9 L380.0 497.9 L380.0 498.5 L379.0 498.5 L379.0 497.0 L378.0 497.0 L378.0 495.4 L377.0 495.4 L377.0 501.5 L376.0 501.5 L376.0 495.9 L375.0 495.9 L375.0 496.7 L374.0 496.7 L374.0 499.8 L373.0 499.8 L373.0 503.1 L372.0 503.1 L372.0 500.9 L371.0 500.9 L371.0 505.2 L370.0 505.2 L370.0 499.7 L369.0 499.7 L369.0 498.9 L368.0 498.9 L368.0 498.0 L367.0 498.0 L367.0 498.4 L366.0 498.4 L366.0 498.7 L365.0 498.7 L365.0 499.2 L364.0 499.2 L364.0 499.7 L363.0 499.7 L363.0 500.4 L362.0 500.4 L362.0 501.0 L361.0 501.0 L361.0 499.8 L360.0 499.8 L360.0 498.6 L359.0 498.6 L359.0 504.7 L358.0 504.7 L358.0 506.3 L357.0 506.3 L357.0 502.2 L356.0 502.2 L356.0 501.9 L355.0 501.9 L355.0 498.3 L354.0 498.3 L354.0 498.6 L353.0 498.6 L353.0 501.6 L352.0 501.6 L352.0 504.5 L351.0 504.5 L351.0 502.3 L350.0 502.3 L350.0 500.0 L349.0 500.0 L349.0 498.5 L348.0 498.5 L348.0 497.0 L347.0 497.0 L347.0 499.0 L346.0 499.0 L346.0 500.9 L345.0 500.9 L345.0 501.8 L344.0 501.8 L344.0 497.4 L343.0 497.4 L343.0 499.2 L342.0 499.2 L342.0 501.0 L341.0 501.0 L341.0 499.0 L340.0 499.0 L340.0 496.9 L339.0 496.9 L339.0 498.9 L338.0 498.9 L338.0 500.9 L337.0 500.9 L337.0 500.2 L336.0 500.2 L336.0 499.5 L335.0 499.5 L335.0 500.5 L334.0 500.5 L334.0 501.6 L333.0 501.6 L333.0 499.5 L332.0 499.5 L332.0 497.4 L331.0 497.4 L331.0 498.8 L330.0 498.8 L330.0 500.2 L329.0 500.2 L329.0 499.6 L328.0 499.6 L328.0 499.0 L327.0 499.0 L327.0 502.0 L326.0 502.0 L326.0 504.9 L325.0 504.9 L325.0 500.9 L324.0 500.9 L324.0 496.9 L323.0 496.9 L323.0 497.2 L322.0 497.2 L322.0 497.4 L321.0 497.4 L321.0 503.4 L320.0 503.4 L320.0 505.0 L319.0 505.0 L319.0 501.8 L318.0 501.8 L318.0 498.6 L317.0 498.6 L317.0 501.4 L316.0 501.4 L316.0 504.1 L315.0 504.1 L315.0 500.4 L314.0 500.4 L314.0 496.8 L313.0 496.8 L313.0 496.3 L312.0 496.3 L312.0 501.2 L311.0 501.2 L311.0 496.1 L310.0 496.1 L310.0 496.4 L309.0 496.4 L309.0 497.6 L308.0 497.6 L308.0 498.7 L307.0 498.7 L307.0 499.6 L306.0 499.6 L306.0 500.5 L305.0 500.5 L305.0 498.6 L304.0 498.6 L304.0 496.7 L303.0 496.7 L303.0 496.8 L302.0 496.8 L302.0 497.0 L301.0 497.0 L301.0 498.9 L300.0 498.9 L300.0 500.9 L299.0 500.9 L299.0 499.0 L298.0 499.0 L298.0 497.1 L297.0 497.1 L297.0 497.6 L296.0 497.6 L296.0 498.2 L295.0 498.2 L295.0 499.2 L294.0 499.2 L294.0 500.3 L293.0 500.3 L293.0 499.8 L292.0 499.8 L292.0 499.3 L291.0 499.3 L291.0 500.7 L290.0 500.7 L290.0 502.1 L289.0 502.1 L289.0 501.2 L288.0 501.2 L288.0 500.4 L287.0 500.4 L287.0 501.8 L286.0 501.8 L286.0 497.9 L285.0 497.9 L285.0 498.4 L284.0 498.4 L284.0 498.9 L283.0 498.9 L283.0 498.4 L282.0 498.4 L282.0 497.9 L281.0 497.9 L281.0 497.5 L280.0 497.5 L280.0 497.2 L279.0 497.2 L279.0 497.1 L278.0 497.1 L278.0 496.9 L277.0 496.9 L277.0 505.5 L276.0 505.5 L276.0 503.1 L275.0 503.1 L275.0 503.7 L274.0 503.7 L274.0 504.3 L273.0 504.3 L273.0 502.7 L272.0 502.7 L272.0 501.1 L271.0 501.1 L271.0 499.7 L270.0 499.7 L270.0 498.3 L269.0 498.3 L269.0 498.8 L268.0 498.8 L268.0 499.4 L267.0 499.4 L267.0 505.4 L266.0 505.4 L266.0 504.3 L265.0 504.3 Z" fill="#cbccdb" clip-path="url(#c1)"/>
<path d="M265.0 550.4 L266.0 550.4 L266.0 553.7 L267.0 553.7 L267.0 557.1 L268.0 557.1 L268.0 553.6 L269.0 553.6 L269.0 561.6 L270.0 561.6 L270.0 561.2 L271.0 561.2 L271.0 560.7 L272.0 560.7 L272.0 560.5 L273.0 560.5 L273.0 560.3 L274.0 560.3 L274.0 560.3 L275.0 560.3 L275.0 560.3 L276.0 560.3 L276.0 560.3 L277.0 560.3 L277.0 560.3 L278.0 560.3 L278.0 555.7 L279.0 555.7 L279.0 556.9 L280.0 556.9 L280.0 558.4 L281.0 558.4 L281.0 559.8 L282.0 559.8 L282.0 558.1 L283.0 558.1 L283.0 556.4 L284.0 556.4 L284.0 558.8 L285.0 558.8 L285.0 561.1 L286.0 561.1 L286.0 559.2 L287.0 559.2 L287.0 557.3 L288.0 557.3 L288.0 559.5 L289.0 559.5 L289.0 561.8 L290.0 561.8 L290.0 560.0 L291.0 560.0 L291.0 558.3 L292.0 558.3 L292.0 560.6 L293.0 560.6 L293.0 562.8 L294.0 562.8 L294.0 559.6 L295.0 559.6 L295.0 556.4 L296.0 556.4 L296.0 559.4 L297.0 559.4 L297.0 559.8 L298.0 559.8 L298.0 556.9 L299.0 556.9 L299.0 557.9 L300.0 557.9 L300.0 559.5 L301.0 559.5 L301.0 561.1 L302.0 561.1 L302.0 560.1 L303.0 560.1 L303.0 559.1 L304.0 559.1 L304.0 556.3 L305.0 556.3 L305.0 553.4 L306.0 553.4 L306.0 556.5 L307.0 556.5 L307.0 556.6 L308.0 556.6 L308.0 561.6 L309.0 561.6 L309.0 559.4 L310.0 559.4 L310.0 559.7 L311.0 559.7 L311.0 555.8 L312.0 555.8 L312.0 550.4 L313.0 550.4 L313.0 553.0 L314.0 553.0 L314.0 555.3 L315.0 555.3 L315.0 557.6 L316.0 557.6 L316.0 559.4 L317.0 559.4 L317.0 555.6 L318.0 555.6 L318.0 561.5 L319.0 561.5 L319.0 561.7 L320.0 561.7 L320.0 557.6 L321.0 557.6 L321.0 553.5 L322.0 553.5 L322.0 557.6 L323.0 557.6 L323.0 561.8 L324.0 561.8 L324.0 559.8 L325.0 559.8 L325.0 557.8 L326.0 557.8 L326.0 555.3 L327.0 555.3 L327.0 552.9 L328.0 552.9 L328.0 552.1 L329.0 552.1 L329.0 549.2 L330.0 549.2 L330.0 554.2 L331.0 554.2 L331.0 557.0 L332.0 557.0 L332.0 556.5 L333.0 556.5 L333.0 555.9 L334.0 555.9 L334.0 558.3 L335.0 558.3 L335.0 560.8 L336.0 560.8 L336.0 558.5 L337.0 558.5 L337.0 556.2 L338.0 556.2 L338.0 557.8 L339.0 557.8 L339.0 559.4 L340.0 559.4 L340.0 557.2 L341.0 557.2 L341.0 554.9 L342.0 554.9 L342.0 554.6 L343.0 554.6 L343.0 554.2 L344.0 554.2 L344.0 557.7 L345.0 557.7 L345.0 561.2 L346.0 561.2 L346.0 560.8 L347.0 560.8 L347.0 560.3 L348.0 560.3 L348.0 560.4 L349.0 560.4 L349.0 560.4 L350.0 560.4 L350.0 559.4 L351.0 559.4 L351.0 558.4 L352.0 558.4 L352.0 557.9 L353.0 557.9 L353.0 557.5 L354.0 557.5 L354.0 559.5 L355.0 559.5 L355.0 561.5 L356.0 561.5 L356.0 560.3 L357.0 560.3 L357.0 559.2 L358.0 559.2 L358.0 557.5 L359.0 557.5 L359.0 555.9 L360.0 555.9 L360.0 554.9 L361.0 554.9 L361.0 553.8 L362.0 553.8 L362.0 549.6 L363.0 549.6 L363.0 552.7 L364.0 552.7 L364.0 555.5 L365.0 555.5 L365.0 555.2 L366.0 555.2 L366.0 557.6 L367.0 557.6 L367.0 560.1 L368.0 560.1 L368.0 556.3 L369.0 556.3 L369.0 552.4 L370.0 552.4 L370.0 555.6 L371.0 555.6 L371.0 555.8 L372.0 555.8 L372.0 554.6 L373.0 554.6 L373.0 557.1 L374.0 557.1 L374.0 559.1 L375.0 559.1 L375.0 555.8 L376.0 555.8 L376.0 558.8 L377.0 558.8 L377.0 556.6 L378.0 556.6 L378.0 559.3 L379.0 559.3 L379.0 562.0 L380.0 562.0 L380.0 560.7 L381.0 560.7 L381.0 556.2 L382.0 556.2 L382.0 558.8 L383.0 558.8 L383.0 558.1 L384.0 558.1 L384.0 558.3 L385.0 558.3 L385.0 558.5 L386.0 558.5 L386.0 557.0 L387.0 557.0 L387.0 560.6 L388.0 560.6 L388.0 559.5 L389.0 559.5 L389.0 558.3 L390.0 558.3 L390.0 559.0 L391.0 559.0 L391.0 559.6 L392.0 559.6 L392.0 559.3 L393.0 559.3 L393.0 559.0 L394.0 559.0 L394.0 558.8 L395.0 558.8 L395.0 558.6 L396.0 558.6 L396.0 560.1 L397.0 560.1 L397.0 561.5 L398.0 561.5 L398.0 560.2 L399.0 560.2 L399.0 558.9 L400.0 558.9 L400.0 554.4 L401.0 554.4 L401.0 555.7 L402.0 555.7 L402.0 555.5 L403.0 555.5 L403.0 555.3 L404.0 555.3 L404.0 558.0 L405.0 558.0 L405.0 560.7 L406.0 560.7 L406.0 559.0 L407.0 559.0 L407.0 557.2 L408.0 557.2 L408.0 558.4 L409.0 558.4 L409.0 559.5 L410.0 559.5 L410.0 557.9 L411.0 557.9 L411.0 556.4 L412.0 556.4 L412.0 555.8 L413.0 555.8 L413.0 555.3 L414.0 555.3 L414.0 556.7 L415.0 556.7 L415.0 558.2 L416.0 558.2 L416.0 553.4 L417.0 553.4 L417.0 552.8 L418.0 552.8 L418.0 553.4 L419.0 553.4 L419.0 554.1 L420.0 554.1 L420.0 556.5 L421.0 556.5 L421.0 558.9 L422.0 558.9 L422.0 559.7 L423.0 559.7 L423.0 560.4 L424.0 560.4 L424.0 555.3 L425.0 555.3 L425.0 560.1 L426.0 560.1 L426.0 557.8 L427.0 557.8 L427.0 555.5 L428.0 555.5 L428.0 557.9 L429.0 557.9 L429.0 560.3 L430.0 560.3 L430.0 560.5 L431.0 560.5 L431.0 560.6 L432.0 560.6 L432.0 557.1 L433.0 557.1 L433.0 553.5 L434.0 553.5 L434.0 554.6 L435.0 554.6 L435.0 555.7 L436.0 555.7 L436.0 552.3 L437.0 552.3 L437.0 548.9 L438.0 548.9 L438.0 554.7 L439.0 554.7 L439.0 560.6 L440.0 560.6 L440.0 560.0 L441.0 560.0 L441.0 559.5 L442.0 559.5 L442.0 559.7 L443.0 559.7 L443.0 559.9 L444.0 559.9 L444.0 552.6 L445.0 552.6 L445.0 554.5 L446.0 554.5 L446.0 557.3 L447.0 557.3 L447.0 560.2 L448.0 560.2 L448.0 559.5 L449.0 559.5 L449.0 558.7 L450.0 558.7 L450.0 559.6 L451.0 559.6 L451.0 560.4 L452.0 560.4 L452.0 560.5 L453.0 560.5 L453.0 560.7 L454.0 560.7 L454.0 557.8 L455.0 557.8 L455.0 558.9 L456.0 558.9 L456.0 557.1 L457.0 557.1 L457.0 555.2 L458.0 555.2 L458.0 556.5 L459.0 556.5 L459.0 557.7 L460.0 557.7 L460.0 558.7 L461.0 558.7 L461.0 559.6 L462.0 559.6 L462.0 558.1 L463.0 558.1 L463.0 556.6 L464.0 556.6 L464.0 557.4 L465.0 557.4 L465.0 558.1 L466.0 558.1 L466.0 555.4 L467.0 555.4 L467.0 552.6 L468.0 552.6 L468.0 551.5 L469.0 551.5 L469.0 550.3 L470.0 550.3 L470.0 544.4 L471.0 544.4 L471.0 549.3 L472.0 549.3 L472.0 553.5 L473.0 553.5 L473.0 557.8 L474.0 557.8 L474.0 556.7 L475.0 556.7 L475.0 555.6 L476.0 555.6 L476.0 555.8 L477.0 555.8 L477.0 556.0 L478.0 556.0 L478.0 555.1 L479.0 555.1 L479.0 549.5 L480.0 549.5 L480.0 555.8 L481.0 555.8 L481.0 555.2 L482.0 555.2 L482.0 557.5 L483.0 557.5 L483.0 557.6 L484.0 557.6 L484.0 553.2 L485.0 553.2 L485.0 555.3 L486.0 555.3 L486.0 558.9 L487.0 558.9 L487.0 557.4 L488.0 557.4 L488.0 557.8 L489.0 557.8 L489.0 558.2 L490.0 558.2 L490.0 556.6 L491.0 556.6 L491.0 555.0 L492.0 555.0 L492.0 555.9 L493.0 555.9 L493.0 556.7 L494.0 556.7 L494.0 557.7 L495.0 557.7 L495.0 558.8 L496.0 558.8 L496.0 555.1 L497.0 555.1 L497.0 548.8 L498.0 548.8 L498.0 555.5 L499.0 555.5 L499.0 559.7 L500.0 559.7 L500.0 556.8 L501.0 556.8 L501.0 554.0 L502.0 554.0 L502.0 548.5 L503.0 548.5 L503.0 554.4 L504.0 554.4 L504.0 556.9 L505.0 556.9 L505.0 559.4 L506.0 559.4 L506.0 557.6 L507.0 557.6 L507.0 555.8 L508.0 555.8 L508.0 555.6 L509.0 555.6 L509.0 555.4 L510.0 555.4 L510.0 554.5 L511.0 554.5 L511.0 553.7 L512.0 553.7 L512.0 555.0 L513.0 555.0 L513.0 556.2 L514.0 556.2 L514.0 555.3 L515.0 555.3 L515.0 554.4 L516.0 554.4 L516.0 553.6 L517.0 553.6 L517.0 547.4 L518.0 547.4 L518.0 556.4 L519.0 556.4 L519.0 560.1 L520.0 560.1 L520.0 555.0 L521.0 555.0 L521.0 549.8 L522.0 549.8 L522.0 554.9 L523.0 554.9 L523.0 559.9 L524.0 559.9 L524.0 560.1 L525.0 560.1 L525.0 560.3 L526.0 560.3 L526.0 560.5 L527.0 560.5 L527.0 558.4 L528.0 558.4 L528.0 555.2 L529.0 555.2 L529.0 544.8 L530.0 544.8 L530.0 554.3 L531.0 554.3 L531.0 558.8 L532.0 558.8 L532.0 557.2 L533.0 557.2 L533.0 555.5 L534.0 555.5 L534.0 554.0 L535.0 554.0 L535.0 552.6 L536.0 552.6 L536.0 555.4 L537.0 555.4 L537.0 552.3 L538.0 552.3 L538.0 559.0 L539.0 559.0 L539.0 559.7 L540.0 559.7 L540.0 557.9 L541.0 557.9 L541.0 553.7 L542.0 553.7 L542.0 557.3 L543.0 557.3 L543.0 558.5 L544.0 558.5 L544.0 554.0 L545.0 554.0 L545.0 549.6 L546.0 549.6 L546.0 552.4 L547.0 552.4 L547.0 555.2 L548.0 555.2 L548.0 557.1 L549.0 557.1 L549.0 559.1 L550.0 559.1 L550.0 556.5 L551.0 556.5 L551.0 554.0 L552.0 554.0 L552.0 553.9 L553.0 553.9 L553.0 549.6 L554.0 549.6 L554.0 554.4 L555.0 554.4 L555.0 559.4 L556.0 559.4 L556.0 555.2 L557.0 555.2 L557.0 550.9 L558.0 550.9 L558.0 552.4 L559.0 552.4 L559.0 553.8 L560.0 553.8 L560.0 554.6 L561.0 554.6 L561.0 555.3 L562.0 555.3 L562.0 558.1 L563.0 558.1 L563.0 560.8 L564.0 560.8 L564.0 560.8 L565.0 560.8 L565.0 560.8 L566.0 560.8 L566.0 560.9 L567.0 560.9 L567.0 561.0 L568.0 561.0 L568.0 558.3 L569.0 558.3 L569.0 555.6 L570.0 555.6 L570.0 558.3 L571.0 558.3 L571.0 561.1 L572.0 561.1 L572.0 559.5 L573.0 559.5 L573.0 557.9 L574.0 557.9 L574.0 555.4 L575.0 555.4 L575.0 547.6 L576.0 547.6 L576.0 554.2 L577.0 554.2 L577.0 555.6 L578.0 555.6 L578.0 552.9 L579.0 552.9 L579.0 550.2 L580.0 550.2 L580.0 550.1 L581.0 550.1 L581.0 550.0 L582.0 550.0 L582.0 552.9 L583.0 552.9 L583.0 555.8 L584.0 555.8 L584.0 557.9 L585.0 557.9 L585.0 560.1 L586.0 560.1 L586.0 559.2 L587.0 559.2 L587.0 558.2 L588.0 558.2 L588.0 558.7 L589.0 558.7 L589.0 559.3 L590.0 559.3 L590.0 560.6 L591.0 560.6 L591.0 558.8 L592.0 558.8 L592.0 560.9 L593.0 560.9 L593.0 559.8 L594.0 559.8 L594.0 560.2 L595.0 560.2 L595.0 560.6 L596.0 560.6 L596.0 558.6 L597.0 558.6 L597.0 556.6 L598.0 556.6 L598.0 556.9 L599.0 556.9 L599.0 557.2 L600.0 557.2 L600.0 556.4 L601.0 556.4 L601.0 555.7 L602.0 555.7 L602.0 558.3 L603.0 558.3 L603.0 560.8 L604.0 560.8 L604.0 558.3 L605.0 558.3 L605.0 555.9 L606.0 555.9 L606.0 556.1 L607.0 556.1 L607.0 556.3 L608.0 556.3 L608.0 558.2 L609.0 558.2 L609.0 560.1 L610.0 560.1 L610.0 555.2 L611.0 555.2 L611.0 550.3 L612.0 550.3 L612.0 554.4 L613.0 554.4 L613.0 558.5 L614.0 558.5 L614.0 560.0 L615.0 560.0 L615.0 561.4 L616.0 561.4 L616.0 559.3 L617.0 559.3 L617.0 557.2 L618.0 557.2 L618.0 555.7 L619.0 555.7 L619.0 552.0 L620.0 552.0 L620.0 556.6 L621.0 556.6 L621.0 555.5 L622.0 555.5 L622.0 557.4 L623.0 557.4 L623.0 555.9 L624.0 555.9 L624.0 558.0 L625.0 558.0 L625.0 560.1 L626.0 560.1 L626.0 559.8 L627.0 559.8 L627.0 559.5 L628.0 559.5 L628.0 558.1 L629.0 558.1 L629.0 556.6 L630.0 556.6 L630.0 556.3 L631.0 556.3 L631.0 560.0 L632.0 560.0 L632.0 560.0 L633.0 560.0 L633.0 560.1 L634.0 560.1 L634.0 560.3 L635.0 560.3 L635.0 560.5 L636.0 560.5 L636.0 559.7 L637.0 559.7 L637.0 558.9 L638.0 558.9 L638.0 558.2 L639.0 558.2 L639.0 557.6 L640.0 557.6 L640.0 552.4 L641.0 552.4 L641.0 554.1 L642.0 554.1 L642.0 558.6 L643.0 558.6 L643.0 559.6 L644.0 559.6 L644.0 558.9 L645.0 558.9 L645.0 558.1 L646.0 558.1 L646.0 557.8 L647.0 557.8 L647.0 557.4 L648.0 557.4 L648.0 559.4 L649.0 559.4 L649.0 561.5 L650.0 561.5 L650.0 561.6 L651.0 561.6 L651.0 561.8 L652.0 561.8 L652.0 560.9 L653.0 560.9 L653.0 555.7 L654.0 555.7 L654.0 554.8 L655.0 554.8 L655.0 555.3 L656.0 555.3 L656.0 558.3 L657.0 558.3 L657.0 558.6 L658.0 558.6 L658.0 556.9 L659.0 556.9 L659.0 555.3 L660.0 555.3 L660.0 558.4 L661.0 558.4 L661.0 561.6 L662.0 561.6 L662.0 560.7 L663.0 560.7 L663.0 559.9 L664.0 559.9 L664.0 559.9 L665.0 559.9 L665.0 559.8 L666.0 559.8 L666.0 552.6 L667.0 552.6 L667.0 555.0 L668.0 555.0 L668.0 557.0 L669.0 557.0 L669.0 559.0 L670.0 559.0 L670.0 557.9 L671.0 557.9 L671.0 556.7 L672.0 556.7 L672.0 556.5 L673.0 556.5 L673.0 556.2 L674.0 556.2 L674.0 558.1 L675.0 558.1 L675.0 560.0 L676.0 560.0 L676.0 558.9 L677.0 558.9 L677.0 557.8 L678.0 557.8 L678.0 556.2 L679.0 556.2 L679.0 550.6 L680.0 550.6 L680.0 557.6 L681.0 557.6 L681.0 560.5 L682.0 560.5 L682.0 559.9 L683.0 559.9 L683.0 553.5 L684.0 553.5 L684.0 559.3 L685.0 559.3 L685.0 559.2 L686.0 559.2 L686.0 559.7 L687.0 559.7 L687.0 560.3 L688.0 560.3 L688.0 557.6 L689.0 557.6 L689.0 554.9 L690.0 554.9 L690.0 556.6 L691.0 556.6 L691.0 558.3 L692.0 558.3 L692.0 559.0 L693.0 559.0 L693.0 559.7 L694.0 559.7 L694.0 555.6 L695.0 555.6 L695.0 555.6 L696.0 555.6 L696.0 558.3 L697.0 558.3 L697.0 555.4 L698.0 555.4 L698.0 553.5 L699.0 553.5 L699.0 551.5 L700.0 551.5 L700.0 552.6 L701.0 552.6 L701.0 553.7 L702.0 553.7 L702.0 557.3 L703.0 557.3 L703.0 561.0 L704.0 561.0 L704.0 560.9 L705.0 560.9 L705.0 560.9 L706.0 560.9 L706.0 559.7 L707.0 559.7 L707.0 558.6 L708.0 558.6 L708.0 556.9 L709.0 556.9 L709.0 555.3 L710.0 555.3 L710.0 555.4 L711.0 555.4 L711.0 555.5 L712.0 555.5 L712.0 557.6 L713.0 557.6 L713.0 559.8 L714.0 559.8 L714.0 559.8 L715.0 559.8 L715.0 559.9 L716.0 559.9 L716.0 556.2 L717.0 556.2 L717.0 552.6 L718.0 552.6 L718.0 553.4 L719.0 553.4 L719.0 554.1 L720.0 554.1 L720.0 556.1 L721.0 556.1 L721.0 558.2 L722.0 558.2 L722.0 557.3 L723.0 557.3 L723.0 556.4 L724.0 556.4 L724.0 554.6 L725.0 554.6 L725.0 557.0 L726.0 557.0 L726.0 558.0 L727.0 558.0 L727.0 559.0 L728.0 559.0 L728.0 559.8 L729.0 559.8 L729.0 560.6 L730.0 560.6 L730.0 560.0 L731.0 560.0 L731.0 559.5 L732.0 559.5 L732.0 559.3 L733.0 559.3 L733.0 559.1 L734.0 559.1 L734.0 559.4 L735.0 559.4 L735.0 559.8 L736.0 559.8 L736.0 560.0 L737.0 560.0 L737.0 560.2 L738.0 560.2 L738.0 560.0 L739.0 560.0 L739.0 559.8 L740.0 559.8 L740.0 556.2 L741.0 556.2 L741.0 558.7 L742.0 558.7 L742.0 557.2 L743.0 557.2 L743.0 555.8 L744.0 555.8 L744.0 554.6 L745.0 554.6 L745.0 559.0 L746.0 559.0 L746.0 557.2 L747.0 557.2 L747.0 555.4 L748.0 555.4 L748.0 550.2 L749.0 550.2 L749.0 553.0 L750.0 553.0 L750.0 556.2 L751.0 556.2 L751.0 559.4 L752.0 559.4 L752.0 558.9 L753.0 558.9 L753.0 558.4 L754.0 558.4 L754.0 558.6 L755.0 558.6 L755.0 558.9 L756.0 558.9 L756.0 555.3 L757.0 555.3 L757.0 549.1 L758.0 549.1 L758.0 552.2 L759.0 552.2 L759.0 552.6 L760.0 552.6 L760.0 556.8 L761.0 556.8 L761.0 561.0 L762.0 561.0 L762.0 558.4 L763.0 558.4 L763.0 555.8 L764.0 555.8 L764.0 558.6 L765.0 558.6 L765.0 561.3 L766.0 561.3 L766.0 560.7 L767.0 560.7 L767.0 560.1 L768.0 560.1 L768.0 561.6 L769.0 561.6 L769.0 563.0 L770.0 563.0 L770.0 561.0 L771.0 561.0 L771.0 559.1 L772.0 559.1 L772.0 555.3 L773.0 555.3 L773.0 551.6 L774.0 551.6 L774.0 555.1 L775.0 555.1 L775.0 558.5 L776.0 558.5 L776.0 560.4 L777.0 560.4 L777.0 562.3 L778.0 562.3 L778.0 559.8 L779.0 559.8 L779.0 557.3 L780.0 557.3 L780.0 559.1 L781.0 559.1 L781.0 561.0 L782.0 561.0 L782.0 560.2 L783.0 560.2 L783.0 559.4 L784.0 559.4 L784.0 557.4 L785.0 557.4 L785.0 555.4 L786.0 555.4 L786.0 553.0 L787.0 553.0 L787.0 558.8 L788.0 558.8 L788.0 559.2 L789.0 559.2 L789.0 555.1 L790.0 555.1 L790.0 559.5 L791.0 559.5 L791.0 559.5 L792.0 559.5 L792.0 558.6 L793.0 558.6 L793.0 557.6 L794.0 557.6 L794.0 556.4 L795.0 556.4 L795.0 555.1 L796.0 555.1 L796.0 548.0 L797.0 548.0 L797.0 551.2 L798.0 551.2 L798.0 554.6 L799.0 554.6 L799.0 558.0 L800.0 558.0 L800.0 558.3 L801.0 558.3 L801.0 554.3 L802.0 554.3 L802.0 557.1 L803.0 557.1 L803.0 555.5 L804.0 555.5 L804.0 556.7 L805.0 556.7 L805.0 558.0 L806.0 558.0 L806.0 559.0 L807.0 559.0 L807.0 556.6 L808.0 556.6 L808.0 558.0 L809.0 558.0 L809.0 560.3 L810.0 560.3 L810.0 560.6 L811.0 560.6 L811.0 561.0 L812.0 561.0 L812.0 558.5 L813.0 558.5 L813.0 556.0 L814.0 556.0 L814.0 558.4 L815.0 558.4 L815.0 560.7 L816.0 560.7 L816.0 561.2 L817.0 561.2 L817.0 557.4 L818.0 557.4 L818.0 561.9 L819.0 561.9 L819.0 562.1 L820.0 562.1 L820.0 557.2 L821.0 557.2 L821.0 560.8 L822.0 560.8 L822.0 561.0 L823.0 561.0 L823.0 561.1 L824.0 561.1 L824.0 561.2 L825.0 561.2 L825.0 561.2 L826.0 561.2 L826.0 561.9 L827.0 561.9 L827.0 560.6 L828.0 560.6 L828.0 557.5 L829.0 557.5 L829.0 552.4 L830.0 552.4 L830.0 552.3 L831.0 552.3 L831.0 552.3 L832.0 552.3 L832.0 555.6 L833.0 555.6 L833.0 553.6 L834.0 553.6 L834.0 558.3 L835.0 558.3 L835.0 557.8 L836.0 557.8 L836.0 558.5 L837.0 558.5 L837.0 559.1 L838.0 559.1 L838.0 559.3 L839.0 559.3 L839.0 559.4 L840.0 559.4 L840.0 560.5 L841.0 560.5 L841.0 561.6 L842.0 561.6 L842.0 561.3 L843.0 561.3 L843.0 560.9 L844.0 560.9 L844.0 561.1 L845.0 561.1 L845.0 561.4 L846.0 561.4 L846.0 561.5 L847.0 561.5 L847.0 561.6 L848.0 561.6 L848.0 589.3 L847.0 589.3 L847.0 592.6 L846.0 592.6 L846.0 595.9 L845.0 595.9 L845.0 599.1 L844.0 599.1 L844.0 594.5 L843.0 594.5 L843.0 592.3 L842.0 592.3 L842.0 592.7 L841.0 592.7 L841.0 590.5 L840.0 590.5 L840.0 588.2 L839.0 588.2 L839.0 589.1 L838.0 589.1 L838.0 590.0 L837.0 590.0 L837.0 590.1 L836.0 590.1 L836.0 595.6 L835.0 595.6 L835.0 589.4 L834.0 589.4 L834.0 588.5 L833.0 588.5 L833.0 589.7 L832.0 589.7 L832.0 594.6 L831.0 594.6 L831.0 590.6 L830.0 590.6 L830.0 590.2 L829.0 590.2 L829.0 591.2 L828.0 591.2 L828.0 592.2 L827.0 592.2 L827.0 594.8 L826.0 594.8 L826.0 586.1 L825.0 586.1 L825.0 585.9 L824.0 585.9 L824.0 585.7 L823.0 585.7 L823.0 586.3 L822.0 586.3 L822.0 587.0 L821.0 587.0 L821.0 586.7 L820.0 586.7 L820.0 590.9 L819.0 590.9 L819.0 587.4 L818.0 587.4 L818.0 588.4 L817.0 588.4 L817.0 593.8 L816.0 593.8 L816.0 592.6 L815.0 592.6 L815.0 588.2 L814.0 588.2 L814.0 588.2 L813.0 588.2 L813.0 586.4 L812.0 586.4 L812.0 584.7 L811.0 584.7 L811.0 591.6 L810.0 591.6 L810.0 588.0 L809.0 588.0 L809.0 586.1 L808.0 586.1 L808.0 584.2 L807.0 584.2 L807.0 590.5 L806.0 590.5 L806.0 585.9 L805.0 585.9 L805.0 593.5 L804.0 593.5 L804.0 589.7 L803.0 589.7 L803.0 588.0 L802.0 588.0 L802.0 588.6 L801.0 588.6 L801.0 589.1 L800.0 589.1 L800.0 592.0 L799.0 592.0 L799.0 590.6 L798.0 590.6 L798.0 589.1 L797.0 589.1 L797.0 591.4 L796.0 591.4 L796.0 589.3 L795.0 589.3 L795.0 592.4 L794.0 592.4 L794.0 595.6 L793.0 595.6 L793.0 598.7 L792.0 598.7 L792.0 593.2 L791.0 593.2 L791.0 590.0 L790.0 590.0 L790.0 586.7 L789.0 586.7 L789.0 587.8 L788.0 587.8 L788.0 591.0 L787.0 591.0 L787.0 588.1 L786.0 588.1 L786.0 587.3 L785.0 587.3 L785.0 586.1 L784.0 586.1 L784.0 584.9 L783.0 584.9 L783.0 586.1 L782.0 586.1 L782.0 587.3 L781.0 587.3 L781.0 588.4 L780.0 588.4 L780.0 584.0 L779.0 584.0 L779.0 585.1 L778.0 585.1 L778.0 586.2 L777.0 586.2 L777.0 586.0 L776.0 586.0 L776.0 585.8 L775.0 585.8 L775.0 588.8 L774.0 588.8 L774.0 591.8 L773.0 591.8 L773.0 590.4 L772.0 590.4 L772.0 589.0 L771.0 589.0 L771.0 594.3 L770.0 594.3 L770.0 589.3 L769.0 589.3 L769.0 588.3 L768.0 588.3 L768.0 587.3 L767.0 587.3 L767.0 587.4 L766.0 587.4 L766.0 587.4 L765.0 587.4 L765.0 586.8 L764.0 586.8 L764.0 586.2 L763.0 586.2 L763.0 591.4 L762.0 591.4 L762.0 586.3 L761.0 586.3 L761.0 585.9 L760.0 585.9 L760.0 585.5 L759.0 585.5 L759.0 585.5 L758.0 585.5 L758.0 590.1 L757.0 590.1 L757.0 590.5 L756.0 590.5 L756.0 595.5 L755.0 595.5 L755.0 591.9 L754.0 591.9 L754.0 588.4 L753.0 588.4 L753.0 587.3 L752.0 587.3 L752.0 586.2 L751.0 586.2 L751.0 586.8 L750.0 586.8 L750.0 587.4 L749.0 587.4 L749.0 586.5 L748.0 586.5 L748.0 585.6 L747.0 585.6 L747.0 590.1 L746.0 590.1 L746.0 594.6 L745.0 594.6 L745.0 590.7 L744.0 590.7 L744.0 586.8 L743.0 586.8 L743.0 586.7 L742.0 586.7 L742.0 586.6 L741.0 586.6 L741.0 587.2 L740.0 587.2 L740.0 587.7 L739.0 587.7 L739.0 587.0 L738.0 587.0 L738.0 586.3 L737.0 586.3 L737.0 587.2 L736.0 587.2 L736.0 588.1 L735.0 588.1 L735.0 588.7 L734.0 588.7 L734.0 589.3 L733.0 589.3 L733.0 590.5 L732.0 590.5 L732.0 591.7 L731.0 591.7 L731.0 589.2 L730.0 589.2 L730.0 588.8 L729.0 588.8 L729.0 586.4 L728.0 586.4 L728.0 586.1 L727.0 586.1 L727.0 588.8 L726.0 588.8 L726.0 591.6 L725.0 591.6 L725.0 588.7 L724.0 588.7 L724.0 585.8 L723.0 585.8 L723.0 588.7 L722.0 588.7 L722.0 591.5 L721.0 591.5 L721.0 594.9 L720.0 594.9 L720.0 590.7 L719.0 590.7 L719.0 588.8 L718.0 588.8 L718.0 586.9 L717.0 586.9 L717.0 587.6 L716.0 587.6 L716.0 588.3 L715.0 588.3 L715.0 587.4 L714.0 587.4 L714.0 590.4 L713.0 590.4 L713.0 588.3 L712.0 588.3 L712.0 590.2 L711.0 590.2 L711.0 592.9 L710.0 592.9 L710.0 600.4 L709.0 600.4 L709.0 595.0 L708.0 595.0 L708.0 592.9 L707.0 592.9 L707.0 589.1 L706.0 589.1 L706.0 588.2 L705.0 588.2 L705.0 587.7 L704.0 587.7 L704.0 587.2 L703.0 587.2 L703.0 590.6 L702.0 590.6 L702.0 593.9 L701.0 593.9 L701.0 589.6 L700.0 589.6 L700.0 585.3 L699.0 585.3 L699.0 585.7 L698.0 585.7 L698.0 586.0 L697.0 586.0 L697.0 588.5 L696.0 588.5 L696.0 590.9 L695.0 590.9 L695.0 588.0 L694.0 588.0 L694.0 585.0 L693.0 585.0 L693.0 586.1 L692.0 586.1 L692.0 587.2 L691.0 587.2 L691.0 590.6 L690.0 590.6 L690.0 586.9 L689.0 586.9 L689.0 589.2 L688.0 589.2 L688.0 591.6 L687.0 591.6 L687.0 590.0 L686.0 590.0 L686.0 588.5 L685.0 588.5 L685.0 588.2 L684.0 588.2 L684.0 587.9 L683.0 587.9 L683.0 589.5 L682.0 589.5 L682.0 591.1 L681.0 591.1 L681.0 592.7 L680.0 592.7 L680.0 597.1 L679.0 597.1 L679.0 594.6 L678.0 594.6 L678.0 600.5 L677.0 600.5 L677.0 591.6 L676.0 591.6 L676.0 588.3 L675.0 588.3 L675.0 586.7 L674.0 586.7 L674.0 585.0 L673.0 585.0 L673.0 587.1 L672.0 587.1 L672.0 589.2 L671.0 589.2 L671.0 589.2 L670.0 589.2 L670.0 589.2 L669.0 589.2 L669.0 586.7 L668.0 586.7 L668.0 584.2 L667.0 584.2 L667.0 585.8 L666.0 585.8 L666.0 587.3 L665.0 587.3 L665.0 586.8 L664.0 586.8 L664.0 586.2 L663.0 586.2 L663.0 587.1 L662.0 587.1 L662.0 588.0 L661.0 588.0 L661.0 588.0 L660.0 588.0 L660.0 588.1 L659.0 588.1 L659.0 587.8 L658.0 587.8 L658.0 590.6 L657.0 590.6 L657.0 586.0 L656.0 586.0 L656.0 584.5 L655.0 584.5 L655.0 584.9 L654.0 584.9 L654.0 585.3 L653.0 585.3 L653.0 588.7 L652.0 588.7 L652.0 596.2 L651.0 596.2 L651.0 593.2 L650.0 593.2 L650.0 598.4 L649.0 598.4 L649.0 590.4 L648.0 590.4 L648.0 586.4 L647.0 586.4 L647.0 588.1 L646.0 588.1 L646.0 589.7 L645.0 589.7 L645.0 589.8 L644.0 589.8 L644.0 589.9 L643.0 589.9 L643.0 587.2 L642.0 587.2 L642.0 584.5 L641.0 584.5 L641.0 584.5 L640.0 584.5 L640.0 587.8 L639.0 587.8 L639.0 593.0 L638.0 593.0 L638.0 591.5 L637.0 591.5 L637.0 589.8 L636.0 589.8 L636.0 593.5 L635.0 593.5 L635.0 588.3 L634.0 588.3 L634.0 588.6 L633.0 588.6 L633.0 589.8 L632.0 589.8 L632.0 591.0 L631.0 591.0 L631.0 587.9 L630.0 587.9 L630.0 584.7 L629.0 584.7 L629.0 586.0 L628.0 586.0 L628.0 587.2 L627.0 587.2 L627.0 586.7 L626.0 586.7 L626.0 586.2 L625.0 586.2 L625.0 587.6 L624.0 587.6 L624.0 589.0 L623.0 589.0 L623.0 589.0 L622.0 589.0 L622.0 588.9 L621.0 588.9 L621.0 593.2 L620.0 593.2 L620.0 593.0 L619.0 593.0 L619.0 590.3 L618.0 590.3 L618.0 587.6 L617.0 587.6 L617.0 585.9 L616.0 585.9 L616.0 584.2 L615.0 584.2 L615.0 586.9 L614.0 586.9 L614.0 589.6 L613.0 589.6 L613.0 589.1 L612.0 589.1 L612.0 588.5 L611.0 588.5 L611.0 586.3 L610.0 586.3 L610.0 584.1 L609.0 584.1 L609.0 587.5 L608.0 587.5 L608.0 590.9 L607.0 590.9 L607.0 588.6 L606.0 588.6 L606.0 586.4 L605.0 586.4 L605.0 586.9 L604.0 586.9 L604.0 587.4 L603.0 587.4 L603.0 587.1 L602.0 587.1 L602.0 586.8 L601.0 586.8 L601.0 592.6 L600.0 592.6 L600.0 588.3 L599.0 588.3 L599.0 588.1 L598.0 588.1 L598.0 587.9 L597.0 587.9 L597.0 587.9 L596.0 587.9 L596.0 587.9 L595.0 587.9 L595.0 587.6 L594.0 587.6 L594.0 587.2 L593.0 587.2 L593.0 587.1 L592.0 587.1 L592.0 587.0 L591.0 587.0 L591.0 586.6 L590.0 586.6 L590.0 586.2 L589.0 586.2 L589.0 587.6 L588.0 587.6 L588.0 594.0 L587.0 594.0 L587.0 587.4 L586.0 587.4 L586.0 585.7 L585.0 585.7 L585.0 586.5 L584.0 586.5 L584.0 587.4 L583.0 587.4 L583.0 586.8 L582.0 586.8 L582.0 586.2 L581.0 586.2 L581.0 585.9 L580.0 585.9 L580.0 585.6 L579.0 585.6 L579.0 585.1 L578.0 585.1 L578.0 584.7 L577.0 584.7 L577.0 586.8 L576.0 586.8 L576.0 592.1 L575.0 592.1 L575.0 589.1 L574.0 589.1 L574.0 591.8 L573.0 591.8 L573.0 587.6 L572.0 587.6 L572.0 586.0 L571.0 586.0 L571.0 588.1 L570.0 588.1 L570.0 590.3 L569.0 590.3 L569.0 589.4 L568.0 589.4 L568.0 588.6 L567.0 588.6 L567.0 590.8 L566.0 590.8 L566.0 593.1 L565.0 593.1 L565.0 591.6 L564.0 591.6 L564.0 590.0 L563.0 590.0 L563.0 590.0 L562.0 590.0 L562.0 589.9 L561.0 589.9 L561.0 588.0 L560.0 588.0 L560.0 586.1 L559.0 586.1 L559.0 592.4 L558.0 592.4 L558.0 586.9 L557.0 586.9 L557.0 586.2 L556.0 586.2 L556.0 585.5 L555.0 585.5 L555.0 589.9 L554.0 589.9 L554.0 594.4 L553.0 594.4 L553.0 593.3 L552.0 593.3 L552.0 592.2 L551.0 592.2 L551.0 589.4 L550.0 589.4 L550.0 586.6 L549.0 586.6 L549.0 587.9 L548.0 587.9 L548.0 589.2 L547.0 589.2 L547.0 588.5 L546.0 588.5 L546.0 591.5 L545.0 591.5 L545.0 587.1 L544.0 587.1 L544.0 586.4 L543.0 586.4 L543.0 587.2 L542.0 587.2 L542.0 588.0 L541.0 588.0 L541.0 588.1 L540.0 588.1 L540.0 588.3 L539.0 588.3 L539.0 591.8 L538.0 591.8 L538.0 595.4 L537.0 595.4 L537.0 593.9 L536.0 593.9 L536.0 592.3 L535.0 592.3 L535.0 589.4 L534.0 589.4 L534.0 589.5 L533.0 589.5 L533.0 586.6 L532.0 586.6 L532.0 586.8 L531.0 586.8 L531.0 592.2 L530.0 592.2 L530.0 592.4 L529.0 592.4 L529.0 592.8 L528.0 592.8 L528.0 586.7 L527.0 586.7 L527.0 586.7 L526.0 586.7 L526.0 586.7 L525.0 586.7 L525.0 587.8 L524.0 587.8 L524.0 588.9 L523.0 588.9 L523.0 589.0 L522.0 589.0 L522.0 592.0 L521.0 592.0 L521.0 587.7 L520.0 587.7 L520.0 586.3 L519.0 586.3 L519.0 590.9 L518.0 590.9 L518.0 592.8 L517.0 592.8 L517.0 587.8 L516.0 587.8 L516.0 588.4 L515.0 588.4 L515.0 594.9 L514.0 594.9 L514.0 591.4 L513.0 591.4 L513.0 590.2 L512.0 590.2 L512.0 589.1 L511.0 589.1 L511.0 591.9 L510.0 591.9 L510.0 594.7 L509.0 594.7 L509.0 591.2 L508.0 591.2 L508.0 591.5 L507.0 591.5 L507.0 588.0 L506.0 588.0 L506.0 588.2 L505.0 588.2 L505.0 594.5 L504.0 594.5 L504.0 590.9 L503.0 590.9 L503.0 589.3 L502.0 589.3 L502.0 587.8 L501.0 587.8 L501.0 591.1 L500.0 591.1 L500.0 594.5 L499.0 594.5 L499.0 597.8 L498.0 597.8 L498.0 593.0 L497.0 593.0 L497.0 591.4 L496.0 591.4 L496.0 589.7 L495.0 589.7 L495.0 588.4 L494.0 588.4 L494.0 592.6 L493.0 592.6 L493.0 590.7 L492.0 590.7 L492.0 594.3 L491.0 594.3 L491.0 591.6 L490.0 591.6 L490.0 588.8 L489.0 588.8 L489.0 587.8 L488.0 587.8 L488.0 592.6 L487.0 592.6 L487.0 587.0 L486.0 587.0 L486.0 587.1 L485.0 587.1 L485.0 589.8 L484.0 589.8 L484.0 587.0 L483.0 587.0 L483.0 588.1 L482.0 588.1 L482.0 589.1 L481.0 589.1 L481.0 588.6 L480.0 588.6 L480.0 588.0 L479.0 588.0 L479.0 590.7 L478.0 590.7 L478.0 593.4 L477.0 593.4 L477.0 591.4 L476.0 591.4 L476.0 594.1 L475.0 594.1 L475.0 588.9 L474.0 588.9 L474.0 588.5 L473.0 588.5 L473.0 590.6 L472.0 590.6 L472.0 592.7 L471.0 592.7 L471.0 592.9 L470.0 592.9 L470.0 593.1 L469.0 593.1 L469.0 590.9 L468.0 590.9 L468.0 588.7 L467.0 588.7 L467.0 587.3 L466.0 587.3 L466.0 585.8 L465.0 585.8 L465.0 590.2 L464.0 590.2 L464.0 589.7 L463.0 589.7 L463.0 590.9 L462.0 590.9 L462.0 592.0 L461.0 592.0 L461.0 588.9 L460.0 588.9 L460.0 585.9 L459.0 585.9 L459.0 586.4 L458.0 586.4 L458.0 591.5 L457.0 591.5 L457.0 594.1 L456.0 594.1 L456.0 589.4 L455.0 589.4 L455.0 589.0 L454.0 589.0 L454.0 588.6 L453.0 588.6 L453.0 590.0 L452.0 590.0 L452.0 591.4 L451.0 591.4 L451.0 598.4 L450.0 598.4 L450.0 596.6 L449.0 596.6 L449.0 591.9 L448.0 591.9 L448.0 587.1 L447.0 587.1 L447.0 590.1 L446.0 590.1 L446.0 593.0 L445.0 593.0 L445.0 592.7 L444.0 592.7 L444.0 592.3 L443.0 592.3 L443.0 590.2 L442.0 590.2 L442.0 588.2 L441.0 588.2 L441.0 587.9 L440.0 587.9 L440.0 587.6 L439.0 587.6 L439.0 595.0 L438.0 595.0 L438.0 592.6 L437.0 592.6 L437.0 596.0 L436.0 596.0 L436.0 588.6 L435.0 588.6 L435.0 588.5 L434.0 588.5 L434.0 588.5 L433.0 588.5 L433.0 588.7 L432.0 588.7 L432.0 588.9 L431.0 588.9 L431.0 592.8 L430.0 592.8 L430.0 592.0 L429.0 592.0 L429.0 591.4 L428.0 591.4 L428.0 590.9 L427.0 590.9 L427.0 591.3 L426.0 591.3 L426.0 597.5 L425.0 597.5 L425.0 590.8 L424.0 590.8 L424.0 589.8 L423.0 589.8 L423.0 588.6 L422.0 588.6 L422.0 592.8 L421.0 592.8 L421.0 589.9 L420.0 589.9 L420.0 594.3 L419.0 594.3 L419.0 588.8 L418.0 588.8 L418.0 589.2 L417.0 589.2 L417.0 589.7 L416.0 589.7 L416.0 590.1 L415.0 590.1 L415.0 588.9 L414.0 588.9 L414.0 587.6 L413.0 587.6 L413.0 593.0 L412.0 593.0 L412.0 591.6 L411.0 591.6 L411.0 590.2 L410.0 590.2 L410.0 588.9 L409.0 588.9 L409.0 589.5 L408.0 589.5 L408.0 590.1 L407.0 590.1 L407.0 591.0 L406.0 591.0 L406.0 591.9 L405.0 591.9 L405.0 589.9 L404.0 589.9 L404.0 587.9 L403.0 587.9 L403.0 588.3 L402.0 588.3 L402.0 591.2 L401.0 591.2 L401.0 589.9 L400.0 589.9 L400.0 593.4 L399.0 593.4 L399.0 589.5 L398.0 589.5 L398.0 588.0 L397.0 588.0 L397.0 587.6 L396.0 587.6 L396.0 587.1 L395.0 587.1 L395.0 591.8 L394.0 591.8 L394.0 596.5 L393.0 596.5 L393.0 594.3 L392.0 594.3 L392.0 592.1 L391.0 592.1 L391.0 594.6 L390.0 594.6 L390.0 587.0 L389.0 587.0 L389.0 592.2 L388.0 592.2 L388.0 597.3 L387.0 597.3 L387.0 593.2 L386.0 593.2 L386.0 591.5 L385.0 591.5 L385.0 592.1 L384.0 592.1 L384.0 595.1 L383.0 595.1 L383.0 591.7 L382.0 591.7 L382.0 588.2 L381.0 588.2 L381.0 590.3 L380.0 590.3 L380.0 592.4 L379.0 592.4 L379.0 590.6 L378.0 590.6 L378.0 588.8 L377.0 588.8 L377.0 588.6 L376.0 588.6 L376.0 588.4 L375.0 588.4 L375.0 593.3 L374.0 593.3 L374.0 594.4 L373.0 594.4 L373.0 591.7 L372.0 591.7 L372.0 591.2 L371.0 591.2 L371.0 588.9 L370.0 588.9 L370.0 586.5 L369.0 586.5 L369.0 590.0 L368.0 590.0 L368.0 593.4 L367.0 593.4 L367.0 590.1 L366.0 590.1 L366.0 586.9 L365.0 586.9 L365.0 589.5 L364.0 589.5 L364.0 596.1 L363.0 596.1 L363.0 589.3 L362.0 589.3 L362.0 586.5 L361.0 586.5 L361.0 588.2 L360.0 588.2 L360.0 589.9 L359.0 589.9 L359.0 589.9 L358.0 589.9 L358.0 589.9 L357.0 589.9 L357.0 591.8 L356.0 591.8 L356.0 597.6 L355.0 597.6 L355.0 591.3 L354.0 591.3 L354.0 588.9 L353.0 588.9 L353.0 589.3 L352.0 589.3 L352.0 589.6 L351.0 589.6 L351.0 589.0 L350.0 589.0 L350.0 588.3 L349.0 588.3 L349.0 590.6 L348.0 590.6 L348.0 593.0 L347.0 593.0 L347.0 589.8 L346.0 589.8 L346.0 586.7 L345.0 586.7 L345.0 589.6 L344.0 589.6 L344.0 592.6 L343.0 592.6 L343.0 590.9 L342.0 590.9 L342.0 589.2 L341.0 589.2 L341.0 594.5 L340.0 594.5 L340.0 588.5 L339.0 588.5 L339.0 589.2 L338.0 589.2 L338.0 590.0 L337.0 590.0 L337.0 591.7 L336.0 591.7 L336.0 593.5 L335.0 593.5 L335.0 591.3 L334.0 591.3 L334.0 594.0 L333.0 594.0 L333.0 591.0 L332.0 591.0 L332.0 592.8 L331.0 592.8 L331.0 595.6 L330.0 595.6 L330.0 598.3 L329.0 598.3 L329.0 593.5 L328.0 593.5 L328.0 593.8 L327.0 593.8 L327.0 588.4 L326.0 588.4 L326.0 588.1 L325.0 588.1 L325.0 587.4 L324.0 587.4 L324.0 586.6 L323.0 586.6 L323.0 586.6 L322.0 586.6 L322.0 586.6 L321.0 586.6 L321.0 591.0 L320.0 591.0 L320.0 598.5 L319.0 598.5 L319.0 591.2 L318.0 591.2 L318.0 586.9 L317.0 586.9 L317.0 586.6 L316.0 586.6 L316.0 586.3 L315.0 586.3 L315.0 587.0 L314.0 587.0 L314.0 587.6 L313.0 587.6 L313.0 587.8 L312.0 587.8 L312.0 587.9 L311.0 587.9 L311.0 587.4 L310.0 587.4 L310.0 586.9 L309.0 586.9 L309.0 587.6 L308.0 587.6 L308.0 588.3 L307.0 588.3 L307.0 592.3 L306.0 592.3 L306.0 589.3 L305.0 589.3 L305.0 588.0 L304.0 588.0 L304.0 586.8 L303.0 586.8 L303.0 588.6 L302.0 588.6 L302.0 590.4 L301.0 590.4 L301.0 591.1 L300.0 591.1 L300.0 591.9 L299.0 591.9 L299.0 589.6 L298.0 589.6 L298.0 587.4 L297.0 587.4 L297.0 587.1 L296.0 587.1 L296.0 586.8 L295.0 586.8 L295.0 589.2 L294.0 589.2 L294.0 591.6 L293.0 591.6 L293.0 589.2 L292.0 589.2 L292.0 586.8 L291.0 586.8 L291.0 586.9 L290.0 586.9 L290.0 587.0 L289.0 587.0 L289.0 586.7 L288.0 586.7 L288.0 586.3 L287.0 586.3 L287.0 586.8 L286.0 586.8 L286.0 587.4 L285.0 587.4 L285.0 587.7 L284.0 587.7 L284.0 588.1 L283.0 588.1 L283.0 588.6 L282.0 588.6 L282.0 589.0 L281.0 589.0 L281.0 593.2 L280.0 593.2 L280.0 587.6 L279.0 587.6 L279.0 587.3 L278.0 587.3 L278.0 586.9 L277.0 586.9 L277.0 587.5 L276.0 587.5 L276.0 590.4 L275.0 590.4 L275.0 591.1 L274.0 591.1 L274.0 599.7 L273.0 599.7 L273.0 590.1 L272.0 590.1 L272.0 586.0 L271.0 586.0 L271.0 587.6 L270.0 587.6 L270.0 589.2 L269.0 589.2 L269.0 589.7 L268.0 589.7 L268.0 589.5 L267.0 589.5 L267.0 586.2 L266.0 586.2 L266.0 587.0 L265.0 587.0 Z" fill="#5a5b79"/>
<path d="M265.0 550.4 L266.0 550.4 L266.0 553.7 L267.0 553.7 L267.0 557.1 L268.0 557.1 L268.0 553.6 L269.0 553.6 L269.0 561.6 L270.0 561.6 L270.0 561.2 L271.0 561.2 L271.0 560.7 L272.0 560.7 L272.0 560.5 L273.0 560.5 L273.0 560.3 L274.0 560.3 L274.0 560.3 L275.0 560.3 L275.0 560.3 L276.0 560.3 L276.0 560.3 L277.0 560.3 L277.0 560.3 L278.0 560.3 L278.0 555.7 L279.0 555.7 L279.0 556.9 L280.0 556.9 L280.0 558.4 L281.0 558.4 L281.0 559.8 L282.0 559.8 L282.0 558.1 L283.0 558.1 L283.0 556.4 L284.0 556.4 L284.0 558.8 L285.0 558.8 L285.0 561.1 L286.0 561.1 L286.0 559.2 L287.0 559.2 L287.0 557.3 L288.0 557.3 L288.0 559.5 L289.0 559.5 L289.0 561.8 L290.0 561.8 L290.0 560.0 L291.0 560.0 L291.0 558.3 L292.0 558.3 L292.0 560.6 L293.0 560.6 L293.0 562.8 L294.0 562.8 L294.0 559.6 L295.0 559.6 L295.0 556.4 L296.0 556.4 L296.0 559.4 L297.0 559.4 L297.0 559.8 L298.0 559.8 L298.0 556.9 L299.0 556.9 L299.0 557.9 L300.0 557.9 L300.0 559.5 L301.0 559.5 L301.0 561.1 L302.0 561.1 L302.0 560.1 L303.0 560.1 L303.0 559.1 L304.0 559.1 L304.0 556.3 L305.0 556.3 L305.0 553.4 L306.0 553.4 L306.0 556.5 L307.0 556.5 L307.0 556.6 L308.0 556.6 L308.0 561.6 L309.0 561.6 L309.0 559.4 L310.0 559.4 L310.0 559.7 L311.0 559.7 L311.0 555.8 L312.0 555.8 L312.0 550.4 L313.0 550.4 L313.0 553.0 L314.0 553.0 L314.0 555.3 L315.0 555.3 L315.0 557.6 L316.0 557.6 L316.0 559.4 L317.0 559.4 L317.0 555.6 L318.0 555.6 L318.0 561.5 L319.0 561.5 L319.0 561.7 L320.0 561.7 L320.0 557.6 L321.0 557.6 L321.0 553.5 L322.0 553.5 L322.0 557.6 L323.0 557.6 L323.0 561.8 L324.0 561.8 L324.0 559.8 L325.0 559.8 L325.0 557.8 L326.0 557.8 L326.0 555.3 L327.0 555.3 L327.0 552.9 L328.0 552.9 L328.0 552.1 L329.0 552.1 L329.0 549.2 L330.0 549.2 L330.0 554.2 L331.0 554.2 L331.0 557.0 L332.0 557.0 L332.0 556.5 L333.0 556.5 L333.0 555.9 L334.0 555.9 L334.0 558.3 L335.0 558.3 L335.0 560.8 L336.0 560.8 L336.0 558.5 L337.0 558.5 L337.0 556.2 L338.0 556.2 L338.0 557.8 L339.0 557.8 L339.0 559.4 L340.0 559.4 L340.0 557.2 L341.0 557.2 L341.0 554.9 L342.0 554.9 L342.0 554.6 L343.0 554.6 L343.0 554.2 L344.0 554.2 L344.0 557.7 L345.0 557.7 L345.0 561.2 L346.0 561.2 L346.0 560.8 L347.0 560.8 L347.0 560.3 L348.0 560.3 L348.0 560.4 L349.0 560.4 L349.0 560.4 L350.0 560.4 L350.0 559.4 L351.0 559.4 L351.0 558.4 L352.0 558.4 L352.0 557.9 L353.0 557.9 L353.0 557.5 L354.0 557.5 L354.0 559.5 L355.0 559.5 L355.0 561.5 L356.0 561.5 L356.0 560.3 L357.0 560.3 L357.0 559.2 L358.0 559.2 L358.0 557.5 L359.0 557.5 L359.0 555.9 L360.0 555.9 L360.0 554.9 L361.0 554.9 L361.0 553.8 L362.0 553.8 L362.0 549.6 L363.0 549.6 L363.0 552.7 L364.0 552.7 L364.0 555.5 L365.0 555.5 L365.0 555.2 L366.0 555.2 L366.0 557.6 L367.0 557.6 L367.0 560.1 L368.0 560.1 L368.0 556.3 L369.0 556.3 L369.0 552.4 L370.0 552.4 L370.0 555.6 L371.0 555.6 L371.0 555.8 L372.0 555.8 L372.0 554.6 L373.0 554.6 L373.0 557.1 L374.0 557.1 L374.0 559.1 L375.0 559.1 L375.0 555.8 L376.0 555.8 L376.0 558.8 L377.0 558.8 L377.0 556.6 L378.0 556.6 L378.0 559.3 L379.0 559.3 L379.0 562.0 L380.0 562.0 L380.0 560.7 L381.0 560.7 L381.0 556.2 L382.0 556.2 L382.0 558.8 L383.0 558.8 L383.0 558.1 L384.0 558.1 L384.0 558.3 L385.0 558.3 L385.0 558.5 L386.0 558.5 L386.0 557.0 L387.0 557.0 L387.0 560.6 L388.0 560.6 L388.0 559.5 L389.0 559.5 L389.0 558.3 L390.0 558.3 L390.0 559.0 L391.0 559.0 L391.0 559.6 L392.0 559.6 L392.0 559.3 L393.0 559.3 L393.0 559.0 L394.0 559.0 L394.0 558.8 L395.0 558.8 L395.0 558.6 L396.0 558.6 L396.0 560.1 L397.0 560.1 L397.0 561.5 L398.0 561.5 L398.0 560.2 L399.0 560.2 L399.0 558.9 L400.0 558.9 L400.0 554.4 L401.0 554.4 L401.0 555.7 L402.0 555.7 L402.0 555.5 L403.0 555.5 L403.0 555.3 L404.0 555.3 L404.0 558.0 L405.0 558.0 L405.0 560.7 L406.0 560.7 L406.0 559.0 L407.0 559.0 L407.0 557.2 L408.0 557.2 L408.0 558.4 L409.0 558.4 L409.0 559.5 L410.0 559.5 L410.0 557.9 L411.0 557.9 L411.0 556.4 L412.0 556.4 L412.0 555.8 L413.0 555.8 L413.0 555.3 L414.0 555.3 L414.0 556.7 L415.0 556.7 L415.0 558.2 L416.0 558.2 L416.0 553.4 L417.0 553.4 L417.0 552.8 L418.0 552.8 L418.0 553.4 L419.0 553.4 L419.0 554.1 L420.0 554.1 L420.0 556.5 L421.0 556.5 L421.0 558.9 L422.0 558.9 L422.0 559.7 L423.0 559.7 L423.0 560.4 L424.0 560.4 L424.0 555.3 L425.0 555.3 L425.0 560.1 L426.0 560.1 L426.0 557.8 L427.0 557.8 L427.0 555.5 L428.0 555.5 L428.0 557.9 L429.0 557.9 L429.0 560.3 L430.0 560.3 L430.0 560.5 L431.0 560.5 L431.0 560.6 L432.0 560.6 L432.0 557.1 L433.0 557.1 L433.0 553.5 L434.0 553.5 L434.0 554.6 L435.0 554.6 L435.0 555.7 L436.0 555.7 L436.0 552.3 L437.0 552.3 L437.0 548.9 L438.0 548.9 L438.0 554.7 L439.0 554.7 L439.0 560.6 L440.0 560.6 L440.0 560.0 L441.0 560.0 L441.0 559.5 L442.0 559.5 L442.0 559.7 L443.0 559.7 L443.0 559.9 L444.0 559.9 L444.0 552.6 L445.0 552.6 L445.0 554.5 L446.0 554.5 L446.0 557.3 L447.0 557.3 L447.0 560.2 L448.0 560.2 L448.0 559.5 L449.0 559.5 L449.0 558.7 L450.0 558.7 L450.0 559.6 L451.0 559.6 L451.0 560.4 L452.0 560.4 L452.0 560.5 L453.0 560.5 L453.0 560.7 L454.0 560.7 L454.0 557.8 L455.0 557.8 L455.0 558.9 L456.0 558.9 L456.0 557.1 L457.0 557.1 L457.0 555.2 L458.0 555.2 L458.0 556.5 L459.0 556.5 L459.0 557.7 L460.0 557.7 L460.0 558.7 L461.0 558.7 L461.0 559.6 L462.0 559.6 L462.0 558.1 L463.0 558.1 L463.0 556.6 L464.0 556.6 L464.0 557.4 L465.0 557.4 L465.0 558.1 L466.0 558.1 L466.0 555.4 L467.0 555.4 L467.0 552.6 L468.0 552.6 L468.0 551.5 L469.0 551.5 L469.0 550.3 L470.0 550.3 L470.0 544.4 L471.0 544.4 L471.0 549.3 L472.0 549.3 L472.0 553.5 L473.0 553.5 L473.0 557.8 L474.0 557.8 L474.0 556.7 L475.0 556.7 L475.0 555.6 L476.0 555.6 L476.0 555.8 L477.0 555.8 L477.0 556.0 L478.0 556.0 L478.0 555.1 L479.0 555.1 L479.0 549.5 L480.0 549.5 L480.0 555.8 L481.0 555.8 L481.0 555.2 L482.0 555.2 L482.0 557.5 L483.0 557.5 L483.0 557.6 L484.0 557.6 L484.0 553.2 L485.0 553.2 L485.0 555.3 L486.0 555.3 L486.0 558.9 L487.0 558.9 L487.0 557.4 L488.0 557.4 L488.0 557.8 L489.0 557.8 L489.0 558.2 L490.0 558.2 L490.0 556.6 L491.0 556.6 L491.0 555.0 L492.0 555.0 L492.0 555.9 L493.0 555.9 L493.0 556.7 L494.0 556.7 L494.0 557.7 L495.0 557.7 L495.0 558.8 L496.0 558.8 L496.0 555.1 L497.0 555.1 L497.0 548.8 L498.0 548.8 L498.0 555.5 L499.0 555.5 L499.0 559.7 L500.0 559.7 L500.0 556.8 L501.0 556.8 L501.0 554.0 L502.0 554.0 L502.0 548.5 L503.0 548.5 L503.0 554.4 L504.0 554.4 L504.0 556.9 L505.0 556.9 L505.0 559.4 L506.0 559.4 L506.0 557.6 L507.0 557.6 L507.0 555.8 L508.0 555.8 L508.0 555.6 L509.0 555.6 L509.0 555.4 L510.0 555.4 L510.0 554.5 L511.0 554.5 L511.0 553.7 L512.0 553.7 L512.0 555.0 L513.0 555.0 L513.0 556.2 L514.0 556.2 L514.0 555.3 L515.0 555.3 L515.0 554.4 L516.0 554.4 L516.0 553.6 L517.0 553.6 L517.0 547.4 L518.0 547.4 L518.0 556.4 L519.0 556.4 L519.0 560.1 L520.0 560.1 L520.0 555.0 L521.0 555.0 L521.0 549.8 L522.0 549.8 L522.0 554.9 L523.0 554.9 L523.0 559.9 L524.0 559.9 L524.0 560.1 L525.0 560.1 L525.0 560.3 L526.0 560.3 L526.0 560.5 L527.0 560.5 L527.0 558.4 L528.0 558.4 L528.0 555.2 L529.0 555.2 L529.0 544.8 L530.0 544.8 L530.0 554.3 L531.0 554.3 L531.0 558.8 L532.0 558.8 L532.0 557.2 L533.0 557.2 L533.0 555.5 L534.0 555.5 L534.0 554.0 L535.0 554.0 L535.0 552.6 L536.0 552.6 L536.0 555.4 L537.0 555.4 L537.0 552.3 L538.0 552.3 L538.0 559.0 L539.0 559.0 L539.0 559.7 L540.0 559.7 L540.0 557.9 L541.0 557.9 L541.0 553.7 L542.0 553.7 L542.0 557.3 L543.0 557.3 L543.0 558.5 L544.0 558.5 L544.0 554.0 L545.0 554.0 L545.0 549.6 L546.0 549.6 L546.0 552.4 L547.0 552.4 L547.0 555.2 L548.0 555.2 L548.0 557.1 L549.0 557.1 L549.0 559.1 L550.0 559.1 L550.0 556.5 L551.0 556.5 L551.0 554.0 L552.0 554.0 L552.0 553.9 L553.0 553.9 L553.0 549.6 L554.0 549.6 L554.0 554.4 L555.0 554.4 L555.0 559.4 L556.0 559.4 L556.0 555.2 L557.0 555.2 L557.0 550.9 L558.0 550.9 L558.0 552.4 L559.0 552.4 L559.0 553.8 L560.0 553.8 L560.0 554.6 L561.0 554.6 L561.0 555.3 L562.0 555.3 L562.0 558.1 L563.0 558.1 L563.0 560.8 L564.0 560.8 L564.0 560.8 L565.0 560.8 L565.0 560.8 L566.0 560.8 L566.0 560.9 L567.0 560.9 L567.0 561.0 L568.0 561.0 L568.0 558.3 L569.0 558.3 L569.0 555.6 L570.0 555.6 L570.0 558.3 L571.0 558.3 L571.0 561.1 L572.0 561.1 L572.0 559.5 L573.0 559.5 L573.0 557.9 L574.0 557.9 L574.0 555.4 L575.0 555.4 L575.0 547.6 L576.0 547.6 L576.0 554.2 L577.0 554.2 L577.0 555.6 L578.0 555.6 L578.0 552.9 L579.0 552.9 L579.0 550.2 L580.0 550.2 L580.0 550.1 L581.0 550.1 L581.0 550.0 L582.0 550.0 L582.0 552.9 L583.0 552.9 L583.0 555.8 L584.0 555.8 L584.0 557.9 L585.0 557.9 L585.0 560.1 L586.0 560.1 L586.0 559.2 L587.0 559.2 L587.0 558.2 L588.0 558.2 L588.0 558.7 L589.0 558.7 L589.0 559.3 L590.0 559.3 L590.0 560.6 L591.0 560.6 L591.0 558.8 L592.0 558.8 L592.0 560.9 L593.0 560.9 L593.0 559.8 L594.0 559.8 L594.0 560.2 L595.0 560.2 L595.0 560.6 L596.0 560.6 L596.0 558.6 L597.0 558.6 L597.0 556.6 L598.0 556.6 L598.0 556.9 L599.0 556.9 L599.0 557.2 L600.0 557.2 L600.0 556.4 L601.0 556.4 L601.0 555.7 L602.0 555.7 L602.0 558.3 L603.0 558.3 L603.0 560.8 L604.0 560.8 L604.0 558.3 L605.0 558.3 L605.0 555.9 L606.0 555.9 L606.0 556.1 L607.0 556.1 L607.0 556.3 L608.0 556.3 L608.0 558.2 L609.0 558.2 L609.0 560.1 L610.0 560.1 L610.0 555.2 L611.0 555.2 L611.0 550.3 L612.0 550.3 L612.0 554.4 L613.0 554.4 L613.0 558.5 L614.0 558.5 L614.0 560.0 L615.0 560.0 L615.0 561.4 L616.0 561.4 L616.0 559.3 L617.0 559.3 L617.0 557.2 L618.0 557.2 L618.0 555.7 L619.0 555.7 L619.0 552.0 L620.0 552.0 L620.0 556.6 L621.0 556.6 L621.0 555.5 L622.0 555.5 L622.0 557.4 L623.0 557.4 L623.0 555.9 L624.0 555.9 L624.0 558.0 L625.0 558.0 L625.0 560.1 L626.0 560.1 L626.0 559.8 L627.0 559.8 L627.0 559.5 L628.0 559.5 L628.0 558.1 L629.0 558.1 L629.0 556.6 L630.0 556.6 L630.0 556.3 L631.0 556.3 L631.0 560.0 L632.0 560.0 L632.0 560.0 L633.0 560.0 L633.0 560.1 L634.0 560.1 L634.0 560.3 L635.0 560.3 L635.0 560.5 L636.0 560.5 L636.0 559.7 L637.0 559.7 L637.0 558.9 L638.0 558.9 L638.0 558.2 L639.0 558.2 L639.0 557.6 L640.0 557.6 L640.0 552.4 L641.0 552.4 L641.0 554.1 L642.0 554.1 L642.0 558.6 L643.0 558.6 L643.0 559.6 L644.0 559.6 L644.0 558.9 L645.0 558.9 L645.0 558.1 L646.0 558.1 L646.0 557.8 L647.0 557.8 L647.0 557.4 L648.0 557.4 L648.0 559.4 L649.0 559.4 L649.0 561.5 L650.0 561.5 L650.0 561.6 L651.0 561.6 L651.0 561.8 L652.0 561.8 L652.0 560.9 L653.0 560.9 L653.0 555.7 L654.0 555.7 L654.0 554.8 L655.0 554.8 L655.0 555.3 L656.0 555.3 L656.0 558.3 L657.0 558.3 L657.0 558.6 L658.0 558.6 L658.0 556.9 L659.0 556.9 L659.0 555.3 L660.0 555.3 L660.0 558.4 L661.0 558.4 L661.0 561.6 L662.0 561.6 L662.0 560.7 L663.0 560.7 L663.0 559.9 L664.0 559.9 L664.0 559.9 L665.0 559.9 L665.0 559.8 L666.0 559.8 L666.0 552.6 L667.0 552.6 L667.0 555.0 L668.0 555.0 L668.0 557.0 L669.0 557.0 L669.0 559.0 L670.0 559.0 L670.0 557.9 L671.0 557.9 L671.0 556.7 L672.0 556.7 L672.0 556.5 L673.0 556.5 L673.0 556.2 L674.0 556.2 L674.0 558.1 L675.0 558.1 L675.0 560.0 L676.0 560.0 L676.0 558.9 L677.0 558.9 L677.0 557.8 L678.0 557.8 L678.0 556.2 L679.0 556.2 L679.0 550.6 L680.0 550.6 L680.0 557.6 L681.0 557.6 L681.0 560.5 L682.0 560.5 L682.0 559.9 L683.0 559.9 L683.0 553.5 L684.0 553.5 L684.0 559.3 L685.0 559.3 L685.0 559.2 L686.0 559.2 L686.0 559.7 L687.0 559.7 L687.0 560.3 L688.0 560.3 L688.0 557.6 L689.0 557.6 L689.0 554.9 L690.0 554.9 L690.0 556.6 L691.0 556.6 L691.0 558.3 L692.0 558.3 L692.0 559.0 L693.0 559.0 L693.0 559.7 L694.0 559.7 L694.0 555.6 L695.0 555.6 L695.0 555.6 L696.0 555.6 L696.0 558.3 L697.0 558.3 L697.0 555.4 L698.0 555.4 L698.0 553.5 L699.0 553.5 L699.0 551.5 L700.0 551.5 L700.0 552.6 L701.0 552.6 L701.0 553.7 L702.0 553.7 L702.0 557.3 L703.0 557.3 L703.0 561.0 L704.0 561.0 L704.0 560.9 L705.0 560.9 L705.0 560.9 L706.0 560.9 L706.0 559.7 L707.0 559.7 L707.0 558.6 L708.0 558.6 L708.0 556.9 L709.0 556.9 L709.0 555.3 L710.0 555.3 L710.0 555.4 L711.0 555.4 L711.0 555.5 L712.0 555.5 L712.0 557.6 L713.0 557.6 L713.0 559.8 L714.0 559.8 L714.0 559.8 L715.0 559.8 L715.0 559.9 L716.0 559.9 L716.0 556.2 L717.0 556.2 L717.0 552.6 L718.0 552.6 L718.0 553.4 L719.0 553.4 L719.0 554.1 L720.0 554.1 L720.0 556.1 L721.0 556.1 L721.0 558.2 L722.0 558.2 L722.0 557.3 L723.0 557.3 L723.0 556.4 L724.0 556.4 L724.0 554.6 L725.0 554.6 L725.0 557.0 L726.0 557.0 L726.0 558.0 L727.0 558.0 L727.0 559.0 L728.0 559.0 L728.0 559.8 L729.0 559.8 L729.0 560.6 L730.0 560.6 L730.0 560.0 L731.0 560.0 L731.0 559.5 L732.0 559.5 L732.0 559.3 L733.0 559.3 L733.0 559.1 L734.0 559.1 L734.0 559.4 L735.0 559.4 L735.0 559.8 L736.0 559.8 L736.0 560.0 L737.0 560.0 L737.0 560.2 L738.0 560.2 L738.0 560.0 L739.0 560.0 L739.0 559.8 L740.0 559.8 L740.0 556.2 L741.0 556.2 L741.0 558.7 L742.0 558.7 L742.0 557.2 L743.0 557.2 L743.0 555.8 L744.0 555.8 L744.0 554.6 L745.0 554.6 L745.0 559.0 L746.0 559.0 L746.0 557.2 L747.0 557.2 L747.0 555.4 L748.0 555.4 L748.0 550.2 L749.0 550.2 L749.0 553.0 L750.0 553.0 L750.0 556.2 L751.0 556.2 L751.0 559.4 L752.0 559.4 L752.0 558.9 L753.0 558.9 L753.0 558.4 L754.0 558.4 L754.0 558.6 L755.0 558.6 L755.0 558.9 L756.0 558.9 L756.0 555.3 L757.0 555.3 L757.0 549.1 L758.0 549.1 L758.0 552.2 L759.0 552.2 L759.0 552.6 L760.0 552.6 L760.0 556.8 L761.0 556.8 L761.0 561.0 L762.0 561.0 L762.0 558.4 L763.0 558.4 L763.0 555.8 L764.0 555.8 L764.0 558.6 L765.0 558.6 L765.0 561.3 L766.0 561.3 L766.0 560.7 L767.0 560.7 L767.0 560.1 L768.0 560.1 L768.0 561.6 L769.0 561.6 L769.0 563.0 L770.0 563.0 L770.0 561.0 L771.0 561.0 L771.0 559.1 L772.0 559.1 L772.0 555.3 L773.0 555.3 L773.0 551.6 L774.0 551.6 L774.0 555.1 L775.0 555.1 L775.0 558.5 L776.0 558.5 L776.0 560.4 L777.0 560.4 L777.0 562.3 L778.0 562.3 L778.0 559.8 L779.0 559.8 L779.0 557.3 L780.0 557.3 L780.0 559.1 L781.0 559.1 L781.0 561.0 L782.0 561.0 L782.0 560.2 L783.0 560.2 L783.0 559.4 L784.0 559.4 L784.0 557.4 L785.0 557.4 L785.0 555.4 L786.0 555.4 L786.0 553.0 L787.0 553.0 L787.0 558.8 L788.0 558.8 L788.0 559.2 L789.0 559.2 L789.0 555.1 L790.0 555.1 L790.0 559.5 L791.0 559.5 L791.0 559.5 L792.0 559.5 L792.0 558.6 L793.0 558.6 L793.0 557.6 L794.0 557.6 L794.0 556.4 L795.0 556.4 L795.0 555.1 L796.0 555.1 L796.0 548.0 L797.0 548.0 L797.0 551.2 L798.0 551.2 L798.0 554.6 L799.0 554.6 L799.0 558.0 L800.0 558.0 L800.0 558.3 L801.0 558.3 L801.0 554.3 L802.0 554.3 L802.0 557.1 L803.0 557.1 L803.0 555.5 L804.0 555.5 L804.0 556.7 L805.0 556.7 L805.0 558.0 L806.0 558.0 L806.0 559.0 L807.0 559.0 L807.0 556.6 L808.0 556.6 L808.0 558.0 L809.0 558.0 L809.0 560.3 L810.0 560.3 L810.0 560.6 L811.0 560.6 L811.0 561.0 L812.0 561.0 L812.0 558.5 L813.0 558.5 L813.0 556.0 L814.0 556.0 L814.0 558.4 L815.0 558.4 L815.0 560.7 L816.0 560.7 L816.0 561.2 L817.0 561.2 L817.0 557.4 L818.0 557.4 L818.0 561.9 L819.0 561.9 L819.0 562.1 L820.0 562.1 L820.0 557.2 L821.0 557.2 L821.0 560.8 L822.0 560.8 L822.0 561.0 L823.0 561.0 L823.0 561.1 L824.0 561.1 L824.0 561.2 L825.0 561.2 L825.0 561.2 L826.0 561.2 L826.0 561.9 L827.0 561.9 L827.0 560.6 L828.0 560.6 L828.0 557.5 L829.0 557.5 L829.0 552.4 L830.0 552.4 L830.0 552.3 L831.0 552.3 L831.0 552.3 L832.0 552.3 L832.0 555.6 L833.0 555.6 L833.0 553.6 L834.0 553.6 L834.0 558.3 L835.0 558.3 L835.0 557.8 L836.0 557.8 L836.0 558.5 L837.0 558.5 L837.0 559.1 L838.0 559.1 L838.0 559.3 L839.0 559.3 L839.0 559.4 L840.0 559.4 L840.0 560.5 L841.0 560.5 L841.0 561.6 L842.0 561.6 L842.0 561.3 L843.0 561.3 L843.0 560.9 L844.0 560.9 L844.0 561.1 L845.0 561.1 L845.0 561.4 L846.0 561.4 L846.0 561.5 L847.0 561.5 L847.0 561.6 L848.0 561.6 L848.0 589.3 L847.0 589.3 L847.0 592.6 L846.0 592.6 L846.0 595.9 L845.0 595.9 L845.0 599.1 L844.0 599.1 L844.0 594.5 L843.0 594.5 L843.0 592.3 L842.0 592.3 L842.0 592.7 L841.0 592.7 L841.0 590.5 L840.0 590.5 L840.0 588.2 L839.0 588.2 L839.0 589.1 L838.0 589.1 L838.0 590.0 L837.0 590.0 L837.0 590.1 L836.0 590.1 L836.0 595.6 L835.0 595.6 L835.0 589.4 L834.0 589.4 L834.0 588.5 L833.0 588.5 L833.0 589.7 L832.0 589.7 L832.0 594.6 L831.0 594.6 L831.0 590.6 L830.0 590.6 L830.0 590.2 L829.0 590.2 L829.0 591.2 L828.0 591.2 L828.0 592.2 L827.0 592.2 L827.0 594.8 L826.0 594.8 L826.0 586.1 L825.0 586.1 L825.0 585.9 L824.0 585.9 L824.0 585.7 L823.0 585.7 L823.0 586.3 L822.0 586.3 L822.0 587.0 L821.0 587.0 L821.0 586.7 L820.0 586.7 L820.0 590.9 L819.0 590.9 L819.0 587.4 L818.0 587.4 L818.0 588.4 L817.0 588.4 L817.0 593.8 L816.0 593.8 L816.0 592.6 L815.0 592.6 L815.0 588.2 L814.0 588.2 L814.0 588.2 L813.0 588.2 L813.0 586.4 L812.0 586.4 L812.0 584.7 L811.0 584.7 L811.0 591.6 L810.0 591.6 L810.0 588.0 L809.0 588.0 L809.0 586.1 L808.0 586.1 L808.0 584.2 L807.0 584.2 L807.0 590.5 L806.0 590.5 L806.0 585.9 L805.0 585.9 L805.0 593.5 L804.0 593.5 L804.0 589.7 L803.0 589.7 L803.0 588.0 L802.0 588.0 L802.0 588.6 L801.0 588.6 L801.0 589.1 L800.0 589.1 L800.0 592.0 L799.0 592.0 L799.0 590.6 L798.0 590.6 L798.0 589.1 L797.0 589.1 L797.0 591.4 L796.0 591.4 L796.0 589.3 L795.0 589.3 L795.0 592.4 L794.0 592.4 L794.0 595.6 L793.0 595.6 L793.0 598.7 L792.0 598.7 L792.0 593.2 L791.0 593.2 L791.0 590.0 L790.0 590.0 L790.0 586.7 L789.0 586.7 L789.0 587.8 L788.0 587.8 L788.0 591.0 L787.0 591.0 L787.0 588.1 L786.0 588.1 L786.0 587.3 L785.0 587.3 L785.0 586.1 L784.0 586.1 L784.0 584.9 L783.0 584.9 L783.0 586.1 L782.0 586.1 L782.0 587.3 L781.0 587.3 L781.0 588.4 L780.0 588.4 L780.0 584.0 L779.0 584.0 L779.0 585.1 L778.0 585.1 L778.0 586.2 L777.0 586.2 L777.0 586.0 L776.0 586.0 L776.0 585.8 L775.0 585.8 L775.0 588.8 L774.0 588.8 L774.0 591.8 L773.0 591.8 L773.0 590.4 L772.0 590.4 L772.0 589.0 L771.0 589.0 L771.0 594.3 L770.0 594.3 L770.0 589.3 L769.0 589.3 L769.0 588.3 L768.0 588.3 L768.0 587.3 L767.0 587.3 L767.0 587.4 L766.0 587.4 L766.0 587.4 L765.0 587.4 L765.0 586.8 L764.0 586.8 L764.0 586.2 L763.0 586.2 L763.0 591.4 L762.0 591.4 L762.0 586.3 L761.0 586.3 L761.0 585.9 L760.0 585.9 L760.0 585.5 L759.0 585.5 L759.0 585.5 L758.0 585.5 L758.0 590.1 L757.0 590.1 L757.0 590.5 L756.0 590.5 L756.0 595.5 L755.0 595.5 L755.0 591.9 L754.0 591.9 L754.0 588.4 L753.0 588.4 L753.0 587.3 L752.0 587.3 L752.0 586.2 L751.0 586.2 L751.0 586.8 L750.0 586.8 L750.0 587.4 L749.0 587.4 L749.0 586.5 L748.0 586.5 L748.0 585.6 L747.0 585.6 L747.0 590.1 L746.0 590.1 L746.0 594.6 L745.0 594.6 L745.0 590.7 L744.0 590.7 L744.0 586.8 L743.0 586.8 L743.0 586.7 L742.0 586.7 L742.0 586.6 L741.0 586.6 L741.0 587.2 L740.0 587.2 L740.0 587.7 L739.0 587.7 L739.0 587.0 L738.0 587.0 L738.0 586.3 L737.0 586.3 L737.0 587.2 L736.0 587.2 L736.0 588.1 L735.0 588.1 L735.0 588.7 L734.0 588.7 L734.0 589.3 L733.0 589.3 L733.0 590.5 L732.0 590.5 L732.0 591.7 L731.0 591.7 L731.0 589.2 L730.0 589.2 L730.0 588.8 L729.0 588.8 L729.0 586.4 L728.0 586.4 L728.0 586.1 L727.0 586.1 L727.0 588.8 L726.0 588.8 L726.0 591.6 L725.0 591.6 L725.0 588.7 L724.0 588.7 L724.0 585.8 L723.0 585.8 L723.0 588.7 L722.0 588.7 L722.0 591.5 L721.0 591.5 L721.0 594.9 L720.0 594.9 L720.0 590.7 L719.0 590.7 L719.0 588.8 L718.0 588.8 L718.0 586.9 L717.0 586.9 L717.0 587.6 L716.0 587.6 L716.0 588.3 L715.0 588.3 L715.0 587.4 L714.0 587.4 L714.0 590.4 L713.0 590.4 L713.0 588.3 L712.0 588.3 L712.0 590.2 L711.0 590.2 L711.0 592.9 L710.0 592.9 L710.0 600.4 L709.0 600.4 L709.0 595.0 L708.0 595.0 L708.0 592.9 L707.0 592.9 L707.0 589.1 L706.0 589.1 L706.0 588.2 L705.0 588.2 L705.0 587.7 L704.0 587.7 L704.0 587.2 L703.0 587.2 L703.0 590.6 L702.0 590.6 L702.0 593.9 L701.0 593.9 L701.0 589.6 L700.0 589.6 L700.0 585.3 L699.0 585.3 L699.0 585.7 L698.0 585.7 L698.0 586.0 L697.0 586.0 L697.0 588.5 L696.0 588.5 L696.0 590.9 L695.0 590.9 L695.0 588.0 L694.0 588.0 L694.0 585.0 L693.0 585.0 L693.0 586.1 L692.0 586.1 L692.0 587.2 L691.0 587.2 L691.0 590.6 L690.0 590.6 L690.0 586.9 L689.0 586.9 L689.0 589.2 L688.0 589.2 L688.0 591.6 L687.0 591.6 L687.0 590.0 L686.0 590.0 L686.0 588.5 L685.0 588.5 L685.0 588.2 L684.0 588.2 L684.0 587.9 L683.0 587.9 L683.0 589.5 L682.0 589.5 L682.0 591.1 L681.0 591.1 L681.0 592.7 L680.0 592.7 L680.0 597.1 L679.0 597.1 L679.0 594.6 L678.0 594.6 L678.0 600.5 L677.0 600.5 L677.0 591.6 L676.0 591.6 L676.0 588.3 L675.0 588.3 L675.0 586.7 L674.0 586.7 L674.0 585.0 L673.0 585.0 L673.0 587.1 L672.0 587.1 L672.0 589.2 L671.0 589.2 L671.0 589.2 L670.0 589.2 L670.0 589.2 L669.0 589.2 L669.0 586.7 L668.0 586.7 L668.0 584.2 L667.0 584.2 L667.0 585.8 L666.0 585.8 L666.0 587.3 L665.0 587.3 L665.0 586.8 L664.0 586.8 L664.0 586.2 L663.0 586.2 L663.0 587.1 L662.0 587.1 L662.0 588.0 L661.0 588.0 L661.0 588.0 L660.0 588.0 L660.0 588.1 L659.0 588.1 L659.0 587.8 L658.0 587.8 L658.0 590.6 L657.0 590.6 L657.0 586.0 L656.0 586.0 L656.0 584.5 L655.0 584.5 L655.0 584.9 L654.0 584.9 L654.0 585.3 L653.0 585.3 L653.0 588.7 L652.0 588.7 L652.0 596.2 L651.0 596.2 L651.0 593.2 L650.0 593.2 L650.0 598.4 L649.0 598.4 L649.0 590.4 L648.0 590.4 L648.0 586.4 L647.0 586.4 L647.0 588.1 L646.0 588.1 L646.0 589.7 L645.0 589.7 L645.0 589.8 L644.0 589.8 L644.0 589.9 L643.0 589.9 L643.0 587.2 L642.0 587.2 L642.0 584.5 L641.0 584.5 L641.0 584.5 L640.0 584.5 L640.0 587.8 L639.0 587.8 L639.0 593.0 L638.0 593.0 L638.0 591.5 L637.0 591.5 L637.0 589.8 L636.0 589.8 L636.0 593.5 L635.0 593.5 L635.0 588.3 L634.0 588.3 L634.0 588.6 L633.0 588.6 L633.0 589.8 L632.0 589.8 L632.0 591.0 L631.0 591.0 L631.0 587.9 L630.0 587.9 L630.0 584.7 L629.0 584.7 L629.0 586.0 L628.0 586.0 L628.0 587.2 L627.0 587.2 L627.0 586.7 L626.0 586.7 L626.0 586.2 L625.0 586.2 L625.0 587.6 L624.0 587.6 L624.0 589.0 L623.0 589.0 L623.0 589.0 L622.0 589.0 L622.0 588.9 L621.0 588.9 L621.0 593.2 L620.0 593.2 L620.0 593.0 L619.0 593.0 L619.0 590.3 L618.0 590.3 L618.0 587.6 L617.0 587.6 L617.0 585.9 L616.0 585.9 L616.0 584.2 L615.0 584.2 L615.0 586.9 L614.0 586.9 L614.0 589.6 L613.0 589.6 L613.0 589.1 L612.0 589.1 L612.0 588.5 L611.0 588.5 L611.0 586.3 L610.0 586.3 L610.0 584.1 L609.0 584.1 L609.0 587.5 L608.0 587.5 L608.0 590.9 L607.0 590.9 L607.0 588.6 L606.0 588.6 L606.0 586.4 L605.0 586.4 L605.0 586.9 L604.0 586.9 L604.0 587.4 L603.0 587.4 L603.0 587.1 L602.0 587.1 L602.0 586.8 L601.0 586.8 L601.0 592.6 L600.0 592.6 L600.0 588.3 L599.0 588.3 L599.0 588.1 L598.0 588.1 L598.0 587.9 L597.0 587.9 L597.0 587.9 L596.0 587.9 L596.0 587.9 L595.0 587.9 L595.0 587.6 L594.0 587.6 L594.0 587.2 L593.0 587.2 L593.0 587.1 L592.0 587.1 L592.0 587.0 L591.0 587.0 L591.0 586.6 L590.0 586.6 L590.0 586.2 L589.0 586.2 L589.0 587.6 L588.0 587.6 L588.0 594.0 L587.0 594.0 L587.0 587.4 L586.0 587.4 L586.0 585.7 L585.0 585.7 L585.0 586.5 L584.0 586.5 L584.0 587.4 L583.0 587.4 L583.0 586.8 L582.0 586.8 L582.0 586.2 L581.0 586.2 L581.0 585.9 L580.0 585.9 L580.0 585.6 L579.0 585.6 L579.0 585.1 L578.0 585.1 L578.0 584.7 L577.0 584.7 L577.0 586.8 L576.0 586.8 L576.0 592.1 L575.0 592.1 L575.0 589.1 L574.0 589.1 L574.0 591.8 L573.0 591.8 L573.0 587.6 L572.0 587.6 L572.0 586.0 L571.0 586.0 L571.0 588.1 L570.0 588.1 L570.0 590.3 L569.0 590.3 L569.0 589.4 L568.0 589.4 L568.0 588.6 L567.0 588.6 L567.0 590.8 L566.0 590.8 L566.0 593.1 L565.0 593.1 L565.0 591.6 L564.0 591.6 L564.0 590.0 L563.0 590.0 L563.0 590.0 L562.0 590.0 L562.0 589.9 L561.0 589.9 L561.0 588.0 L560.0 588.0 L560.0 586.1 L559.0 586.1 L559.0 592.4 L558.0 592.4 L558.0 586.9 L557.0 586.9 L557.0 586.2 L556.0 586.2 L556.0 585.5 L555.0 585.5 L555.0 589.9 L554.0 589.9 L554.0 594.4 L553.0 594.4 L553.0 593.3 L552.0 593.3 L552.0 592.2 L551.0 592.2 L551.0 589.4 L550.0 589.4 L550.0 586.6 L549.0 586.6 L549.0 587.9 L548.0 587.9 L548.0 589.2 L547.0 589.2 L547.0 588.5 L546.0 588.5 L546.0 591.5 L545.0 591.5 L545.0 587.1 L544.0 587.1 L544.0 586.4 L543.0 586.4 L543.0 587.2 L542.0 587.2 L542.0 588.0 L541.0 588.0 L541.0 588.1 L540.0 588.1 L540.0 588.3 L539.0 588.3 L539.0 591.8 L538.0 591.8 L538.0 595.4 L537.0 595.4 L537.0 593.9 L536.0 593.9 L536.0 592.3 L535.0 592.3 L535.0 589.4 L534.0 589.4 L534.0 589.5 L533.0 589.5 L533.0 586.6 L532.0 586.6 L532.0 586.8 L531.0 586.8 L531.0 592.2 L530.0 592.2 L530.0 592.4 L529.0 592.4 L529.0 592.8 L528.0 592.8 L528.0 586.7 L527.0 586.7 L527.0 586.7 L526.0 586.7 L526.0 586.7 L525.0 586.7 L525.0 587.8 L524.0 587.8 L524.0 588.9 L523.0 588.9 L523.0 589.0 L522.0 589.0 L522.0 592.0 L521.0 592.0 L521.0 587.7 L520.0 587.7 L520.0 586.3 L519.0 586.3 L519.0 590.9 L518.0 590.9 L518.0 592.8 L517.0 592.8 L517.0 587.8 L516.0 587.8 L516.0 588.4 L515.0 588.4 L515.0 594.9 L514.0 594.9 L514.0 591.4 L513.0 591.4 L513.0 590.2 L512.0 590.2 L512.0 589.1 L511.0 589.1 L511.0 591.9 L510.0 591.9 L510.0 594.7 L509.0 594.7 L509.0 591.2 L508.0 591.2 L508.0 591.5 L507.0 591.5 L507.0 588.0 L506.0 588.0 L506.0 588.2 L505.0 588.2 L505.0 594.5 L504.0 594.5 L504.0 590.9 L503.0 590.9 L503.0 589.3 L502.0 589.3 L502.0 587.8 L501.0 587.8 L501.0 591.1 L500.0 591.1 L500.0 594.5 L499.0 594.5 L499.0 597.8 L498.0 597.8 L498.0 593.0 L497.0 593.0 L497.0 591.4 L496.0 591.4 L496.0 589.7 L495.0 589.7 L495.0 588.4 L494.0 588.4 L494.0 592.6 L493.0 592.6 L493.0 590.7 L492.0 590.7 L492.0 594.3 L491.0 594.3 L491.0 591.6 L490.0 591.6 L490.0 588.8 L489.0 588.8 L489.0 587.8 L488.0 587.8 L488.0 592.6 L487.0 592.6 L487.0 587.0 L486.0 587.0 L486.0 587.1 L485.0 587.1 L485.0 589.8 L484.0 589.8 L484.0 587.0 L483.0 587.0 L483.0 588.1 L482.0 588.1 L482.0 589.1 L481.0 589.1 L481.0 588.6 L480.0 588.6 L480.0 588.0 L479.0 588.0 L479.0 590.7 L478.0 590.7 L478.0 593.4 L477.0 593.4 L477.0 591.4 L476.0 591.4 L476.0 594.1 L475.0 594.1 L475.0 588.9 L474.0 588.9 L474.0 588.5 L473.0 588.5 L473.0 590.6 L472.0 590.6 L472.0 592.7 L471.0 592.7 L471.0 592.9 L470.0 592.9 L470.0 593.1 L469.0 593.1 L469.0 590.9 L468.0 590.9 L468.0 588.7 L467.0 588.7 L467.0 587.3 L466.0 587.3 L466.0 585.8 L465.0 585.8 L465.0 590.2 L464.0 590.2 L464.0 589.7 L463.0 589.7 L463.0 590.9 L462.0 590.9 L462.0 592.0 L461.0 592.0 L461.0 588.9 L460.0 588.9 L460.0 585.9 L459.0 585.9 L459.0 586.4 L458.0 586.4 L458.0 591.5 L457.0 591.5 L457.0 594.1 L456.0 594.1 L456.0 589.4 L455.0 589.4 L455.0 589.0 L454.0 589.0 L454.0 588.6 L453.0 588.6 L453.0 590.0 L452.0 590.0 L452.0 591.4 L451.0 591.4 L451.0 598.4 L450.0 598.4 L450.0 596.6 L449.0 596.6 L449.0 591.9 L448.0 591.9 L448.0 587.1 L447.0 587.1 L447.0 590.1 L446.0 590.1 L446.0 593.0 L445.0 593.0 L445.0 592.7 L444.0 592.7 L444.0 592.3 L443.0 592.3 L443.0 590.2 L442.0 590.2 L442.0 588.2 L441.0 588.2 L441.0 587.9 L440.0 587.9 L440.0 587.6 L439.0 587.6 L439.0 595.0 L438.0 595.0 L438.0 592.6 L437.0 592.6 L437.0 596.0 L436.0 596.0 L436.0 588.6 L435.0 588.6 L435.0 588.5 L434.0 588.5 L434.0 588.5 L433.0 588.5 L433.0 588.7 L432.0 588.7 L432.0 588.9 L431.0 588.9 L431.0 592.8 L430.0 592.8 L430.0 592.0 L429.0 592.0 L429.0 591.4 L428.0 591.4 L428.0 590.9 L427.0 590.9 L427.0 591.3 L426.0 591.3 L426.0 597.5 L425.0 597.5 L425.0 590.8 L424.0 590.8 L424.0 589.8 L423.0 589.8 L423.0 588.6 L422.0 588.6 L422.0 592.8 L421.0 592.8 L421.0 589.9 L420.0 589.9 L420.0 594.3 L419.0 594.3 L419.0 588.8 L418.0 588.8 L418.0 589.2 L417.0 589.2 L417.0 589.7 L416.0 589.7 L416.0 590.1 L415.0 590.1 L415.0 588.9 L414.0 588.9 L414.0 587.6 L413.0 587.6 L413.0 593.0 L412.0 593.0 L412.0 591.6 L411.0 591.6 L411.0 590.2 L410.0 590.2 L410.0 588.9 L409.0 588.9 L409.0 589.5 L408.0 589.5 L408.0 590.1 L407.0 590.1 L407.0 591.0 L406.0 591.0 L406.0 591.9 L405.0 591.9 L405.0 589.9 L404.0 589.9 L404.0 587.9 L403.0 587.9 L403.0 588.3 L402.0 588.3 L402.0 591.2 L401.0 591.2 L401.0 589.9 L400.0 589.9 L400.0 593.4 L399.0 593.4 L399.0 589.5 L398.0 589.5 L398.0 588.0 L397.0 588.0 L397.0 587.6 L396.0 587.6 L396.0 587.1 L395.0 587.1 L395.0 591.8 L394.0 591.8 L394.0 596.5 L393.0 596.5 L393.0 594.3 L392.0 594.3 L392.0 592.1 L391.0 592.1 L391.0 594.6 L390.0 594.6 L390.0 587.0 L389.0 587.0 L389.0 592.2 L388.0 592.2 L388.0 597.3 L387.0 597.3 L387.0 593.2 L386.0 593.2 L386.0 591.5 L385.0 591.5 L385.0 592.1 L384.0 592.1 L384.0 595.1 L383.0 595.1 L383.0 591.7 L382.0 591.7 L382.0 588.2 L381.0 588.2 L381.0 590.3 L380.0 590.3 L380.0 592.4 L379.0 592.4 L379.0 590.6 L378.0 590.6 L378.0 588.8 L377.0 588.8 L377.0 588.6 L376.0 588.6 L376.0 588.4 L375.0 588.4 L375.0 593.3 L374.0 593.3 L374.0 594.4 L373.0 594.4 L373.0 591.7 L372.0 591.7 L372.0 591.2 L371.0 591.2 L371.0 588.9 L370.0 588.9 L370.0 586.5 L369.0 586.5 L369.0 590.0 L368.0 590.0 L368.0 593.4 L367.0 593.4 L367.0 590.1 L366.0 590.1 L366.0 586.9 L365.0 586.9 L365.0 589.5 L364.0 589.5 L364.0 596.1 L363.0 596.1 L363.0 589.3 L362.0 589.3 L362.0 586.5 L361.0 586.5 L361.0 588.2 L360.0 588.2 L360.0 589.9 L359.0 589.9 L359.0 589.9 L358.0 589.9 L358.0 589.9 L357.0 589.9 L357.0 591.8 L356.0 591.8 L356.0 597.6 L355.0 597.6 L355.0 591.3 L354.0 591.3 L354.0 588.9 L353.0 588.9 L353.0 589.3 L352.0 589.3 L352.0 589.6 L351.0 589.6 L351.0 589.0 L350.0 589.0 L350.0 588.3 L349.0 588.3 L349.0 590.6 L348.0 590.6 L348.0 593.0 L347.0 593.0 L347.0 589.8 L346.0 589.8 L346.0 586.7 L345.0 586.7 L345.0 589.6 L344.0 589.6 L344.0 592.6 L343.0 592.6 L343.0 590.9 L342.0 590.9 L342.0 589.2 L341.0 589.2 L341.0 594.5 L340.0 594.5 L340.0 588.5 L339.0 588.5 L339.0 589.2 L338.0 589.2 L338.0 590.0 L337.0 590.0 L337.0 591.7 L336.0 591.7 L336.0 593.5 L335.0 593.5 L335.0 591.3 L334.0 591.3 L334.0 594.0 L333.0 594.0 L333.0 591.0 L332.0 591.0 L332.0 592.8 L331.0 592.8 L331.0 595.6 L330.0 595.6 L330.0 598.3 L329.0 598.3 L329.0 593.5 L328.0 593.5 L328.0 593.8 L327.0 593.8 L327.0 588.4 L326.0 588.4 L326.0 588.1 L325.0 588.1 L325.0 587.4 L324.0 587.4 L324.0 586.6 L323.0 586.6 L323.0 586.6 L322.0 586.6 L322.0 586.6 L321.0 586.6 L321.0 591.0 L320.0 591.0 L320.0 598.5 L319.0 598.5 L319.0 591.2 L318.0 591.2 L318.0 586.9 L317.0 586.9 L317.0 586.6 L316.0 586.6 L316.0 586.3 L315.0 586.3 L315.0 587.0 L314.0 587.0 L314.0 587.6 L313.0 587.6 L313.0 587.8 L312.0 587.8 L312.0 587.9 L311.0 587.9 L311.0 587.4 L310.0 587.4 L310.0 586.9 L309.0 586.9 L309.0 587.6 L308.0 587.6 L308.0 588.3 L307.0 588.3 L307.0 592.3 L306.0 592.3 L306.0 589.3 L305.0 589.3 L305.0 588.0 L304.0 588.0 L304.0 586.8 L303.0 586.8 L303.0 588.6 L302.0 588.6 L302.0 590.4 L301.0 590.4 L301.0 591.1 L300.0 591.1 L300.0 591.9 L299.0 591.9 L299.0 589.6 L298.0 589.6 L298.0 587.4 L297.0 587.4 L297.0 587.1 L296.0 587.1 L296.0 586.8 L295.0 586.8 L295.0 589.2 L294.0 589.2 L294.0 591.6 L293.0 591.6 L293.0 589.2 L292.0 589.2 L292.0 586.8 L291.0 586.8 L291.0 586.9 L290.0 586.9 L290.0 587.0 L289.0 587.0 L289.0 586.7 L288.0 586.7 L288.0 586.3 L287.0 586.3 L287.0 586.8 L286.0 586.8 L286.0 587.4 L285.0 587.4 L285.0 587.7 L284.0 587.7 L284.0 588.1 L283.0 588.1 L283.0 588.6 L282.0 588.6 L282.0 589.0 L281.0 589.0 L281.0 593.2 L280.0 593.2 L280.0 587.6 L279.0 587.6 L279.0 587.3 L278.0 587.3 L278.0 586.9 L277.0 586.9 L277.0 587.5 L276.0 587.5 L276.0 590.4 L275.0 590.4 L275.0 591.1 L274.0 591.1 L274.0 599.7 L273.0 599.7 L273.0 590.1 L272.0 590.1 L272.0 586.0 L271.0 586.0 L271.0 587.6 L270.0 587.6 L270.0 589.2 L269.0 589.2 L269.0 589.7 L268.0 589.7 L268.0 589.5 L267.0 589.5 L267.0 586.2 L266.0 586.2 L266.0 587.0 L265.0 587.0 Z" fill="#cbccdb" clip-path="url(#c2)"/>
<rect x="263.9" y="437.5" width="1.1" height="191" fill="#ff6b7e"/>
<path d="M260 633.2 L264.45 626.2 L268.9 633.2 Z" fill="#ff6b7e"/>
<rect x="768.8" y="437.5" width="1.1" height="191" fill="#ff6b7e"/>
<path d="M764.9 633.2 L769.35 626.2 L773.8 633.2 Z" fill="#ff6b7e"/>
</svg>
<div style="left:236.9px;top:658.5px;width:20.6px;height:7.8px;background:#5c5d7b;border-radius:2px;box-shadow:0 0 0 1px #27283a"></div>
<div style="left:258.9px;top:658.5px;width:600.9px;height:7.8px;background:#5c5d7b;border-radius:2px;box-shadow:0 0 0 1px #27283a"></div>
<div style="left:861px;top:658.5px;width:21.4px;height:7.8px;background:#5c5d7b;border-radius:2px;box-shadow:0 0 0 1px #27283a"></div>
<div style="left:246.3px;top:661.4px;width:2px;height:2px;background:#d4d5e3;border-radius:1px;"></div>
<div style="left:870.7px;top:661.9px;width:3.2px;height:1px;background:#d4d5e3;border-radius:0px;"></div>
<div style="left:871.8px;top:660.8px;width:1px;height:3.2px;background:#d4d5e3;border-radius:0px;"></div>
<div style="left:33px;top:695.6px;width:1049px;height:28px;background:linear-gradient(#565776,#525371);border-radius:0px;"></div>
<svg style="position:absolute;left:42px;top:700px;overflow:visible;" width="24" height="20" viewBox="0 0 24 20"><path d="M5 11 L7.2 11 L8.2 8 L9.4 4.2 L10.6 15.3 L12.4 7 L13.5 14 L15.2 10 L16 12 L21 11" fill="none" stroke="#8f90aa" stroke-width="1.1" stroke-linejoin="round"/></svg>
<div class="t" style="left:72px;top:706.87px;font-size:9.3px;color:#e3e3ef;font-weight:700;letter-spacing:1.58px;transform:scaleX(0.769);transform-origin:0 0;">SOUNDS</div>
<div style="left:229px;top:700.8px;width:60.7px;height:17.7px;background:#40415a;border-radius:3px;"></div>
<div class="t" style="left:245.48px;top:705.63px;font-size:8.31px;color:#9d9eb7;font-weight:400;letter-spacing:1.41px;transform:scaleX(0.962);transform-origin:0 0;-webkit-text-stroke:0.3px #9d9eb7;">HOLD</div>
<div style="left:295.1px;top:699.5px;width:1px;height:20.5px;background:#3a3b52;border-radius:0px;"></div>
<svg style="position:absolute;left:305px;top:700px;overflow:visible;" width="25" height="18" viewBox="0 0 25 18"><circle cx="11.0" cy="7.4" r="1.35" fill="#9d9eb7"/><circle cx="15.6" cy="7.4" r="1.35" fill="#9d9eb7"/><circle cx="20.3" cy="7.4" r="1.35" fill="#9d9eb7"/><circle cx="6.3" cy="12.1" r="1.35" fill="#9d9eb7"/><circle cx="11.0" cy="12.1" r="1.35" fill="#9d9eb7"/><circle cx="15.6" cy="12.1" r="1.35" fill="#9d9eb7"/></svg>
<div class="t" style="left:335.1px;top:706.71px;font-size:9.3px;color:#e3e3ef;font-weight:700;letter-spacing:1.58px;transform:scaleX(0.752);transform-origin:0 0;">SEQUENCERS</div>
<div style="left:491.8px;top:700.8px;width:60.2px;height:17.7px;background:#40415a;border-radius:3px;"></div>
<div class="t" style="left:508.24px;top:705.63px;font-size:8.31px;color:#9d9eb7;font-weight:400;letter-spacing:1.41px;transform:scaleX(0.977);transform-origin:0 0;-webkit-text-stroke:0.3px #9d9eb7;">HOLD</div>
<div style="left:557.6px;top:699.5px;width:1px;height:20.5px;background:#3a3b52;border-radius:0px;"></div>
<svg style="position:absolute;left:570px;top:700px;overflow:visible;" width="22" height="20" viewBox="0 0 22 20"><path d="M6.2 14.7 L10.6 10.4" stroke="#a4a5bd" stroke-width="1.3" stroke-linecap="round"/><line x1="13.60" y1="8.70" x2="16.90" y2="8.70" stroke="#a4a5bd" stroke-width="1.1"/><line x1="13.13" y1="9.83" x2="15.46" y2="12.16" stroke="#a4a5bd" stroke-width="1.1"/><line x1="12.00" y1="10.30" x2="12.00" y2="13.60" stroke="#a4a5bd" stroke-width="1.1"/><line x1="10.40" y1="8.70" x2="7.10" y2="8.70" stroke="#a4a5bd" stroke-width="1.1"/><line x1="10.87" y1="7.57" x2="8.54" y2="5.24" stroke="#a4a5bd" stroke-width="1.1"/><line x1="12.00" y1="7.10" x2="12.00" y2="3.80" stroke="#a4a5bd" stroke-width="1.1"/><line x1="13.13" y1="7.57" x2="15.46" y2="5.24" stroke="#a4a5bd" stroke-width="1.1"/></svg>
<div class="t" style="left:597.48px;top:706.87px;font-size:9.3px;color:#e3e3ef;font-weight:700;letter-spacing:1.58px;transform:scaleX(0.773);transform-origin:0 0;">REMIXES</div>
<div style="left:673.2px;top:700.8px;width:58.8px;height:17.9px;background:#40415a;border-radius:3px;"></div>
<div class="t" style="left:677.52px;top:705.63px;font-size:8.31px;color:#9d9eb7;font-weight:400;letter-spacing:1.41px;transform:scaleX(0.903);transform-origin:0 0;-webkit-text-stroke:0.3px #9d9eb7;">GENERATE</div>
<div style="left:737.4px;top:700.8px;width:58.8px;height:17.9px;background:#40415a;border-radius:3px;"></div>
<div class="t" style="left:752.1px;top:705.63px;font-size:8.31px;color:#9d9eb7;font-weight:400;letter-spacing:1.41px;transform:scaleX(0.969);transform-origin:0 0;-webkit-text-stroke:0.3px #9d9eb7;">MOVE</div>
<div style="left:802px;top:700.8px;width:58.9px;height:17.9px;background:#40415a;border-radius:3px;"></div>
<div class="t" style="left:818.38px;top:705.63px;font-size:8.31px;color:#9d9eb7;font-weight:400;letter-spacing:1.41px;transform:scaleX(0.912);transform-origin:0 0;-webkit-text-stroke:0.3px #9d9eb7;">LOCK</div>
<div style="left:865.9px;top:700.8px;width:59.2px;height:17.9px;background:#40415a;border-radius:3px;"></div>
<div class="t" style="left:879.1px;top:705.63px;font-size:8.31px;color:#9d9eb7;font-weight:400;letter-spacing:1.41px;transform:scaleX(0.962);transform-origin:0 0;-webkit-text-stroke:0.3px #9d9eb7;">CLEAR</div>
<div style="left:930.1px;top:700.8px;width:59.3px;height:17.9px;background:#40415a;border-radius:3px;"></div>
<div class="t" style="left:933.1px;top:705.63px;font-size:8.31px;color:#9d9eb7;font-weight:400;letter-spacing:1.41px;transform:scaleX(0.926);transform-origin:0 0;-webkit-text-stroke:0.3px #9d9eb7;">CLEAR ALL</div>
<div style="left:995.3px;top:700.8px;width:59px;height:17.9px;background:#40415a;border-radius:3px;"></div>
<div class="t" style="left:1010.48px;top:705.63px;font-size:8.31px;color:#9d9eb7;font-weight:400;letter-spacing:1.41px;transform:scaleX(0.976);transform-origin:0 0;-webkit-text-stroke:0.3px #9d9eb7;">HOLD</div>
<div style="left:1059px;top:700.8px;width:19.1px;height:17.9px;background:#40415a;border-radius:3px;"></div>
<div class="t" style="left:1065px;top:705.39px;font-size:8.31px;color:#9d9eb7;font-weight:400;letter-spacing:1.41px;transform:scaleX(1.034);transform-origin:0 0;-webkit-text-stroke:0.3px #9d9eb7;">Q</div>
<div style="left:33px;top:723.6px;width:1049px;height:76.4px;background:#26273a;border-radius:0 0 10px 10px;"></div>
<div style="left:33px;top:725px;width:36.85px;height:75px;background:linear-gradient(#50516d,#53546f);border-radius:3px 0px 3px 10px;"></div>
<div style="left:33px;top:796px;width:36.85px;height:4px;background:#d9528a;border-radius:0 0 3px 10px;"></div>
<div class="t" style="left:46.14px;top:772.25px;font-size:9.01px;color:#e8e8f1;font-weight:700;letter-spacing:1.53px;transform:scaleX(0.737);transform-origin:0 0;">C1</div>
<div style="left:71.05px;top:725px;width:36.25px;height:75px;background:linear-gradient(#50516d,#53546f);border-radius:0px 0px 3px 3px;"></div>
<div style="left:71.05px;top:796px;width:36.25px;height:4px;background:#e6e678;border-radius:0 0 3px 3px;"></div>
<div class="t" style="left:87px;top:779.94px;font-size:7.89px;color:#e8e8f1;font-weight:700;letter-spacing:0.47px;transform:scaleX(0.982);transform-origin:0 0;">3</div>
<div style="left:108.5px;top:725px;width:36.25px;height:75px;background:linear-gradient(#50516d,#53546f);border-radius:0px 3px 3px 3px;"></div>
<div style="left:108.5px;top:796px;width:36.25px;height:4px;background:#4fe0dc;border-radius:0 0 3px 3px;"></div>
<div class="t" style="left:125px;top:779.94px;font-size:7.89px;color:#e8e8f1;font-weight:700;letter-spacing:0.47px;transform:scaleX(0.982);transform-origin:0 0;">5</div>
<div style="left:145.95px;top:725px;width:36.25px;height:75px;background:linear-gradient(#50516d,#53546f);border-radius:3px 0px 3px 3px;"></div>
<div style="left:145.95px;top:796px;width:36.25px;height:4px;background:#7cc2f4;border-radius:0 0 3px 3px;"></div>
<div class="t" style="left:162.21px;top:779.94px;font-size:7.89px;color:#e8e8f1;font-weight:700;letter-spacing:0.47px;transform:scaleX(0.982);transform-origin:0 0;">6</div>
<div style="left:183.4px;top:725px;width:36.25px;height:75px;background:linear-gradient(#50516d,#53546f);border-radius:0px 0px 3px 3px;"></div>
<div style="left:183.4px;top:796px;width:36.25px;height:4px;background:#e064e8;border-radius:0 0 3px 3px;"></div>
<div class="t" style="left:199.41px;top:779.94px;font-size:7.89px;color:#e8e8f1;font-weight:700;letter-spacing:0.47px;transform:scaleX(0.982);transform-origin:0 0;">8</div>
<div style="left:220.85px;top:725px;width:36.25px;height:75px;background:linear-gradient(#50516d,#53546f);border-radius:0px 0px 3px 3px;"></div>
<div style="left:258.3px;top:725px;width:36.25px;height:75px;background:linear-gradient(#50516d,#53546f);border-radius:0px 3px 3px 3px;"></div>
<div class="t" style="left:49.38px;top:785.04px;font-size:7.75px;color:#e8e8f1;font-weight:700;letter-spacing:0.46px;transform:scaleX(0.850);transform-origin:0 0;">1</div>
<div style="left:54.4px;top:723.6px;width:25.3px;height:45px;background:#26273a;border-radius:0 0 4px 4px;"></div>
<div style="left:55.4px;top:723.6px;width:23.3px;height:44px;background:#53546f;border-radius:0 0 3px 3px;"></div>
<div style="left:55.4px;top:763.5px;width:23.3px;height:4.1px;background:#f39a5c;border-radius:0 0 3px 3px;"></div>
<div class="t" style="left:64.93px;top:745.42px;font-size:8.03px;color:#e8e8f1;font-weight:700;letter-spacing:0.48px;transform:scaleX(0.920);transform-origin:0 0;">2</div>
<div style="left:97.4px;top:723.6px;width:25.1px;height:45px;background:#26273a;border-radius:0 0 4px 4px;"></div>
<div style="left:98.4px;top:723.6px;width:23.1px;height:44px;background:#53546f;border-radius:0 0 3px 3px;"></div>
<div style="left:98.4px;top:763.5px;width:23.1px;height:4.1px;background:#52e0a0;border-radius:0 0 3px 3px;"></div>
<div class="t" style="left:108.07px;top:745.42px;font-size:8.03px;color:#e8e8f1;font-weight:700;letter-spacing:0.48px;transform:scaleX(0.920);transform-origin:0 0;">4</div>
<div style="left:164.5px;top:723.6px;width:25.1px;height:45px;background:#26273a;border-radius:0 0 4px 4px;"></div>
<div style="left:165.5px;top:723.6px;width:23.1px;height:44px;background:#53546f;border-radius:0 0 3px 3px;"></div>
<div style="left:165.5px;top:763.5px;width:23.1px;height:4.1px;background:#a08cf4;border-radius:0 0 3px 3px;"></div>
<div class="t" style="left:174.93px;top:745.42px;font-size:8.03px;color:#e8e8f1;font-weight:700;letter-spacing:0.48px;transform:scaleX(0.920);transform-origin:0 0;">7</div>
<div style="left:207.7px;top:723.6px;width:24.6px;height:45px;background:#26273a;border-radius:0 0 4px 4px;"></div>
<div style="left:208.7px;top:723.6px;width:22.6px;height:44px;background:#53546f;border-radius:0 0 3px 3px;"></div>
<div style="left:250.4px;top:723.6px;width:25.1px;height:45px;background:#26273a;border-radius:0 0 4px 4px;"></div>
<div style="left:251.4px;top:723.6px;width:23.1px;height:44px;background:#53546f;border-radius:0 0 3px 3px;"></div>
<div style="left:296.2px;top:725px;width:36.25px;height:75px;background:linear-gradient(#50516d,#53546f);border-radius:3px 0px 3px 3px;"></div>
<div class="t" style="left:308.86px;top:772.25px;font-size:9.01px;color:#e8e8f1;font-weight:700;letter-spacing:1.53px;transform:scaleX(0.737);transform-origin:0 0;">C2</div>
<div style="left:333.65px;top:725px;width:36.25px;height:75px;background:linear-gradient(#50516d,#53546f);border-radius:0px 0px 3px 3px;"></div>
<div style="left:333.65px;top:796px;width:36.25px;height:4px;background:#f39a5c;border-radius:0 0 3px 3px;"></div>
<div class="t" style="left:349.72px;top:779.94px;font-size:7.89px;color:#e8e8f1;font-weight:700;letter-spacing:0.47px;transform:scaleX(0.982);transform-origin:0 0;">2</div>
<div style="left:371.1px;top:725px;width:36.25px;height:75px;background:linear-gradient(#50516d,#53546f);border-radius:0px 3px 3px 3px;"></div>
<div style="left:371.1px;top:796px;width:36.25px;height:4px;background:#52e0a0;border-radius:0 0 3px 3px;"></div>
<div class="t" style="left:387.72px;top:779.94px;font-size:7.89px;color:#e8e8f1;font-weight:700;letter-spacing:0.47px;transform:scaleX(0.982);transform-origin:0 0;">4</div>
<div style="left:408.55px;top:725px;width:36.25px;height:75px;background:linear-gradient(#50516d,#53546f);border-radius:3px 0px 3px 3px;"></div>
<div style="left:408.55px;top:796px;width:36.25px;height:4px;background:#4fe0dc;border-radius:0 0 3px 3px;"></div>
<div class="t" style="left:424.93px;top:779.94px;font-size:7.89px;color:#e8e8f1;font-weight:700;letter-spacing:0.47px;transform:scaleX(0.982);transform-origin:0 0;">5</div>
<div style="left:446px;top:725px;width:36.25px;height:75px;background:linear-gradient(#50516d,#53546f);border-radius:0px 0px 3px 3px;"></div>
<div style="left:446px;top:796px;width:36.25px;height:4px;background:#a08cf4;border-radius:0 0 3px 3px;"></div>
<div class="t" style="left:462.13px;top:779.94px;font-size:7.89px;color:#e8e8f1;font-weight:700;letter-spacing:0.47px;transform:scaleX(0.982);transform-origin:0 0;">7</div>
<div style="left:483.45px;top:725px;width:36.25px;height:75px;background:linear-gradient(#50516d,#53546f);border-radius:0px 0px 3px 3px;"></div>
<div style="left:520.9px;top:725px;width:36.25px;height:75px;background:linear-gradient(#50516d,#53546f);border-radius:0px 3px 3px 3px;"></div>
<div class="t" style="left:306.1px;top:786.79px;font-size:6.76px;color:#e8e8f1;font-weight:700;letter-spacing:1.15px;transform:scaleX(0.983);transform-origin:0 0;">ALL</div>
<div style="left:317px;top:723.6px;width:25.3px;height:45px;background:#26273a;border-radius:0 0 4px 4px;"></div>
<div style="left:318px;top:723.6px;width:23.3px;height:44px;background:#53546f;border-radius:0 0 3px 3px;"></div>
<div style="left:318px;top:763.5px;width:23.3px;height:4.1px;background:#d9528a;border-radius:0 0 3px 3px;"></div>
<div class="t" style="left:327.65px;top:745.42px;font-size:8.03px;color:#e8e8f1;font-weight:700;letter-spacing:0.48px;transform:scaleX(0.920);transform-origin:0 0;">1</div>
<div style="left:360px;top:723.6px;width:25.1px;height:45px;background:#26273a;border-radius:0 0 4px 4px;"></div>
<div style="left:361px;top:723.6px;width:23.1px;height:44px;background:#53546f;border-radius:0 0 3px 3px;"></div>
<div style="left:361px;top:763.5px;width:23.1px;height:4.1px;background:#e6e678;border-radius:0 0 3px 3px;"></div>
<div class="t" style="left:370.79px;top:745.42px;font-size:8.03px;color:#e8e8f1;font-weight:700;letter-spacing:0.48px;transform:scaleX(0.920);transform-origin:0 0;">3</div>
<div style="left:427.1px;top:723.6px;width:25.1px;height:45px;background:#26273a;border-radius:0 0 4px 4px;"></div>
<div style="left:428.1px;top:723.6px;width:23.1px;height:44px;background:#53546f;border-radius:0 0 3px 3px;"></div>
<div style="left:428.1px;top:763.5px;width:23.1px;height:4.1px;background:#7cc2f4;border-radius:0 0 3px 3px;"></div>
<div class="t" style="left:437.65px;top:745.42px;font-size:8.03px;color:#e8e8f1;font-weight:700;letter-spacing:0.48px;transform:scaleX(0.920);transform-origin:0 0;">6</div>
<div style="left:470.3px;top:723.6px;width:24.6px;height:45px;background:#26273a;border-radius:0 0 4px 4px;"></div>
<div style="left:471.3px;top:723.6px;width:22.6px;height:44px;background:#53546f;border-radius:0 0 3px 3px;"></div>
<div style="left:471.3px;top:763.5px;width:22.6px;height:4.1px;background:#e064e8;border-radius:0 0 3px 3px;"></div>
<div class="t" style="left:480.72px;top:745.42px;font-size:8.03px;color:#e8e8f1;font-weight:700;letter-spacing:0.48px;transform:scaleX(0.920);transform-origin:0 0;">8</div>
<div style="left:513px;top:723.6px;width:25.1px;height:45px;background:#26273a;border-radius:0 0 4px 4px;"></div>
<div style="left:514px;top:723.6px;width:23.1px;height:44px;background:#53546f;border-radius:0 0 3px 3px;"></div>
<div style="left:558.9px;top:725px;width:36.25px;height:75px;background:linear-gradient(#50516d,#53546f);border-radius:3px 0px 3px 3px;"></div>
<div style="left:558.9px;top:796px;width:36.25px;height:4px;background:#ff6b7e;border-radius:0 0 3px 3px;"></div>
<div class="t" style="left:570.58px;top:777.87px;font-size:8.87px;color:#e8e8f1;font-weight:700;letter-spacing:1.51px;transform:scaleX(0.926);transform-origin:0 0;">C3</div>
<div style="left:596.35px;top:725px;width:36.25px;height:75px;background:linear-gradient(#50516d,#53546f);border-radius:0px 0px 3px 3px;"></div>
<div style="left:596.35px;top:796px;width:36.25px;height:4px;background:#ff6b7e;border-radius:0 0 3px 3px;"></div>
<div style="left:633.8px;top:725px;width:36.25px;height:75px;background:linear-gradient(#50516d,#53546f);border-radius:0px 3px 3px 3px;"></div>
<div style="left:633.8px;top:796px;width:36.25px;height:4px;background:#ff6b7e;border-radius:0 0 3px 3px;"></div>
<div style="left:671.25px;top:725px;width:36.25px;height:75px;background:linear-gradient(#50516d,#53546f);border-radius:3px 0px 3px 3px;"></div>
<div style="left:671.25px;top:796px;width:36.25px;height:4px;background:#ff6b7e;border-radius:0 0 3px 3px;"></div>
<div style="left:708.7px;top:725px;width:36.25px;height:75px;background:linear-gradient(#50516d,#53546f);border-radius:0px 0px 3px 3px;"></div>
<div style="left:708.7px;top:796px;width:36.25px;height:4px;background:#ff6b7e;border-radius:0 0 3px 3px;"></div>
<div style="left:746.15px;top:725px;width:36.25px;height:75px;background:linear-gradient(#50516d,#53546f);border-radius:0px 0px 3px 3px;"></div>
<div style="left:746.15px;top:796px;width:36.25px;height:4px;background:#ff6b7e;border-radius:0 0 3px 3px;"></div>
<div style="left:783.6px;top:725px;width:36.25px;height:75px;background:linear-gradient(#50516d,#53546f);border-radius:0px 3px 3px 3px;"></div>
<div style="left:783.6px;top:796px;width:36.25px;height:4px;background:#ff6b7e;border-radius:0 0 3px 3px;"></div>
<div style="left:579.7px;top:723.6px;width:25.3px;height:45px;background:#26273a;border-radius:0 0 4px 4px;"></div>
<div style="left:580.7px;top:723.6px;width:23.3px;height:44px;background:#3d3e56;border-radius:0 0 3px 3px;"></div>
<div style="left:580.7px;top:763.5px;width:23.3px;height:4.1px;background:#ff6b7e;border-radius:0 0 3px 3px;"></div>
<div style="left:622.7px;top:723.6px;width:25.1px;height:45px;background:#26273a;border-radius:0 0 4px 4px;"></div>
<div style="left:623.7px;top:723.6px;width:23.1px;height:44px;background:#3d3e56;border-radius:0 0 3px 3px;"></div>
<div style="left:623.7px;top:763.5px;width:23.1px;height:4.1px;background:#ff6b7e;border-radius:0 0 3px 3px;"></div>
<div style="left:689.8px;top:723.6px;width:25.1px;height:45px;background:#26273a;border-radius:0 0 4px 4px;"></div>
<div style="left:690.8px;top:723.6px;width:23.1px;height:44px;background:#3d3e56;border-radius:0 0 3px 3px;"></div>
<div style="left:690.8px;top:763.5px;width:23.1px;height:4.1px;background:#ff6b7e;border-radius:0 0 3px 3px;"></div>
<div style="left:733px;top:723.6px;width:24.6px;height:45px;background:#26273a;border-radius:0 0 4px 4px;"></div>
<div style="left:734px;top:723.6px;width:22.6px;height:44px;background:#3d3e56;border-radius:0 0 3px 3px;"></div>
<div style="left:734px;top:763.5px;width:22.6px;height:4.1px;background:#ff6b7e;border-radius:0 0 3px 3px;"></div>
<div style="left:775.7px;top:723.6px;width:25.1px;height:45px;background:#26273a;border-radius:0 0 4px 4px;"></div>
<div style="left:776.7px;top:723.6px;width:23.1px;height:44px;background:#3d3e56;border-radius:0 0 3px 3px;"></div>
<div style="left:776.7px;top:763.5px;width:23.1px;height:4.1px;background:#ff6b7e;border-radius:0 0 3px 3px;"></div>
<div style="left:821.6px;top:725px;width:36.25px;height:75px;background:linear-gradient(#50516d,#53546f);border-radius:3px 0px 3px 3px;"></div>
<div style="left:821.6px;top:796px;width:36.25px;height:4px;background:#ff6b7e;border-radius:0 0 3px 3px;"></div>
<div class="t" style="left:832.92px;top:777.87px;font-size:8.87px;color:#e8e8f1;font-weight:700;letter-spacing:1.51px;transform:scaleX(0.863);transform-origin:0 0;">C4</div>
<div style="left:859.05px;top:725px;width:36.25px;height:75px;background:linear-gradient(#50516d,#53546f);border-radius:0px 0px 3px 3px;"></div>
<div style="left:859.05px;top:796px;width:36.25px;height:4px;background:#ff6b7e;border-radius:0 0 3px 3px;"></div>
<div style="left:896.5px;top:725px;width:36.25px;height:75px;background:linear-gradient(#50516d,#53546f);border-radius:0px 3px 3px 3px;"></div>
<div style="left:896.5px;top:796px;width:36.25px;height:4px;background:#ff6b7e;border-radius:0 0 3px 3px;"></div>
<div style="left:933.95px;top:725px;width:36.25px;height:75px;background:linear-gradient(#50516d,#53546f);border-radius:3px 0px 3px 3px;"></div>
<div style="left:933.95px;top:796px;width:36.25px;height:4px;background:#ff6b7e;border-radius:0 0 3px 3px;"></div>
<div style="left:971.4px;top:725px;width:36.25px;height:75px;background:linear-gradient(#50516d,#53546f);border-radius:0px 0px 3px 3px;"></div>
<div style="left:971.4px;top:796px;width:36.25px;height:4px;background:#ff6b7e;border-radius:0 0 3px 3px;"></div>
<div style="left:1008.85px;top:725px;width:36.25px;height:75px;background:linear-gradient(#50516d,#53546f);border-radius:0px 0px 3px 3px;"></div>
<div style="left:1008.85px;top:796px;width:36.25px;height:4px;background:#ff6b7e;border-radius:0 0 3px 3px;"></div>
<div style="left:1046.3px;top:725px;width:35.7px;height:75px;background:linear-gradient(#50516d,#53546f);border-radius:0px 3px 10px 3px;"></div>
<div style="left:1046.3px;top:796px;width:35.7px;height:4px;background:#ff6b7e;border-radius:0 0 10px 3px;"></div>
<div style="left:842.4px;top:723.6px;width:25.3px;height:45px;background:#26273a;border-radius:0 0 4px 4px;"></div>
<div style="left:843.4px;top:723.6px;width:23.3px;height:44px;background:#3d3e56;border-radius:0 0 3px 3px;"></div>
<div style="left:843.4px;top:763.5px;width:23.3px;height:4.1px;background:#ff6b7e;border-radius:0 0 3px 3px;"></div>
<div style="left:885.4px;top:723.6px;width:25.1px;height:45px;background:#26273a;border-radius:0 0 4px 4px;"></div>
<div style="left:886.4px;top:723.6px;width:23.1px;height:44px;background:#3d3e56;border-radius:0 0 3px 3px;"></div>
<div style="left:886.4px;top:763.5px;width:23.1px;height:4.1px;background:#ff6b7e;border-radius:0 0 3px 3px;"></div>
<div style="left:952.5px;top:723.6px;width:25.1px;height:45px;background:#26273a;border-radius:0 0 4px 4px;"></div>
<div style="left:953.5px;top:723.6px;width:23.1px;height:44px;background:#3d3e56;border-radius:0 0 3px 3px;"></div>
<div style="left:953.5px;top:763.5px;width:23.1px;height:4.1px;background:#ff6b7e;border-radius:0 0 3px 3px;"></div>
<div style="left:995.7px;top:723.6px;width:24.6px;height:45px;background:#26273a;border-radius:0 0 4px 4px;"></div>
<div style="left:996.7px;top:723.6px;width:22.6px;height:44px;background:#3d3e56;border-radius:0 0 3px 3px;"></div>
<div style="left:996.7px;top:763.5px;width:22.6px;height:4.1px;background:#ff6b7e;border-radius:0 0 3px 3px;"></div>
<div style="left:1038.4px;top:723.6px;width:25.1px;height:45px;background:#26273a;border-radius:0 0 4px 4px;"></div>
<div style="left:1039.4px;top:723.6px;width:23.1px;height:44px;background:#3d3e56;border-radius:0 0 3px 3px;"></div>
<div style="left:1039.4px;top:763.5px;width:23.1px;height:4.1px;background:#ff6b7e;border-radius:0 0 3px 3px;"></div>
</body></html>
